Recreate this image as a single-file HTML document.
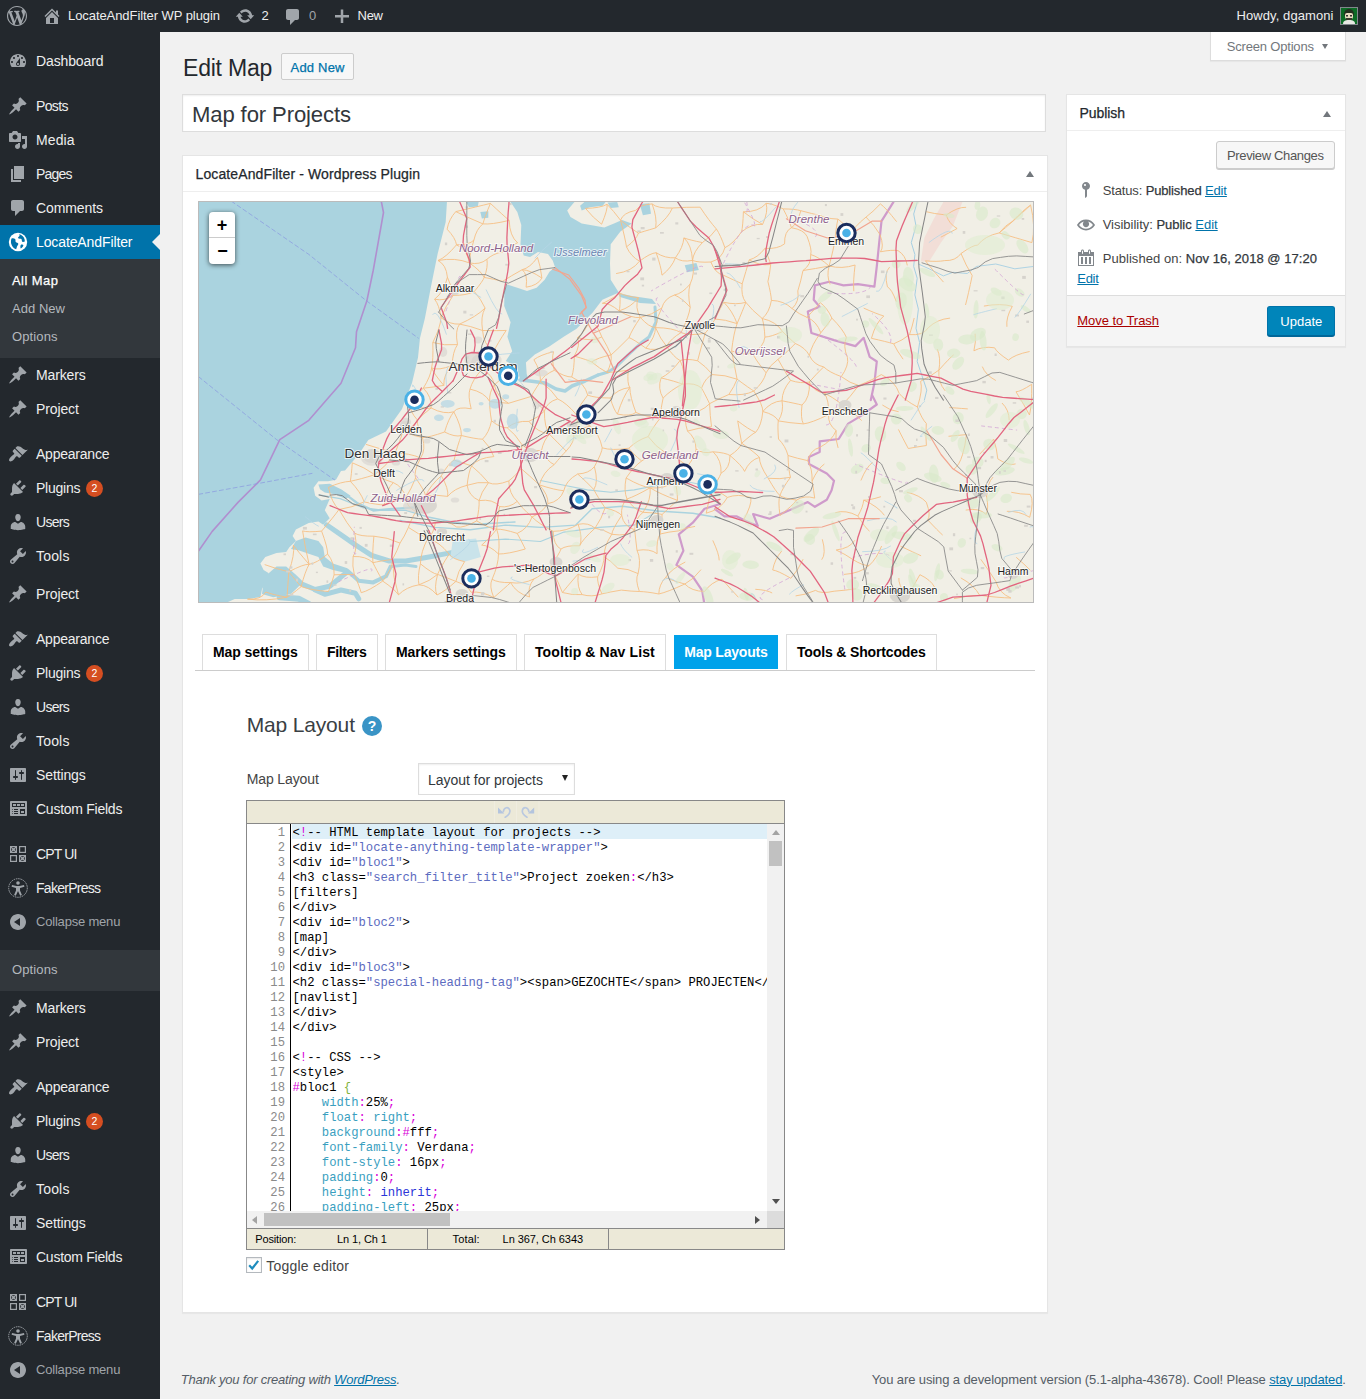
<!DOCTYPE html>
<html lang="en"><head><meta charset="utf-8"><title>Edit Map ‹ LocateAndFilter WP plugin — WordPress</title>
<style>
html,body{margin:0;padding:0}
body{width:1366px;height:1399px;position:relative;overflow:hidden;background:#f1f1f1;font-family:"Liberation Sans", sans-serif;font-size:13px;color:#444}
a{color:#0073aa}
svg{display:block}
</style></head>
<body>
<div style="position:absolute;left:0px;top:0px;width:1366px;height:32px;background:#23282d"></div>
<svg style="position:absolute;left:7px;top:6px" width="20" height="20" viewBox="0 0 20 20"><path fill="#a0a5aa" d="M20 10c0-5.51-4.49-10-10-10C4.48 0 0 4.49 0 10c0 5.52 4.48 10 10 10 5.51 0 10-4.48 10-10zM7.78 15.37L4.37 6.22c.55-.02 1.17-.08 1.17-.08.5-.06.44-1.13-.06-1.11 0 0-1.45.11-2.37.11-.18 0-.37 0-.58-.01C4.12 2.69 6.87 1.11 10 1.11c2.33 0 4.45.87 6.05 2.34-.68-.11-1.65.39-1.65 1.58 0 .74.45 1.36.9 2.1.35.61.55 1.36.55 2.46 0 1.49-1.4 5-1.4 5l-3.03-8.37c.54-.02.82-.17.82-.17.5-.05.44-1.25-.06-1.22 0 0-1.44.12-2.38.12-.87 0-2.33-.12-2.33-.12-.5-.03-.56 1.2-.06 1.22l.92.08 1.26 3.41zM17.41 10c.24-.64.74-1.87.43-4.25.7 1.29 1.05 2.71 1.05 4.25 0 3.29-1.73 6.24-4.4 7.78.97-2.59 1.94-5.2 2.92-7.78zM6.1 18.09C3.12 16.65 1.11 13.53 1.11 10c0-1.3.23-2.48.72-3.59C3.25 10.3 4.67 14.2 6.1 18.09zm4.03-6.63l2.58 6.98c-.86.29-1.76.45-2.71.45-.79 0-1.57-.11-2.29-.33.81-2.38 1.62-4.74 2.42-7.1z"/></svg>
<svg style="position:absolute;left:42px;top:6px" width="20" height="20" viewBox="0 0 20 20"><path fill="#a0a5aa" d="M16 8.5l1.53 1.53-1.06 1.06L10 4.62l-6.47 6.47-1.06-1.06L10 2.5l4 4v-2h2v4zm-6-2.46l6 5.99V18H4v-5.97zM12 17v-5H8v5h4z"/></svg>
<span id="t0" style="position:absolute;left:68px;top:6px;height:20px;line-height:20px;font-size:13px;color:#eee;white-space:nowrap;letter-spacing:-0.070px;">LocateAndFilter WP plugin</span>
<svg style="position:absolute;left:235px;top:6px" width="20" height="20" viewBox="0 0 20 20"><path fill="#a0a5aa" d="M10.2 3.28c3.53 0 6.43 2.61 6.92 6h2.08l-3.5 4-3.5-4h2.32c-.45-1.97-2.21-3.45-4.32-3.45-1.45 0-2.73.71-3.54 1.78L4.95 5.66C6.23 4.2 8.11 3.28 10.2 3.28zm-.4 13.44c-3.52 0-6.43-2.61-6.92-6H.8l3.5-4c1.17 1.33 2.33 2.67 3.5 4H5.48c.45 1.97 2.21 3.45 4.32 3.45 1.45 0 2.73-.71 3.54-1.78l1.71 1.95c-1.28 1.46-3.15 2.38-5.25 2.38z"/></svg>
<span id="t1" style="position:absolute;left:261.5px;top:6px;height:20px;line-height:20px;font-size:13px;color:#eee;white-space:nowrap;">2</span>
<svg style="position:absolute;left:283px;top:7px" width="20" height="20" viewBox="0 0 20 20"><path fill="#a0a5aa" d="M5 2h9c1.1 0 2 .9 2 2v7c0 1.1-.9 2-2 2h-2l-5 5v-5H5c-1.1 0-2-.9-2-2V4c0-1.1.9-2 2-2z"/></svg>
<span id="t2" style="position:absolute;left:309px;top:6px;height:20px;line-height:20px;font-size:13px;color:#a0a5aa;white-space:nowrap;">0</span>
<svg style="position:absolute;left:332px;top:6px" width="20" height="20" viewBox="0 0 20 20"><path fill="#a0a5aa" d="M17 9v2.5h-5.75V17h-2.5v-5.5H3V9h5.75V3.5h2.5V9H17z"/></svg>
<span id="t3" style="position:absolute;left:357.5px;top:6px;height:20px;line-height:20px;font-size:13px;color:#eee;white-space:nowrap;letter-spacing:-0.256px;">New</span>
<span id="t4" style="position:absolute;left:1236.5px;top:6px;height:20px;line-height:20px;font-size:13px;color:#eee;white-space:nowrap;letter-spacing:0.087px;">Howdy, dgamoni</span>
<svg style="position:absolute;left:1340px;top:7px" width="18" height="18" viewBox="0 0 18 18"><rect width="18" height="18" fill="#82878c"/><rect x="1" y="1" width="16" height="16" fill="#0c6a25"/><path d="M4 8c0-4 2-6 5-6s5 2 5 6l-1 1H5z" fill="#23301f"/><rect x="5" y="6" width="8" height="6" rx="2" fill="#e9dcc0"/><rect x="6" y="8" width="2" height="1.500" fill="#333"/><rect x="10" y="8" width="2" height="1.500" fill="#333"/><path d="M6 11h6v2l-3 1-3-1z" fill="#3a3a2e"/><path d="M3 17c0-3 2-4 6-4s6 1 6 4z" fill="#e8e8e4"/></svg>
<div style="position:absolute;left:0px;top:32px;width:160px;height:1367px;background:#23282d"></div>
<svg style="position:absolute;left:8px;top:51px" width="20" height="20" viewBox="0 0 20 20"><path fill="#a0a5aa" d="M3.76 16h12.48c1.1-1.37 1.76-3.11 1.76-5 0-4.42-3.58-8-8-8s-8 3.58-8 8c0 1.89.66 3.63 1.76 5zM10 4c.55 0 1 .45 1 1s-.45 1-1 1-1-.45-1-1 .45-1 1-1zM6 6c.55 0 1 .45 1 1s-.45 1-1 1-1-.45-1-1 .45-1 1-1zm8 0c.55 0 1 .45 1 1s-.45 1-1 1-1-.45-1-1 .45-1 1-1zm-5.37 5.55L12 7v6c0 1.1-.9 2-2 2s-2-.9-2-2c0-.57.24-1.08.63-1.45zM4 10c.55 0 1 .45 1 1s-.45 1-1 1-1-.45-1-1 .45-1 1-1zm12 0c.55 0 1 .45 1 1s-.45 1-1 1-1-.45-1-1 .45-1 1-1zm-5 3c0-.55-.45-1-1-1s-1 .45-1 1 .45 1 1 1 1-.45 1-1z"/></svg>
<span id="t5" style="position:absolute;left:36px;top:51px;height:20px;line-height:20px;font-size:14px;color:#eee;white-space:nowrap;letter-spacing:-0.125px;">Dashboard</span>
<svg style="position:absolute;left:8px;top:96px" width="20" height="20" viewBox="0 0 20 20"><path fill="#a0a5aa" d="M10.44 3.02l1.82-1.82 6.36 6.35-1.83 1.82c-1.05-.68-2.48-.57-3.41.36l-.75.75c-.92.93-1.04 2.35-.35 3.41l-1.83 1.82-2.41-2.41-2.8 2.79c-.42.42-3.38 2.71-3.8 2.29s1.86-3.39 2.28-3.81l2.79-2.79L4.1 9.36l1.83-1.82c1.05.69 2.48.57 3.4-.36l.75-.75c.93-.92 1.05-2.35.36-3.41z"/></svg>
<span id="t6" style="position:absolute;left:36px;top:96px;height:20px;line-height:20px;font-size:14px;color:#eee;white-space:nowrap;letter-spacing:-0.630px;">Posts</span>
<svg style="position:absolute;left:8px;top:130px" width="20" height="20" viewBox="0 0 20 20"><path fill="#a0a5aa" d="M13 11V4c0-.55-.45-1-1-1h-1.67L9 1H5L3.67 3H2c-.55 0-1 .45-1 1v7c0 .55.45 1 1 1h10c.55 0 1-.45 1-1zM7 4.5c1.38 0 2.5 1.12 2.5 2.5S8.38 9.5 7 9.5 4.5 8.38 4.5 7 5.62 4.5 7 4.5zM14 6h5v10.5c0 1.38-1.12 2.5-2.5 2.5S14 17.88 14 16.5s1.12-2.5 2.5-2.5c.17 0 .34.02.5.05V9h-3V6zm-4 8.05V13h2v3.5c0 1.38-1.12 2.5-2.5 2.5S7 17.88 7 16.5 8.12 14 9.5 14c.17 0 .34.02.5.05z"/></svg>
<span id="t7" style="position:absolute;left:36px;top:130px;height:20px;line-height:20px;font-size:14px;color:#eee;white-space:nowrap;letter-spacing:0.092px;">Media</span>
<svg style="position:absolute;left:8px;top:164px" width="20" height="20" viewBox="0 0 20 20"><path fill="#a0a5aa" d="M6 15V2h10v13H6zm-1 1h8v2H3V5h2v11z"/></svg>
<span id="t8" style="position:absolute;left:36px;top:164px;height:20px;line-height:20px;font-size:14px;color:#eee;white-space:nowrap;letter-spacing:-0.801px;">Pages</span>
<svg style="position:absolute;left:8px;top:198px" width="20" height="20" viewBox="0 0 20 20"><path fill="#a0a5aa" d="M5 2h9c1.1 0 2 .9 2 2v7c0 1.1-.9 2-2 2h-2l-5 5v-5H5c-1.1 0-2-.9-2-2V4c0-1.1.9-2 2-2z"/></svg>
<span id="t9" style="position:absolute;left:36px;top:198px;height:20px;line-height:20px;font-size:14px;color:#eee;white-space:nowrap;letter-spacing:-0.098px;">Comments</span>
<div style="position:absolute;left:0px;top:225px;width:160px;height:34px;background:#0073aa"></div>
<div style="position:absolute;left:152px;top:234px;width:0;height:0;border:8px solid transparent;border-right-color:#f1f1f1;border-left-width:0"></div>
<svg style="position:absolute;left:8px;top:232px" width="20" height="20" viewBox="0 0 20 20"><circle cx="10" cy="10" r="9.200" fill="#fff"/><path fill="#0073aa" d="M3.500 6.500c1.500-.5 3-.2 3.800.8.600.9-.2 1.800.5 2.600.8.900 2 .6 2.400 1.700.4 1.200-.7 2-1.200 3-.4.900-.3 1.900-.9 2.700-2.300-.9-4.300-3-4.900-5.600-.4-1.700-.3-3.600.3-5.200zM11 2.200c1 .900.600 2-.3 2.600-.9.500-.8 1.400 0 1.800.9.400 2-.2 2.700.5.700.800.100 1.900.9 2.600.7.500 1.700.200 2.500-.200.300-2.600-1.200-5.300-3.600-6.600-.7-.4-1.400-.6-2.200-.7zM13.200 12.500c.9-.3 1.900.1 2.200.9-.5 1.300-1.500 2.500-2.700 3.200-.5-1.300-.5-3.500.5-4.100z"/></svg>
<span id="t10" style="position:absolute;left:36px;top:232px;height:20px;line-height:20px;font-size:14px;color:#fff;white-space:nowrap;letter-spacing:-0.111px;">LocateAndFilter</span>
<div style="position:absolute;left:0px;top:259px;width:160px;height:99px;background:#32373c"></div>
<span id="t11" style="position:absolute;left:12px;top:270.7px;height:20px;line-height:20px;font-size:13px;color:#fff;white-space:nowrap;-webkit-text-stroke:.25px #fff;letter-spacing:0.440px;">All Map</span>
<span id="t12" style="position:absolute;left:12px;top:298.7px;height:20px;line-height:20px;font-size:13px;color:#b4b9be;white-space:nowrap;letter-spacing:0.040px;">Add New</span>
<span id="t13" style="position:absolute;left:12px;top:326.7px;height:20px;line-height:20px;font-size:13px;color:#b4b9be;white-space:nowrap;letter-spacing:0.116px;">Options</span>
<svg style="position:absolute;left:8px;top:365px" width="20" height="20" viewBox="0 0 20 20"><path fill="#a0a5aa" d="M10.44 3.02l1.82-1.82 6.36 6.35-1.83 1.82c-1.05-.68-2.48-.57-3.41.36l-.75.75c-.92.93-1.04 2.35-.35 3.41l-1.83 1.82-2.41-2.41-2.8 2.79c-.42.42-3.38 2.71-3.8 2.29s1.86-3.39 2.28-3.81l2.79-2.79L4.1 9.36l1.83-1.82c1.05.69 2.48.57 3.4-.36l.75-.75c.93-.92 1.05-2.35.36-3.41z"/></svg>
<span id="t14" style="position:absolute;left:36px;top:365px;height:20px;line-height:20px;font-size:14px;color:#eee;white-space:nowrap;letter-spacing:-0.127px;">Markers</span>
<svg style="position:absolute;left:8px;top:399px" width="20" height="20" viewBox="0 0 20 20"><path fill="#a0a5aa" d="M10.44 3.02l1.82-1.82 6.36 6.35-1.83 1.82c-1.05-.68-2.48-.57-3.41.36l-.75.75c-.92.93-1.04 2.35-.35 3.41l-1.83 1.82-2.41-2.41-2.8 2.79c-.42.42-3.38 2.71-3.8 2.29s1.86-3.39 2.28-3.81l2.79-2.79L4.1 9.36l1.83-1.82c1.05.69 2.48.57 3.4-.36l.75-.75c.93-.92 1.05-2.35.36-3.41z"/></svg>
<span id="t15" style="position:absolute;left:36px;top:399px;height:20px;line-height:20px;font-size:14px;color:#eee;white-space:nowrap;letter-spacing:-0.130px;">Project</span>
<svg style="position:absolute;left:8px;top:444px" width="20" height="20" viewBox="0 0 20 20"><path fill="#a0a5aa" d="M14.48 11.06L7.41 3.99l1.5-1.5c.5-.56 2.3-.47 3.51.32 1.21.8 1.43 1.28 2.91 2.1 1.18.64 2.45 1.26 4.45.85zm-.71.71L6.7 4.7 4.93 6.47c-.39.39-.39 1.02 0 1.41l1.06 1.06c.39.39.39 1.03 0 1.42-.6.6-1.43 1.11-2.21 1.69-.35.26-.7.53-1.01.84C1.43 14.23.4 16.08 1.4 17.07c.99 1 2.84-.03 4.18-1.36.31-.31.58-.66.85-1.02.57-.78 1.08-1.61 1.69-2.21.39-.39 1.02-.39 1.41 0l1.06 1.06c.39.39 1.02.39 1.41 0z"/></svg>
<span id="t16" style="position:absolute;left:36px;top:444px;height:20px;line-height:20px;font-size:14px;color:#eee;white-space:nowrap;letter-spacing:-0.223px;">Appearance</span>
<svg style="position:absolute;left:8px;top:478px" width="20" height="20" viewBox="0 0 20 20"><path fill="#a0a5aa" d="M13.11 4.36L9.87 7.6 8 5.73l3.24-3.24c.35-.34 1.05-.2 1.56.32.52.51.66 1.21.31 1.55zm-8 1.77l.91-1.12 9.01 9.01-1.19.84c-.71.71-2.63 1.16-3.82 1.16H6.14L4.9 17.26c-.59.59-1.54.59-2.12 0-.59-.58-.59-1.53 0-2.12l1.24-1.24v-3.88c0-1.13.4-3.19 1.09-3.89zm7.26 3.97l3.24-3.24c.34-.35 1.04-.21 1.55.31.52.51.66 1.21.31 1.55l-3.24 3.25z"/></svg>
<span id="t17" style="position:absolute;left:36px;top:478px;height:20px;line-height:20px;font-size:14px;color:#eee;white-space:nowrap;letter-spacing:-0.237px;">Plugins</span>
<div style="position:absolute;left:86px;top:479.5px;width:17px;height:17px;border-radius:9px;background:#d54e21;color:#fff;font-size:10.500px;line-height:17px;text-align:center">2</div>
<svg style="position:absolute;left:8px;top:512px" width="20" height="20" viewBox="0 0 20 20"><path fill="#a0a5aa" d="M10 9.25c-2.27 0-2.73-3.44-2.73-3.44C7 4.02 7.82 2 9.97 2c2.16 0 2.98 2.02 2.71 3.81 0 0-.41 3.44-2.68 3.44zm0 2.57L12.72 10c2.39 0 4.52 2.33 4.52 4.53v2.49s-3.65 1.13-7.24 1.13c-3.65 0-7.24-1.13-7.24-1.13v-2.49c0-2.25 1.94-4.48 4.47-4.48z"/></svg>
<span id="t18" style="position:absolute;left:36px;top:512px;height:20px;line-height:20px;font-size:14px;color:#eee;white-space:nowrap;letter-spacing:-0.716px;">Users</span>
<svg style="position:absolute;left:8px;top:546px" width="20" height="20" viewBox="0 0 20 20"><path fill="#a0a5aa" d="M16.68 9.77c-1.34 1.34-3.3 1.67-4.95.99l-5.41 6.52c-.99.99-2.59.99-3.58 0s-.99-2.59 0-3.57l6.52-5.42c-.68-1.65-.35-3.61.99-4.95 1.28-1.28 3.12-1.62 4.72-1.06l-2.89 2.89 2.82 2.82 2.86-2.87c.53 1.58.18 3.39-1.08 4.65zM3.81 16.21c.4.39 1.04.39 1.43 0 .4-.4.4-1.04 0-1.43-.39-.4-1.03-.4-1.43 0-.39.39-.39 1.03 0 1.43z"/></svg>
<span id="t19" style="position:absolute;left:36px;top:546px;height:20px;line-height:20px;font-size:14px;color:#eee;white-space:nowrap;letter-spacing:0.178px;">Tools</span>
<svg style="position:absolute;left:8px;top:584px" width="20" height="20" viewBox="0 0 20 20"><path fill="#a0a5aa" d="M10.44 3.02l1.82-1.82 6.36 6.35-1.83 1.82c-1.05-.68-2.48-.57-3.41.36l-.75.75c-.92.93-1.04 2.35-.35 3.41l-1.83 1.82-2.41-2.41-2.8 2.79c-.42.42-3.38 2.71-3.8 2.29s1.86-3.39 2.28-3.81l2.79-2.79L4.1 9.36l1.83-1.82c1.05.69 2.48.57 3.4-.36l.75-.75c.93-.92 1.05-2.35.36-3.41z"/></svg>
<span id="t20" style="position:absolute;left:36px;top:584px;height:20px;line-height:20px;font-size:14px;color:#eee;white-space:nowrap;letter-spacing:-0.130px;">Project</span>
<svg style="position:absolute;left:8px;top:629px" width="20" height="20" viewBox="0 0 20 20"><path fill="#a0a5aa" d="M14.48 11.06L7.41 3.99l1.5-1.5c.5-.56 2.3-.47 3.51.32 1.21.8 1.43 1.28 2.91 2.1 1.18.64 2.45 1.26 4.45.85zm-.71.71L6.7 4.7 4.93 6.47c-.39.39-.39 1.02 0 1.41l1.06 1.06c.39.39.39 1.03 0 1.42-.6.6-1.43 1.11-2.21 1.69-.35.26-.7.53-1.01.84C1.43 14.23.4 16.08 1.4 17.07c.99 1 2.84-.03 4.18-1.36.31-.31.58-.66.85-1.02.57-.78 1.08-1.61 1.69-2.21.39-.39 1.02-.39 1.41 0l1.06 1.06c.39.39 1.02.39 1.41 0z"/></svg>
<span id="t21" style="position:absolute;left:36px;top:629px;height:20px;line-height:20px;font-size:14px;color:#eee;white-space:nowrap;letter-spacing:-0.223px;">Appearance</span>
<svg style="position:absolute;left:8px;top:663px" width="20" height="20" viewBox="0 0 20 20"><path fill="#a0a5aa" d="M13.11 4.36L9.87 7.6 8 5.73l3.24-3.24c.35-.34 1.05-.2 1.56.32.52.51.66 1.21.31 1.55zm-8 1.77l.91-1.12 9.01 9.01-1.19.84c-.71.71-2.63 1.16-3.82 1.16H6.14L4.9 17.26c-.59.59-1.54.59-2.12 0-.59-.58-.59-1.53 0-2.12l1.24-1.24v-3.88c0-1.13.4-3.19 1.09-3.89zm7.26 3.97l3.24-3.24c.34-.35 1.04-.21 1.55.31.52.51.66 1.21.31 1.55l-3.24 3.25z"/></svg>
<span id="t22" style="position:absolute;left:36px;top:663px;height:20px;line-height:20px;font-size:14px;color:#eee;white-space:nowrap;letter-spacing:-0.237px;">Plugins</span>
<div style="position:absolute;left:86px;top:664.5px;width:17px;height:17px;border-radius:9px;background:#d54e21;color:#fff;font-size:10.500px;line-height:17px;text-align:center">2</div>
<svg style="position:absolute;left:8px;top:697px" width="20" height="20" viewBox="0 0 20 20"><path fill="#a0a5aa" d="M10 9.25c-2.27 0-2.73-3.44-2.73-3.44C7 4.02 7.82 2 9.97 2c2.16 0 2.98 2.02 2.71 3.81 0 0-.41 3.44-2.68 3.44zm0 2.57L12.72 10c2.39 0 4.52 2.33 4.52 4.53v2.49s-3.65 1.13-7.24 1.13c-3.65 0-7.24-1.13-7.24-1.13v-2.49c0-2.25 1.94-4.48 4.47-4.48z"/></svg>
<span id="t23" style="position:absolute;left:36px;top:697px;height:20px;line-height:20px;font-size:14px;color:#eee;white-space:nowrap;letter-spacing:-0.716px;">Users</span>
<svg style="position:absolute;left:8px;top:731px" width="20" height="20" viewBox="0 0 20 20"><path fill="#a0a5aa" d="M16.68 9.77c-1.34 1.34-3.3 1.67-4.95.99l-5.41 6.52c-.99.99-2.59.99-3.58 0s-.99-2.59 0-3.57l6.52-5.42c-.68-1.65-.35-3.61.99-4.95 1.28-1.28 3.12-1.62 4.72-1.06l-2.89 2.89 2.82 2.82 2.86-2.87c.53 1.58.18 3.39-1.08 4.65zM3.81 16.21c.4.39 1.04.39 1.43 0 .4-.4.4-1.04 0-1.43-.39-.4-1.03-.4-1.43 0-.39.39-.39 1.03 0 1.43z"/></svg>
<span id="t24" style="position:absolute;left:36px;top:731px;height:20px;line-height:20px;font-size:14px;color:#eee;white-space:nowrap;letter-spacing:0.178px;">Tools</span>
<svg style="position:absolute;left:8px;top:765px" width="20" height="20" viewBox="0 0 20 20"><path fill="#a0a5aa" d="M18 16V4c0-.55-.45-1-1-1H3c-.55 0-1 .45-1 1v12c0 .55.45 1 1 1h14c.55 0 1-.45 1-1zM8 11h1c.55 0 1 .45 1 1s-.45 1-1 1H8v1.5c0 .28-.22.5-.5.5s-.5-.22-.5-.5V13H6c-.55 0-1-.45-1-1s.45-1 1-1h1V5.5c0-.28.22-.5.5-.5s.5.22.5.5V11zm5-2h-1c-.55 0-1-.45-1-1s.45-1 1-1h1V5.5c0-.28.22-.5.5-.5s.5.22.5.5V7h1c.55 0 1 .45 1 1s-.45 1-1 1h-1v5.5c0 .28-.22.5-.5.5s-.5-.22-.5-.5V9z"/></svg>
<span id="t25" style="position:absolute;left:36px;top:765px;height:20px;line-height:20px;font-size:14px;color:#eee;white-space:nowrap;letter-spacing:-0.113px;">Settings</span>
<svg style="position:absolute;left:8px;top:799px" width="20" height="20" viewBox="0 0 20 20"><path fill="#a0a5aa" d="M19 16V3c0-.55-.45-1-1-1H3c-.55 0-1 .45-1 1v13c0 .55.45 1 1 1h15c.55 0 1-.45 1-1zM4 4h13v4H4V4zm1 1v2h3V5H5zm4 0v2h3V5H9zm4 0v2h3V5h-3zm-8.5 5c.28 0 .5.22.5.5s-.22.5-.5.5-.5-.22-.5-.5.22-.5.5-.5zM6 10h4v1H6v-1zm6 0h5v5h-5v-5zm-7.500 2c.28 0 .5.22.5.5s-.22.5-.5.5-.5-.22-.5-.5.22-.5.5-.5zM6 12h4v1H6v-1zm7 0v2h3v-2h-3zm-8.500 2c.28 0 .5.22.5.5s-.22.5-.5.5-.5-.22-.5-.5.22-.5.5-.5zM6 14h4v1H6v-1z"/></svg>
<span id="t26" style="position:absolute;left:36px;top:799px;height:20px;line-height:20px;font-size:14px;color:#eee;white-space:nowrap;letter-spacing:-0.257px;">Custom Fields</span>
<svg style="position:absolute;left:8px;top:844px" width="20" height="20" viewBox="0 0 20 20"><g fill="none" stroke="#a0a5aa" stroke-width="1.2"><rect x="2.6" y="2.600" width="5.800" height="5.800"/><rect x="11.600" y="2.600" width="5.800" height="5.800"/><rect x="2.600" y="11.600" width="5.800" height="5.800"/><rect x="11.600" y="11.600" width="5.800" height="5.800"/></g><g stroke="#a0a5aa" stroke-width="1.100"><path d="M2.600 2.600l5.800 5.800M8.400 2.600l-5.800 5.800M11.600 11.600l5.800 5.800M17.400 11.600l-5.800 5.800"/></g><g fill="#a0a5aa"><rect x="4.300" y="4.300" width="2.400" height="2.400"/><rect x="13.300" y="13.300" width="2.400" height="2.400"/></g></svg>
<span id="t27" style="position:absolute;left:36px;top:844px;height:20px;line-height:20px;font-size:14px;color:#eee;white-space:nowrap;letter-spacing:-0.869px;">CPT UI</span>
<svg style="position:absolute;left:7px;top:877px" width="22" height="22" viewBox="0 0 22 22"><circle cx="11" cy="11" r="9.300" fill="none" stroke="#a0a5aa" stroke-width="1" stroke-dasharray="1.500 .800"/><circle cx="11" cy="6" r="1.800" fill="#a0a5aa"/><path fill="#a0a5aa" d="M5 8l4.400 1h3.200l4.400-1 .4 1.700-4.400 1.300v2.400l1.900 4.600-1.700.7-2.100-4.500h-.2l-2.100 4.500-1.700-.7 1.900-4.600v-2.400l-4.400-1.300z"/></svg>
<span id="t28" style="position:absolute;left:36px;top:878px;height:20px;line-height:20px;font-size:14px;color:#eee;white-space:nowrap;letter-spacing:-0.731px;">FakerPress</span>
<svg style="position:absolute;left:8px;top:912px" width="20" height="20" viewBox="0 0 20 20"><path fill="#a0a5aa" d="M10 2.020c-4.420 0-8 3.580-8 8s3.580 8 8 8 8-3.580 8-8-3.580-8-8-8zM12 14l-6-4 6-4v8z"/></svg>
<span id="t29" style="position:absolute;left:36px;top:912px;height:20px;line-height:20px;font-size:13px;color:#a0a5aa;white-space:nowrap;letter-spacing:-0.194px;">Collapse menu</span>
<div style="position:absolute;left:0px;top:950px;width:160px;height:41px;background:#32373c"></div>
<span id="t30" style="position:absolute;left:12px;top:959.5px;height:20px;line-height:20px;font-size:13px;color:#b4b9be;white-space:nowrap;letter-spacing:0.116px;">Options</span>
<svg style="position:absolute;left:8px;top:998px" width="20" height="20" viewBox="0 0 20 20"><path fill="#a0a5aa" d="M10.44 3.02l1.82-1.82 6.36 6.35-1.83 1.82c-1.05-.68-2.48-.57-3.41.36l-.75.75c-.92.93-1.04 2.35-.35 3.41l-1.83 1.82-2.41-2.41-2.8 2.79c-.42.42-3.38 2.71-3.8 2.29s1.86-3.39 2.28-3.81l2.79-2.79L4.1 9.36l1.83-1.82c1.05.69 2.48.57 3.4-.36l.75-.75c.93-.92 1.05-2.35.36-3.41z"/></svg>
<span id="t31" style="position:absolute;left:36px;top:998px;height:20px;line-height:20px;font-size:14px;color:#eee;white-space:nowrap;letter-spacing:-0.127px;">Markers</span>
<svg style="position:absolute;left:8px;top:1032px" width="20" height="20" viewBox="0 0 20 20"><path fill="#a0a5aa" d="M10.44 3.02l1.82-1.82 6.36 6.35-1.83 1.82c-1.05-.68-2.48-.57-3.41.36l-.75.75c-.92.93-1.04 2.35-.35 3.41l-1.83 1.82-2.41-2.41-2.8 2.79c-.42.42-3.38 2.71-3.8 2.29s1.86-3.39 2.28-3.81l2.79-2.79L4.1 9.36l1.83-1.82c1.05.69 2.48.57 3.4-.36l.75-.75c.93-.92 1.05-2.35.36-3.41z"/></svg>
<span id="t32" style="position:absolute;left:36px;top:1032px;height:20px;line-height:20px;font-size:14px;color:#eee;white-space:nowrap;letter-spacing:-0.130px;">Project</span>
<svg style="position:absolute;left:8px;top:1077px" width="20" height="20" viewBox="0 0 20 20"><path fill="#a0a5aa" d="M14.48 11.06L7.41 3.99l1.5-1.5c.5-.56 2.3-.47 3.51.32 1.21.8 1.43 1.28 2.91 2.1 1.18.64 2.45 1.26 4.45.85zm-.71.71L6.7 4.7 4.93 6.47c-.39.39-.39 1.02 0 1.41l1.06 1.06c.39.39.39 1.03 0 1.42-.6.6-1.43 1.11-2.21 1.69-.35.26-.7.53-1.01.84C1.43 14.23.4 16.08 1.4 17.07c.99 1 2.84-.03 4.18-1.36.31-.31.58-.66.85-1.02.57-.78 1.08-1.61 1.69-2.21.39-.39 1.02-.39 1.41 0l1.06 1.06c.39.39 1.02.39 1.41 0z"/></svg>
<span id="t33" style="position:absolute;left:36px;top:1077px;height:20px;line-height:20px;font-size:14px;color:#eee;white-space:nowrap;letter-spacing:-0.223px;">Appearance</span>
<svg style="position:absolute;left:8px;top:1111px" width="20" height="20" viewBox="0 0 20 20"><path fill="#a0a5aa" d="M13.11 4.36L9.87 7.6 8 5.73l3.24-3.24c.35-.34 1.05-.2 1.56.32.52.51.66 1.21.31 1.55zm-8 1.77l.91-1.12 9.01 9.01-1.19.84c-.71.71-2.63 1.16-3.82 1.16H6.14L4.9 17.26c-.59.59-1.54.59-2.12 0-.59-.58-.59-1.53 0-2.12l1.24-1.24v-3.88c0-1.13.4-3.19 1.09-3.89zm7.26 3.97l3.24-3.24c.34-.35 1.04-.21 1.55.31.52.51.66 1.21.31 1.55l-3.24 3.25z"/></svg>
<span id="t34" style="position:absolute;left:36px;top:1111px;height:20px;line-height:20px;font-size:14px;color:#eee;white-space:nowrap;letter-spacing:-0.237px;">Plugins</span>
<div style="position:absolute;left:86px;top:1112.5px;width:17px;height:17px;border-radius:9px;background:#d54e21;color:#fff;font-size:10.500px;line-height:17px;text-align:center">2</div>
<svg style="position:absolute;left:8px;top:1145px" width="20" height="20" viewBox="0 0 20 20"><path fill="#a0a5aa" d="M10 9.25c-2.27 0-2.73-3.44-2.73-3.44C7 4.02 7.82 2 9.97 2c2.16 0 2.98 2.02 2.71 3.81 0 0-.41 3.44-2.68 3.44zm0 2.57L12.72 10c2.39 0 4.52 2.33 4.52 4.53v2.49s-3.65 1.13-7.24 1.13c-3.65 0-7.24-1.13-7.24-1.13v-2.49c0-2.25 1.94-4.48 4.47-4.48z"/></svg>
<span id="t35" style="position:absolute;left:36px;top:1145px;height:20px;line-height:20px;font-size:14px;color:#eee;white-space:nowrap;letter-spacing:-0.716px;">Users</span>
<svg style="position:absolute;left:8px;top:1179px" width="20" height="20" viewBox="0 0 20 20"><path fill="#a0a5aa" d="M16.68 9.77c-1.34 1.34-3.3 1.67-4.95.99l-5.41 6.52c-.99.99-2.59.99-3.58 0s-.99-2.59 0-3.57l6.52-5.42c-.68-1.65-.35-3.61.99-4.95 1.28-1.28 3.12-1.62 4.72-1.06l-2.89 2.89 2.82 2.82 2.86-2.87c.53 1.58.18 3.39-1.08 4.65zM3.81 16.21c.4.39 1.04.39 1.43 0 .4-.4.4-1.04 0-1.43-.39-.4-1.03-.4-1.43 0-.39.39-.39 1.03 0 1.43z"/></svg>
<span id="t36" style="position:absolute;left:36px;top:1179px;height:20px;line-height:20px;font-size:14px;color:#eee;white-space:nowrap;letter-spacing:0.178px;">Tools</span>
<svg style="position:absolute;left:8px;top:1213px" width="20" height="20" viewBox="0 0 20 20"><path fill="#a0a5aa" d="M18 16V4c0-.55-.45-1-1-1H3c-.55 0-1 .45-1 1v12c0 .55.45 1 1 1h14c.55 0 1-.45 1-1zM8 11h1c.55 0 1 .45 1 1s-.45 1-1 1H8v1.5c0 .28-.22.5-.5.5s-.5-.22-.5-.5V13H6c-.55 0-1-.45-1-1s.45-1 1-1h1V5.5c0-.28.22-.5.5-.5s.5.22.5.5V11zm5-2h-1c-.55 0-1-.45-1-1s.45-1 1-1h1V5.5c0-.28.22-.5.5-.5s.5.22.5.5V7h1c.55 0 1 .45 1 1s-.45 1-1 1h-1v5.5c0 .28-.22.5-.5.5s-.5-.22-.5-.5V9z"/></svg>
<span id="t37" style="position:absolute;left:36px;top:1213px;height:20px;line-height:20px;font-size:14px;color:#eee;white-space:nowrap;letter-spacing:-0.113px;">Settings</span>
<svg style="position:absolute;left:8px;top:1247px" width="20" height="20" viewBox="0 0 20 20"><path fill="#a0a5aa" d="M19 16V3c0-.55-.45-1-1-1H3c-.55 0-1 .45-1 1v13c0 .55.45 1 1 1h15c.55 0 1-.45 1-1zM4 4h13v4H4V4zm1 1v2h3V5H5zm4 0v2h3V5H9zm4 0v2h3V5h-3zm-8.5 5c.28 0 .5.22.5.5s-.22.5-.5.5-.5-.22-.5-.5.22-.5.5-.5zM6 10h4v1H6v-1zm6 0h5v5h-5v-5zm-7.500 2c.28 0 .5.22.5.5s-.22.5-.5.5-.5-.22-.5-.5.22-.5.5-.5zM6 12h4v1H6v-1zm7 0v2h3v-2h-3zm-8.500 2c.28 0 .5.22.5.5s-.22.5-.5.5-.5-.22-.5-.5.22-.5.5-.5zM6 14h4v1H6v-1z"/></svg>
<span id="t38" style="position:absolute;left:36px;top:1247px;height:20px;line-height:20px;font-size:14px;color:#eee;white-space:nowrap;letter-spacing:-0.257px;">Custom Fields</span>
<svg style="position:absolute;left:8px;top:1292px" width="20" height="20" viewBox="0 0 20 20"><g fill="none" stroke="#a0a5aa" stroke-width="1.2"><rect x="2.6" y="2.600" width="5.800" height="5.800"/><rect x="11.600" y="2.600" width="5.800" height="5.800"/><rect x="2.600" y="11.600" width="5.800" height="5.800"/><rect x="11.600" y="11.600" width="5.800" height="5.800"/></g><g stroke="#a0a5aa" stroke-width="1.100"><path d="M2.600 2.600l5.800 5.800M8.400 2.600l-5.800 5.800M11.600 11.600l5.800 5.800M17.400 11.600l-5.800 5.800"/></g><g fill="#a0a5aa"><rect x="4.300" y="4.300" width="2.400" height="2.400"/><rect x="13.300" y="13.300" width="2.400" height="2.400"/></g></svg>
<span id="t39" style="position:absolute;left:36px;top:1292px;height:20px;line-height:20px;font-size:14px;color:#eee;white-space:nowrap;letter-spacing:-0.869px;">CPT UI</span>
<svg style="position:absolute;left:7px;top:1325px" width="22" height="22" viewBox="0 0 22 22"><circle cx="11" cy="11" r="9.300" fill="none" stroke="#a0a5aa" stroke-width="1" stroke-dasharray="1.500 .800"/><circle cx="11" cy="6" r="1.800" fill="#a0a5aa"/><path fill="#a0a5aa" d="M5 8l4.400 1h3.200l4.400-1 .4 1.700-4.400 1.300v2.400l1.900 4.600-1.700.7-2.100-4.500h-.2l-2.100 4.500-1.700-.7 1.900-4.600v-2.400l-4.400-1.300z"/></svg>
<span id="t40" style="position:absolute;left:36px;top:1326px;height:20px;line-height:20px;font-size:14px;color:#eee;white-space:nowrap;letter-spacing:-0.731px;">FakerPress</span>
<svg style="position:absolute;left:8px;top:1360px" width="20" height="20" viewBox="0 0 20 20"><path fill="#a0a5aa" d="M10 2.020c-4.420 0-8 3.580-8 8s3.580 8 8 8 8-3.580 8-8-3.580-8-8-8zM12 14l-6-4 6-4v8z"/></svg>
<span id="t41" style="position:absolute;left:36px;top:1360px;height:20px;line-height:20px;font-size:13px;color:#a0a5aa;white-space:nowrap;letter-spacing:-0.194px;">Collapse menu</span>
<div style="position:absolute;left:1210px;top:32px;width:136px;height:29px;box-sizing:border-box;background:#fff;border:1px solid #ddd;border-top:none;box-shadow:0 1px 1px rgba(0,0,0,.04)"></div>
<span id="t42" style="position:absolute;left:1226.7px;top:37px;height:20px;line-height:20px;font-size:13px;color:#72777c;white-space:nowrap;letter-spacing:-0.178px;">Screen Options</span>
<div style="position:absolute;left:1321.500px;top:43.500px;width:0;height:0;border:3.700px solid transparent;border-top:5.500px solid #72777c;border-bottom-width:0"></div>
<span id="t43" style="position:absolute;left:183px;top:53px;height:30px;line-height:30px;font-size:23px;color:#23282d;white-space:nowrap;letter-spacing:-0.209px;">Edit Map</span>
<div style="position:absolute;left:281px;top:53px;width:73px;height:27px;box-sizing:border-box;background:#f7f7f7;border:1px solid #ccc;border-radius:2px"></div>
<span id="t44" style="position:absolute;left:290.5px;top:58px;height:20px;line-height:20px;font-size:13px;color:#0073aa;white-space:nowrap;-webkit-text-stroke:.25px #0073aa;letter-spacing:0.206px;">Add New</span>
<div style="position:absolute;left:182px;top:94px;width:864px;height:38px;box-sizing:border-box;background:#fff;border:1px solid #ddd;box-shadow:inset 0 1px 2px rgba(0,0,0,.07)"></div>
<span id="t45" style="position:absolute;left:192px;top:99.5px;height:30px;line-height:30px;font-size:22.1px;color:#32373c;white-space:nowrap;letter-spacing:-0.124px;">Map for Projects</span>
<div style="position:absolute;left:182px;top:155px;width:866px;height:1158px;box-sizing:border-box;background:#fff;border:1px solid #e5e5e5;box-shadow:0 1px 1px rgba(0,0,0,.04)"></div>
<div style="position:absolute;left:183px;top:191px;width:864px;height:1px;background:#eee"></div>
<span id="t46" style="position:absolute;left:195.5px;top:164px;height:20px;line-height:20px;font-size:14px;color:#23282d;white-space:nowrap;-webkit-text-stroke:.25px #23282d;letter-spacing:0.114px;">LocateAndFilter - Wordpress Plugin</span>
<div style="position:absolute;left:1025.500px;top:171px;width:0;height:0;border:4px solid transparent;border-bottom:6px solid #72777c;border-top-width:0"></div>
<div style="position:absolute;left:1066px;top:94px;width:280px;height:253px;box-sizing:border-box;background:#fff;border:1px solid #e5e5e5;box-shadow:0 1px 1px rgba(0,0,0,.04)"></div>
<div style="position:absolute;left:1067px;top:130px;width:278px;height:1px;background:#eee"></div>
<span id="t47" style="position:absolute;left:1079.5px;top:102.5px;height:20px;line-height:20px;font-size:14px;color:#23282d;white-space:nowrap;-webkit-text-stroke:.25px #23282d;letter-spacing:-0.070px;">Publish</span>
<div style="position:absolute;left:1323px;top:111px;width:0;height:0;border:4px solid transparent;border-bottom:6px solid #72777c;border-top-width:0"></div>
<div style="position:absolute;left:1216px;top:141px;width:119px;height:28px;box-sizing:border-box;background:#f7f7f7;border:1px solid #ccc;border-radius:3px;box-shadow:0 1px 0 #ccc"></div>
<span id="t48" style="position:absolute;left:1227px;top:146px;height:20px;line-height:20px;font-size:13px;color:#555;white-space:nowrap;letter-spacing:-0.349px;">Preview Changes</span>
<svg style="position:absolute;left:1076px;top:180px" width="20" height="20" viewBox="0 0 20 20"><path fill="#82878c" d="M14 6c0 1.860-1.280 3.410-3 3.860v6.140c0 1-2 2-2 2v-8.140c-1.720-0.450-3-2-3-3.860 0-2.210 1.790-4 4-4s4 1.790 4 4zM8 5c0 0.550 0.450 1 1 1s1-0.450 1-1-0.450-1-1-1-1 0.450-1 1z"/></svg>
<span id="t49" style="position:absolute;left:1102.7px;top:180.5px;height:20px;line-height:20px;font-size:13px;color:#444;white-space:nowrap;letter-spacing:-0.139px;">Status: <b style="font-weight:400;color:#32373c;-webkit-text-stroke:.25px #32373c">Published</b> <a style="text-decoration:underline">Edit</a></span>
<svg style="position:absolute;left:1077px;top:215.5px" width="18" height="18" viewBox="0 0 20 20"><path fill="#82878c" d="M19.7 9.4C17.7 6 14 3.900 10 3.900S2.300 6 .300 9.400L0 10l.300.600c2 3.400 5.700 5.500 9.700 5.500s7.700-2.100 9.700-5.500l.300-.600-.300-.600zM10 14.100c-3.100 0-6-1.600-7.700-4.100C3.600 8 5.700 6.600 8 6.100c-.900.600-1.500 1.700-1.500 2.900 0 1.900 1.600 3.500 3.500 3.500s3.500-1.600 3.500-3.500c0-1.200-.600-2.300-1.500-2.900 2.300.500 4.400 1.900 5.700 3.900-1.700 2.500-4.600 4.100-7.700 4.100z"/></svg>
<span id="t50" style="position:absolute;left:1102.7px;top:214.5px;height:20px;line-height:20px;font-size:13px;color:#444;white-space:nowrap;letter-spacing:-0.018px;">Visibility: <b style="font-weight:400;color:#32373c;-webkit-text-stroke:.25px #32373c">Public</b> <a style="text-decoration:underline">Edit</a></span>
<svg style="position:absolute;left:1076px;top:247.5px" width="20" height="20" viewBox="0 0 20 20"><path fill="#82878c" d="M15 4h3v14H2V4h3V3c0-.83.67-1.500 1.500-1.500S8 2.170 8 3v1h4V3c0-.83.67-1.500 1.500-1.500S15 2.170 15 3v1zM6 3v2.500c0 .28.22.5.5.5s.5-.22.5-.5V3c0-.28-.22-.5-.5-.5S6 2.720 6 3zm7 0v2.500c0 .28.22.5.5.5s.5-.22.5-.5V3c0-.28-.22-.5-.5-.5s-.5.22-.5.5zm4 14V8H3v9h14zM7 16V9H5v7h2zm4 0V9H9v7h2zm4 0V9h-2v7h2z"/></svg>
<span id="t51" style="position:absolute;left:1102.7px;top:248.5px;height:20px;line-height:20px;font-size:13px;color:#444;white-space:nowrap;letter-spacing:0.049px;">Published on: <b style="font-weight:400;color:#32373c;-webkit-text-stroke:.25px #32373c">Nov 16, 2018 @ 17:20</b></span>
<span id="t52" style="position:absolute;left:1077.3px;top:268.7px;height:20px;line-height:20px;font-size:13px;color:#0073aa;white-space:nowrap;letter-spacing:-0.304px;"><a style="text-decoration:underline">Edit</a></span>
<div style="position:absolute;left:1067px;top:295px;width:278px;height:51px;box-sizing:border-box;background:#f5f5f5;border-top:1px solid #ddd"></div>
<span id="t53" style="position:absolute;left:1077.3px;top:311px;height:20px;line-height:20px;font-size:13px;color:#a00;white-space:nowrap;letter-spacing:-0.056px;"><a style="color:#a00;text-decoration:underline">Move to Trash</a></span>
<div style="position:absolute;left:1267px;top:306px;width:68px;height:30px;box-sizing:border-box;background:#0085ba;border:1px solid #0073aa;border-bottom-color:#006799;border-radius:3px;box-shadow:0 1px 0 #006799"></div>
<span id="t54" style="position:absolute;left:1280.3px;top:311.7px;height:20px;line-height:20px;font-size:13px;color:#fff;white-space:nowrap;letter-spacing:0.016px;">Update</span>
<div style="position:absolute;left:195px;top:670px;width:840px;height:1px;background:#ccc"></div>
<div style="position:absolute;left:202px;top:634px;width:107px;height:36px;box-sizing:border-box;background:#fff;border:1px solid #ddd;border-bottom:none"></div>
<span id="t55" style="position:absolute;left:213px;top:642px;height:20px;line-height:20px;font-size:14px;color:#000;white-space:nowrap;font-weight:700;letter-spacing:-0.079px;">Map settings</span>
<div style="position:absolute;left:316px;top:634px;width:62px;height:36px;box-sizing:border-box;background:#fff;border:1px solid #ddd;border-bottom:none"></div>
<span id="t56" style="position:absolute;left:327px;top:642px;height:20px;line-height:20px;font-size:14px;color:#000;white-space:nowrap;font-weight:700;letter-spacing:-0.387px;">Filters</span>
<div style="position:absolute;left:385px;top:634px;width:132px;height:36px;box-sizing:border-box;background:#fff;border:1px solid #ddd;border-bottom:none"></div>
<span id="t57" style="position:absolute;left:396px;top:642px;height:20px;line-height:20px;font-size:14px;color:#000;white-space:nowrap;font-weight:700;letter-spacing:-0.105px;">Markers settings</span>
<div style="position:absolute;left:524px;top:634px;width:142px;height:36px;box-sizing:border-box;background:#fff;border:1px solid #ddd;border-bottom:none"></div>
<span id="t58" style="position:absolute;left:535px;top:642px;height:20px;line-height:20px;font-size:14px;color:#000;white-space:nowrap;font-weight:700;letter-spacing:0.102px;">Tooltip &amp; Nav List</span>
<div style="position:absolute;left:674px;top:635px;width:104px;height:34px;background:#00a2ea"></div>
<span id="t59" style="position:absolute;left:684.3px;top:642px;height:20px;line-height:20px;font-size:14px;color:#fff;white-space:nowrap;font-weight:700;letter-spacing:-0.207px;">Map Layouts</span>
<div style="position:absolute;left:786px;top:634px;width:151px;height:36px;box-sizing:border-box;background:#fff;border:1px solid #ddd;border-bottom:none"></div>
<span id="t60" style="position:absolute;left:797px;top:642px;height:20px;line-height:20px;font-size:14px;color:#000;white-space:nowrap;font-weight:700;letter-spacing:-0.148px;">Tools &amp; Shortcodes</span>
<span id="t61" style="position:absolute;left:246.7px;top:710px;height:30px;line-height:30px;font-size:21px;color:#3a3f44;white-space:nowrap;letter-spacing:-0.161px;">Map Layout</span>
<div style="position:absolute;left:362px;top:716px;width:20px;height:20px;border-radius:10px;background:#3a94c6;color:#fff;font-weight:700;font-size:14px;line-height:20px;text-align:center">?</div>
<span id="t62" style="position:absolute;left:246.7px;top:769px;height:20px;line-height:20px;font-size:14px;color:#444;white-space:nowrap;letter-spacing:-0.118px;">Map Layout</span>
<div style="position:absolute;left:418px;top:763px;width:157px;height:32px;box-sizing:border-box;background:#fff;border:1px solid #ddd;box-shadow:inset 0 1px 2px rgba(0,0,0,.07)"></div>
<span id="t63" style="position:absolute;left:428px;top:769.5px;height:20px;line-height:20px;font-size:14px;color:#32373c;white-space:nowrap;letter-spacing:-0.010px;">Layout for projects</span>
<div style="position:absolute;left:561.500px;top:775px;width:0;height:0;border:3.500px solid transparent;border-top:6px solid #222;border-bottom-width:0"></div>
<div style="position:absolute;left:246px;top:1257px;width:16px;height:16px;box-sizing:border-box;background:#fff;border:1px solid #b4b9be;box-shadow:inset 0 1px 2px rgba(0,0,0,.1)"></div>
<svg style="position:absolute;left:246px;top:1257px" width="16" height="16" viewBox="0 0 16 16"><path d="M3.200 8.300l3 3.200 6-7.600" fill="none" stroke="#1e8cbe" stroke-width="2.200"/></svg>
<span id="t64" style="position:absolute;left:266.3px;top:1255.5px;height:20px;line-height:20px;font-size:14px;color:#444;white-space:nowrap;letter-spacing:0.211px;">Toggle editor</span>
<span id="t65" style="position:absolute;left:180.7px;top:1369.5px;height:20px;line-height:20px;font-size:13px;color:#555d66;white-space:nowrap;font-style:italic;letter-spacing:-0.224px;">Thank you for creating with <a style="text-decoration:underline">WordPress</a>.</span>
<span id="t66" style="position:absolute;left:871.7px;top:1369.5px;height:20px;line-height:20px;font-size:13px;color:#555d66;white-space:nowrap;letter-spacing:-0.109px;">You are using a development version (5.1-alpha-43678). Cool! Please <a style="text-decoration:underline">stay updated</a>.</span>
<svg style="position:absolute;left:198px;top:201px;font-family:'Liberation Sans', sans-serif" width="836" height="402" viewBox="198 201 836 402"><rect x="198" y="201" width="836" height="402" fill="#f1efe6"/><polygon points="198,201 447,201 445.7,222 437.6,254 431,286.6 424.8,318.8 420,338 418,357.5 412,383 402,409 386,431.5 368.3,440 359,454 345,470.5 341,471 336,479.7 328,481.3 318.4,481.3 313.6,487.7 315.2,495.8 321.6,500.6 329.7,499 324.8,510.3 329.7,518.3 323.2,524.8 318.4,521.5 308.7,523 295.9,529.6 292.6,536 295.9,540.9 289.4,547.3 286.2,552 276.5,553 265.3,557 260.4,563.4 263.6,569.9 268.5,573 266.9,581 262,589 260.4,597 249,599 234.7,599 228,602 198,602" fill="#aad3df"/><polygon points="509.3,201 510.9,202.4 517.3,212 521.3,225 520.5,244.3 523.7,255.6 530,257 538,252 548,254 552.7,260.4 555,267 549.5,271.7 544.7,279.7 536.6,287.8 527,291 517.3,287.8 507.6,284.6 504.4,289.4 504.2,306 510.6,322.2 507.4,336.7 512.2,351.2 505.8,360.9 517,367.3 520.3,380.2 528.3,380.2 526.7,373.7 525.9,362.5 534.8,354.4 549.3,346.4 563.7,336.7 576.6,328.7 584.7,320.6 592.7,312.5 597.6,306 602.4,299.7 613.7,294.8 618.8,292.6 610.7,279.7 610,263.6 610.7,244.3 620.4,231.4 631.7,223.4 622,220 614,223.4 604.3,227.4 594.6,225.8 581.7,223.4 570.5,217 567.2,210.5 575.3,201" fill="#aad3df"/><polyline points="326.5,524.8 339.3,533.6 355.4,544.9 371.6,555.4 389.3,561 405.8,561 429,557 452.7,552.4" fill="none" stroke="#aad3df" stroke-width="5" stroke-linejoin="round" stroke-linecap="round" /><polygon points="295.9,540.9 305.5,537.6 318.4,540.9 323.2,547.3 324.8,557.0 332.9,563.4 347.4,568.2 345.8,573.1 332.9,569.9 323.2,566.6 318.4,557.0 308.7,553.7 299.1,550.5 291.0,548.9" fill="#aad3df"/><polyline points="347.4,570.7 358.7,580.8 373.2,582.4 386.0,576.3 390.6,566.6" fill="none" stroke="#aad3df" stroke-width="4" stroke-linejoin="round" stroke-linecap="round" /><polyline points="390.6,566.6 405.4,565.0 416.0,566.6" fill="none" stroke="#aad3df" stroke-width="3" stroke-linejoin="round" stroke-linecap="round" /><polygon points="266.9,574.7 276.5,566.6 286.2,566.6 295.9,574.7 302.3,581.1 299.1,586.0 291.0,594.0 273.3,597.2 262.0,594.0 263.6,582.7" fill="#aad3df"/><polyline points="300.7,583.5 315.2,589.5 329.7,586.3 337.7,579.8 346.6,572.3" fill="none" stroke="#aad3df" stroke-width="5" stroke-linejoin="round" stroke-linecap="round" /><polyline points="315.2,590.0 324.8,594.3 341.0,590.0 355.4,593.2 358.7,598.8" fill="none" stroke="#aad3df" stroke-width="5" stroke-linejoin="round" stroke-linecap="round" /><polyline points="279.7,597.2 299.1,598.8 308.7,604.0" fill="none" stroke="#aad3df" stroke-width="6" stroke-linejoin="round" stroke-linecap="round" /><polygon points="318.4,484.5 329.7,483.7 341.0,489.3 350.6,495.8 345.8,499.0 334.5,494.2 324.8,492.5 320.0,489.3" fill="#aad3df"/><polyline points="341.0,490.9 357.1,503.0 373.2,510.6 389.3,509.0 416.0,507.4" fill="none" stroke="#aad3df" stroke-width="2.2" stroke-linejoin="round" stroke-linecap="round" /><polygon points="452.7,540.7 476.1,538.4 480.8,557.1 464.4,561.8 450.3,557.1" fill="#c9e3ea"/><polyline points="319.2,495.0 340.2,498.6 363.7,507.9 382.4,510.3 405.8,510.3 429.2,517.3 452.7,522.0 476.1,524.3 515.0,522.0" fill="none" stroke="#aad3df" stroke-width="1.4" stroke-linejoin="round" stroke-linecap="round" /><polyline points="400.0,520.4 435.1,527.4 470.3,529.7 505.4,525.1 540.5,527.4 575.7,525.1 592.1,508.7 622.5,506.3 657.7,511.0 692.8,513.3 720.0,518.0" fill="none" stroke="#aad3df" stroke-width="1.4" stroke-linejoin="round" stroke-linecap="round" /><polyline points="470.3,541.5 505.4,539.1 540.5,541.5 564.0,532.1 599.1,527.4 634.2,525.1 657.7,511.0" fill="none" stroke="#aad3df" stroke-width="1.1" stroke-linejoin="round" stroke-linecap="round" /><polyline points="540.5,480.5 564.0,485.2 587.4,489.9 610.8,492.3 634.2,489.9 657.7,485.2 681.1,480.5 704.5,485.2" fill="none" stroke="#aad3df" stroke-width="1.1" stroke-linejoin="round" stroke-linecap="round" /><polyline points="520,380 530,381 545,383 556,389 565,391 572,386 585,381 598,375" fill="none" stroke="#aad3df" stroke-width="3.5" stroke-linejoin="round" stroke-linecap="round" /><polyline points="598,375 608,372 616,367 628,355 641,343 649,337 656,322 655,307" fill="none" stroke="#aad3df" stroke-width="3" stroke-linejoin="round" stroke-linecap="round" /><polygon points="618.0,293.0 632.0,296.0 652.0,299.0 656.0,304.0 640.0,303.0 620.0,297.0" fill="#aad3df"/><polygon points="465.8,201.6 478.7,201.6 477.8,206.5 469.0,207.3" fill="#aad3df"/><polygon points="480.3,212.1 488.3,211.3 488.3,217.7 481.9,218.5" fill="#aad3df"/><polygon points="585.0,201.6 605.9,201.6 602.7,205.7 589.8,207.3 581.7,210.5 580.1,205.7" fill="#aad3df"/><polygon points="607.5,202.4 617.2,202.1 618.8,207.3 610.7,208.1" fill="#aad3df"/><polygon points="639.7,204.1 649.4,203.2 651.0,213.7 642.9,215.3" fill="#aad3df"/><polygon points="684.7,265.3 696.4,262.9 698.8,270.0 687.0,272.3" fill="#aad3df"/><polyline points="893.4,202.1 881.5,221.2 879.2,242.6 876.8,266.4 874.4,286.6 857.8,284.2 843.5,285.4 829.2,281.8 814.9,285.4 813.7,299.7 819.7,306.8 807.8,311.6 811.4,333.0 834.0,340.1 855.4,346.1 863.7,337.8 869.7,356.8 876.8,361.5 874.4,383.0 870.8,400.1" fill="none" stroke="#cf9bcb" stroke-width="2.2" stroke-linejoin="round" stroke-linecap="round" /><polyline points="872.0,395.0 876.8,404.5 860.1,416.4 848.2,423.6 838.7,439.0 819.7,441.4 819.7,452.1 809.0,456.9 809.0,464.0 826.8,473.5 834.0,480.7 831.6,490.2 826.8,499.7 814.9,506.8 807.8,502.1 786.4,511.6 769.7,518.7 753.1,514.0 757.8,525.9 745.9,521.1 736.4,516.3 724.5,516.3 715.0,509.2" fill="none" stroke="#cf9bcb" stroke-width="2.2" stroke-linejoin="round" stroke-linecap="round" /><polyline points="720.0,504.0 704.5,508.7 692.8,522.7 678.8,534.4 683.4,550.8 676.4,564.9 692.8,576.6 702.2,590.6 704.5,604.9" fill="none" stroke="#cf9bcb" stroke-width="2.2" stroke-linejoin="round" stroke-linecap="round" /><polyline points="381.3,201.3 383.5,212.5 373.2,270.5 366.8,301.1 356.5,331.7 355.5,347.8 341.0,383.2 308.8,420.3 279.8,439.6 260.5,479.9 238.0,502.4 212.2,531.4 198.7,550.7" fill="none" stroke="#b08fcf" stroke-width="1.6" stroke-linejoin="round" stroke-linecap="round" /><polyline points="231.5,201.3 308.8,254.4 366.8,301.1 418.3,338.1" fill="none" stroke="#8d9ee0" stroke-width="0.8" stroke-linejoin="round" stroke-linecap="round" stroke-dasharray="4 3"/><polyline points="198.7,376.8 276.6,439.6 334.6,479.9" fill="none" stroke="#8d9ee0" stroke-width="0.8" stroke-linejoin="round" stroke-linecap="round" stroke-dasharray="4 3"/><polyline points="198.7,494.3 260.5,483.1 312.0,473.4" fill="none" stroke="#8d9ee0" stroke-width="0.8" stroke-linejoin="round" stroke-linecap="round" stroke-dasharray="4 3"/><polyline points="917.2,202.1 913.7,214.0 916.0,225.9 911.3,242.6 914.9,254.5 913.7,266.4 917.2,278.3 914.9,294.9 918.4,309.2 916.0,328.2 919.6,342.5 917.2,361.5 922.0,375.8 926.8,390.1 924.4,400.1" fill="none" stroke="#a6cfe3" stroke-width="1" stroke-linejoin="round" stroke-linecap="round" /><polyline points="918.4,264.0 929.1,268.8 943.4,275.9 952.9,272.3 967.2,273.5 976.7,266.4 995.8,264.0 1014.8,268.8 1033.8,266.4" fill="none" stroke="#a6cfe3" stroke-width="0.9" stroke-linejoin="round" stroke-linecap="round" /><polygon points="943.4,202.1 962.4,202.1 952.9,225.9 941.0,242.6 929.1,261.6 920.8,261.6 924.4,237.8 933.9,218.8" fill="#f3d9d3" opacity=".8"/><path d="M469.4 262.9Q479.8 265.2 486.9 259.3M469.4 262.9Q469.6 254.0 473.9 240.1M469.4 262.9Q481.3 271.3 484.2 277.4M469.4 262.9Q467.2 249.6 456.5 244.8M469.4 262.9Q455.2 257.2 438.0 260.5M741.6 231.8Q751.8 223.5 762.6 224.4M741.6 231.8Q742.9 226.1 743.4 211.8M741.6 231.8Q732.9 244.1 724.9 247.7M645.9 348.2Q634.1 339.6 629.0 337.6M645.9 348.2Q655.5 337.0 655.5 327.6M645.9 348.2Q654.4 351.5 666.5 346.2M553.2 531.3Q553.3 545.1 560.9 549.1M553.2 531.3Q539.4 524.3 532.0 517.0M553.2 531.3Q566.6 531.4 578.2 524.3M722.0 579.2Q731.3 589.9 738.4 597.3M722.0 579.2Q711.2 582.2 704.5 591.5M680.1 360.5Q685.9 371.9 682.5 384.1M680.1 360.5Q670.2 373.8 661.0 377.9M680.1 360.5Q686.7 358.2 697.6 360.8M680.1 360.5Q673.8 357.3 666.5 346.2M1012.2 221.5Q1005.5 225.1 999.2 232.9M1012.2 221.5Q1023.7 209.7 1030.6 205.1M914.2 318.0Q912.5 325.7 909.5 334.6M456.7 527.0Q463.8 528.2 476.7 520.9M456.7 527.0Q447.4 519.8 435.4 522.5M731.6 350.8Q733.6 333.2 737.1 323.6M731.6 350.8Q741.3 355.4 752.8 353.3M731.6 350.8Q734.1 364.3 737.1 379.2M655.7 227.9Q668.6 217.3 672.4 208.0M655.7 227.9Q657.3 217.8 652.1 203.9M655.7 227.9Q642.5 231.8 638.4 233.1M766.1 372.8Q754.5 358.7 752.8 353.3M766.1 372.8Q769.6 365.4 778.0 359.3M766.1 372.8Q763.8 382.1 753.8 391.0M461.4 435.5Q457.6 444.6 454.1 460.1M461.4 435.5Q475.6 439.0 482.5 439.2M461.4 435.5Q461.5 426.4 453.8 411.8M461.4 435.5Q455.0 437.4 444.6 432.0M860.9 480.5Q866.5 466.7 872.6 462.4M403.1 431.0Q414.9 426.3 417.3 419.9M403.1 431.0Q399.9 441.8 395.0 452.9M403.1 431.0Q414.4 436.3 422.5 437.6M637.0 550.4Q649.9 548.2 657.1 553.7M637.0 550.4Q641.4 559.2 638.1 573.6M637.0 550.4Q635.9 541.8 634.7 529.8M806.9 317.3Q799.7 314.6 792.1 308.6M806.9 317.3Q816.6 321.1 820.8 332.8M806.9 317.3Q817.1 306.7 820.2 302.6M547.9 503.6Q560.0 501.5 563.8 490.7M547.9 503.6Q542.6 512.3 532.0 517.0M547.9 503.6Q548.6 495.1 539.4 484.9M836.1 430.5Q834.9 438.4 838.1 447.9M836.1 430.5Q832.1 440.9 819.6 447.5M836.1 430.5Q828.1 425.0 828.5 414.6M928.4 327.6Q937.2 319.2 950.1 318.1M928.4 327.6Q923.2 335.9 909.5 334.6M778.5 439.0Q785.6 446.1 788.0 455.5M778.5 439.0Q777.5 426.0 778.3 420.9M682.5 384.1Q675.2 381.3 661.0 377.9M682.5 384.1Q670.7 390.0 663.1 398.1M682.5 384.1Q695.5 382.5 701.5 388.1M898.9 578.0Q897.9 583.3 906.3 597.3M594.4 466.7Q598.7 482.4 593.8 489.5M594.4 466.7Q589.0 473.5 577.7 474.0M594.4 466.7Q602.1 452.5 602.2 447.8M883.8 316.0Q876.7 313.9 863.7 308.1M883.8 316.0Q875.9 322.4 871.4 338.3M521.0 468.5Q519.7 461.6 522.1 444.8M521.0 468.5Q517.7 473.6 508.8 480.9M521.0 468.5Q529.1 475.3 539.4 484.9M525.3 549.0Q507.6 554.1 498.5 554.0M525.3 549.0Q520.7 539.6 517.2 533.4M657.1 553.7Q656.2 539.6 660.2 534.0M881.6 546.0Q876.5 559.0 869.2 565.4M431.6 367.9Q433.7 373.5 443.8 385.4M431.6 367.9Q433.4 359.9 432.8 342.5M431.6 367.9Q430.8 376.0 423.3 388.2M431.6 367.9Q438.2 371.0 452.2 365.4M498.5 554.0Q500.3 539.3 496.7 529.2M498.5 554.0Q489.8 545.4 481.7 545.1M498.5 554.0Q498.4 564.8 492.1 579.3M690.2 307.3Q689.2 315.7 681.1 332.6M690.2 307.3Q687.4 293.8 690.1 284.1M690.2 307.3Q681.5 297.6 674.4 295.0M507.2 427.8Q500.7 428.2 491.5 420.8M507.2 427.8Q515.7 420.5 528.9 421.4M507.2 427.8Q515.1 433.7 522.1 444.8M993.0 477.1Q987.2 483.0 986.7 496.9M628.9 448.2Q637.3 440.0 648.2 436.6M628.9 448.2Q632.4 453.4 641.7 461.0M628.9 448.2Q611.5 450.9 602.2 447.8M762.6 224.4Q753.7 220.0 743.4 211.8M762.6 224.4Q768.5 211.5 766.1 203.4M927.6 519.8Q931.3 515.8 926.3 502.2M927.6 519.8Q938.3 531.2 942.7 535.1M482.9 223.9Q469.1 218.1 455.8 211.6M482.9 223.9Q484.7 217.1 490.4 203.4M482.9 223.9Q476.3 229.1 473.9 240.1M482.9 223.9Q491.4 224.7 509.2 220.4M710.9 262.0Q715.1 273.3 723.2 275.1M710.9 262.0Q698.2 262.8 692.5 260.4M710.9 262.0Q721.8 259.0 724.9 247.7M503.0 251.8Q492.9 253.7 486.9 259.3M503.0 251.8Q514.1 243.9 517.6 242.8M906.3 597.3Q912.4 588.4 919.9 574.7M587.7 395.1Q579.2 404.7 576.4 414.7M587.7 395.1Q584.7 382.9 571.7 377.0M587.7 395.1Q594.7 398.0 610.2 398.0M485.1 308.1Q481.2 299.4 474.3 291.5M485.1 308.1Q476.5 316.6 459.6 324.1M485.1 308.1Q480.3 316.5 482.6 330.5M889.6 267.1Q883.9 272.8 887.4 286.8M639.5 261.2Q632.1 271.3 616.1 273.6M639.5 261.2Q650.2 253.1 656.2 252.7M639.5 261.2Q631.0 256.6 626.5 246.9M639.4 591.5Q634.9 579.4 638.1 573.6M639.4 591.5Q631.8 591.4 621.3 590.1M639.4 591.5Q646.7 591.6 658.8 594.0M339.0 509.5Q333.7 516.9 321.6 531.1M339.0 509.5Q331.5 502.9 328.5 487.3M339.0 509.5Q352.4 507.6 364.2 501.9M339.0 509.5Q346.8 523.5 354.8 533.2M643.1 512.3Q653.5 512.5 662.1 514.4M643.1 512.3Q651.4 499.4 650.1 487.8M643.1 512.3Q635.2 517.9 634.7 529.8M643.1 512.3Q633.4 509.4 627.0 499.0M474.3 291.5Q466.2 295.6 453.1 295.4M474.3 291.5Q483.4 280.5 484.2 277.4M880.9 496.7Q867.9 500.7 863.7 500.1M415.6 477.9Q413.3 471.7 420.7 457.9M415.6 477.9Q411.6 488.3 405.8 497.7M415.6 477.9Q425.2 491.6 425.6 495.8M995.8 380.5Q985.3 374.8 982.3 366.6M979.6 595.3Q968.2 595.4 954.0 598.6M979.6 595.3Q974.4 585.3 960.8 577.9M979.6 595.3Q998.5 597.7 1010.9 598.0M994.6 347.8Q996.7 352.4 1008.4 360.1M994.6 347.8Q982.9 345.9 973.9 350.8M719.2 560.4Q719.2 554.2 712.8 540.4M899.2 393.4Q895.1 380.9 881.3 374.6M899.2 393.4Q903.9 399.7 917.4 407.0M743.3 520.5Q752.0 504.8 750.9 497.6M824.1 392.8Q832.0 396.8 842.5 404.6M824.1 392.8Q814.6 392.4 809.3 382.0M824.1 392.8Q829.4 400.5 828.5 414.6M476.7 520.9Q491.0 529.3 496.7 529.2M476.7 520.9Q479.5 508.4 479.1 500.6M1008.4 360.1Q1014.8 354.5 1029.6 351.5M534.0 578.9Q540.4 576.2 550.0 567.3M534.0 578.9Q522.6 584.5 510.6 582.6M534.0 578.9Q527.2 587.0 529.5 597.0M803.0 270.5Q815.1 268.7 829.1 266.0M803.0 270.5Q800.9 281.2 797.8 290.9M803.0 270.5Q811.4 264.7 810.7 254.5M321.6 531.1Q327.7 547.5 327.6 554.0M321.6 531.1Q307.5 532.5 302.6 530.9M1015.6 463.9Q1009.2 466.3 997.8 458.9M491.5 420.8Q489.0 433.0 482.5 439.2M491.5 420.8Q489.4 408.4 489.7 401.5M638.1 573.6Q628.1 568.3 617.8 568.2M560.9 549.1Q559.7 553.3 550.0 567.3M560.9 549.1Q565.9 545.2 579.6 545.8M887.4 286.8Q891.9 289.3 896.3 301.6M309.1 564.3Q316.8 563.2 327.6 554.0M309.1 564.3Q303.5 564.0 288.8 571.8M309.1 564.3Q304.8 572.2 301.2 586.6M309.1 564.3Q305.0 547.3 302.6 530.9M309.1 564.3Q297.0 550.3 293.4 545.3M494.3 384.9Q492.3 373.3 481.3 370.0M494.3 384.9Q496.6 396.6 508.5 403.3M494.3 384.9Q502.0 378.3 512.0 369.3M494.3 384.9Q488.9 392.5 489.7 401.5M685.3 562.0Q671.1 569.2 665.5 577.5M550.0 567.3Q555.4 575.0 562.4 592.5M617.4 414.1Q623.2 396.2 629.8 387.5M617.4 414.1Q630.7 416.8 635.9 412.4M617.4 414.1Q613.9 410.1 610.2 398.0M635.6 210.4Q639.4 204.8 652.1 203.9M635.6 210.4Q623.2 212.7 620.5 220.2M803.4 423.9Q800.3 418.1 802.0 405.1M803.4 423.9Q811.4 423.0 828.5 414.6M803.4 423.9Q789.1 422.9 778.3 420.9M471.2 408.8Q467.7 395.6 470.0 389.1M471.2 408.8Q457.8 406.1 453.8 411.8M662.1 514.4Q670.0 507.1 677.5 500.4M662.1 514.4Q661.9 522.6 660.2 534.0M842.5 404.6Q848.2 407.8 861.7 420.6M842.5 404.6Q849.7 397.6 858.7 385.5M842.5 404.6Q838.4 411.4 828.5 414.6M709.6 403.7Q701.1 412.8 687.2 413.1M709.6 403.7Q710.0 415.7 711.5 426.7M709.6 403.7Q715.5 400.4 728.8 394.5M709.6 403.7Q703.8 391.8 701.5 388.1M626.1 478.0Q641.5 486.7 650.1 487.8M626.1 478.0Q634.4 465.9 641.7 461.0M626.1 478.0Q623.6 491.0 627.0 499.0M576.4 414.7Q566.6 403.0 557.7 398.9M576.4 414.7Q581.3 421.7 590.3 426.1M576.4 414.7Q579.3 420.0 573.9 434.3M597.7 576.8Q604.5 563.1 604.0 556.7M597.7 576.8Q584.8 578.7 578.2 574.1M597.7 576.8Q596.9 582.5 601.9 593.9M781.7 551.0Q774.6 559.3 772.7 570.0M983.9 306.1Q1000.6 303.0 1012.3 306.3M665.5 577.5Q675.6 581.9 684.8 584.0M665.5 577.5Q659.0 584.6 658.8 594.0M852.2 559.1Q863.1 566.1 869.2 565.4M852.2 559.1Q845.9 554.6 836.2 550.0M328.5 487.3Q341.4 481.7 350.3 481.3M749.3 259.8Q745.9 271.4 742.2 283.8M749.3 259.8Q759.2 266.0 770.7 264.5M749.3 259.8Q757.3 258.0 764.9 248.4M934.5 587.1Q930.9 579.9 919.9 574.7M382.7 581.1Q392.5 569.0 392.5 559.4M382.7 581.1Q376.3 569.6 372.9 562.7M382.7 581.1Q369.4 590.6 361.2 592.7M382.7 581.1Q394.3 588.8 398.5 594.8M531.3 396.4Q536.3 401.7 544.4 411.1M531.3 396.4Q518.1 400.4 508.5 403.3M531.3 396.4Q532.3 393.9 540.4 381.5M629.0 337.6Q615.7 351.0 611.0 354.9M629.0 337.6Q631.4 330.7 640.4 317.5M800.8 210.7Q812.1 213.7 820.9 215.7M800.8 210.7Q797.5 223.7 791.4 227.7M800.8 210.7Q795.3 209.0 783.2 208.9M661.0 377.9Q657.5 388.7 663.1 398.1M855.9 588.8Q845.5 590.3 834.1 591.2M674.7 481.1Q685.6 478.0 687.4 466.5M674.7 481.1Q677.4 488.7 677.5 500.4M674.7 481.1Q665.0 489.4 650.1 487.8M577.5 337.6Q586.4 330.5 589.5 319.9M577.5 337.6Q580.8 344.9 574.3 356.1M577.5 337.6Q593.0 342.3 601.8 336.9M638.4 297.7Q631.5 307.0 619.1 310.9M638.4 297.7Q626.4 296.5 620.0 293.2M638.4 297.7Q634.5 307.2 640.4 317.5M459.6 324.1Q454.8 330.2 457.5 344.6M459.6 324.1Q450.1 324.7 441.0 317.7M459.6 324.1Q470.2 325.9 482.6 330.5M831.9 318.1Q828.9 322.8 820.8 332.8M831.9 318.1Q843.1 329.5 846.4 337.4M831.9 318.1Q827.1 307.6 820.2 302.6M977.6 245.2Q984.9 235.8 999.2 232.9M977.6 245.2Q973.6 244.6 961.0 253.5M881.3 374.6Q873.8 379.3 858.7 385.5M611.8 534.3Q603.8 529.5 595.0 528.2M611.8 534.3Q628.2 536.7 634.7 529.8M611.8 534.3Q604.1 545.6 604.0 556.7M611.8 534.3Q612.0 529.8 621.7 515.4M772.2 593.0Q767.3 590.0 755.3 589.3M788.0 455.5Q788.5 471.2 790.5 477.3M788.0 455.5Q797.1 458.4 807.6 460.6M434.6 299.2Q444.2 301.5 453.1 295.4M434.6 299.2Q439.3 305.0 441.0 317.7M434.6 299.2Q444.1 291.9 447.4 277.2M443.8 385.4Q433.7 387.1 423.3 388.2M443.8 385.4Q443.3 374.4 452.2 365.4M419.0 584.8Q430.0 581.1 437.6 574.4M419.0 584.8Q428.7 585.2 437.0 595.0M419.0 584.8Q417.3 576.6 420.4 563.8M419.0 584.8Q406.2 586.9 398.5 594.8M1009.2 420.2Q1009.2 410.0 1002.0 403.0M457.5 344.6Q444.2 345.9 432.8 342.5M457.5 344.6Q452.6 351.6 452.2 365.4M453.1 295.4Q444.9 307.4 441.0 317.7M453.1 295.4Q452.6 289.6 447.4 277.2M687.2 413.1Q683.6 419.1 687.5 431.1M687.2 413.1Q678.7 415.1 660.9 417.2M824.4 464.0Q817.7 468.7 812.1 481.0M869.5 531.1Q865.3 527.9 857.9 516.0M768.2 478.3Q775.8 491.8 779.9 495.5M768.2 478.3Q780.4 479.5 790.5 477.3M768.2 478.3Q758.9 464.1 759.5 457.4M664.7 452.2Q680.7 459.8 687.4 466.5M664.7 452.2Q655.8 446.9 648.2 436.6M664.7 452.2Q652.2 452.9 641.7 461.0M721.0 473.2Q730.0 468.7 730.0 455.5M721.0 473.2Q721.9 460.2 713.1 451.8M721.0 473.2Q718.9 479.3 710.8 490.5M607.1 204.3Q607.9 209.4 601.6 224.2M607.1 204.3Q600.3 208.1 585.5 208.4M607.1 204.3Q613.4 210.7 620.5 220.2M863.7 500.1Q878.2 506.6 884.4 515.3M863.7 500.1Q863.1 507.0 857.9 516.0M815.5 590.4Q821.2 594.1 834.1 591.2M815.5 590.4Q804.8 595.1 795.6 595.9M611.0 354.9Q597.9 357.7 591.6 361.9M611.0 354.9Q607.8 346.7 601.8 336.9M611.0 354.9Q612.4 361.1 607.1 372.5M672.4 208.0Q686.2 207.0 700.1 207.2M672.4 208.0Q657.4 208.6 652.1 203.9M762.2 318.5Q751.6 310.0 745.8 302.3M762.2 318.5Q764.2 324.4 764.9 337.1M762.2 318.5Q776.4 321.6 782.6 331.6M762.2 318.5Q769.2 312.9 771.4 300.4M629.8 387.5Q627.0 383.8 628.2 370.2M629.8 387.5Q630.0 396.9 635.9 412.4M629.8 387.5Q617.8 388.8 610.2 398.0M943.5 282.1Q932.7 270.4 925.4 260.8M882.4 405.0Q890.3 411.0 898.6 411.7M392.5 559.4Q379.5 561.1 372.9 562.7M392.5 559.4Q392.7 577.7 398.5 594.8M392.5 559.4Q397.7 549.7 400.0 543.1M898.1 250.7Q892.1 249.5 880.4 251.8M898.1 250.7Q905.6 255.2 907.3 265.4M970.8 486.1Q983.4 489.0 986.7 496.9M437.6 574.4Q448.0 578.1 455.9 581.4M437.6 574.4Q433.8 588.7 437.0 595.0M437.6 574.4Q439.9 568.5 449.1 554.2M437.6 574.4Q432.4 573.7 420.4 563.8M510.6 582.6Q516.3 593.2 529.5 597.0M510.6 582.6Q498.1 582.9 492.1 579.3M510.6 582.6Q505.1 587.7 493.8 597.5M809.3 382.0Q816.3 374.0 823.7 366.9M809.3 382.0Q801.1 383.9 790.5 380.4M809.3 382.0Q810.4 397.6 802.0 405.1M447.7 496.4Q454.0 488.5 467.1 485.3M447.7 496.4Q448.9 488.7 441.3 475.8M447.7 496.4Q435.8 494.4 425.6 495.8M1012.3 306.3Q1005.8 317.6 1006.9 326.8M372.9 562.7Q372.3 551.9 373.9 536.2M372.9 562.7Q366.1 556.0 353.1 556.5M823.7 366.9Q813.9 365.0 809.4 355.5M823.7 366.9Q829.2 372.3 841.3 376.6M544.4 411.1Q546.8 402.0 557.7 398.9M544.4 411.1Q539.2 417.0 528.9 421.4M544.4 411.1Q544.3 427.4 549.5 434.3M926.2 211.7Q933.3 213.7 946.3 215.0M945.2 390.9Q937.9 382.3 938.9 370.1M737.1 323.6Q732.5 311.0 723.8 302.3M737.1 323.6Q742.7 310.5 745.8 302.3M737.1 323.6Q725.1 319.4 715.2 319.0M700.1 207.2Q709.3 221.1 716.4 229.0M997.8 458.9Q996.9 448.7 993.6 439.1M455.8 211.6Q449.0 219.0 447.1 229.2M455.8 211.6Q477.7 206.6 490.4 203.4M481.3 370.0Q472.6 379.8 470.0 389.1M481.3 370.0Q487.9 358.7 493.6 351.8M767.9 281.6Q769.5 275.5 770.7 264.5M767.9 281.6Q771.1 294.0 771.4 300.4M384.2 504.9Q377.2 504.8 364.2 501.9M384.2 504.9Q397.8 496.8 405.8 497.7M384.2 504.9Q386.4 489.1 393.3 482.6M975.1 333.7Q976.3 341.4 973.9 350.8M354.3 574.5Q359.6 586.7 361.2 592.7M354.3 574.5Q341.7 574.5 334.1 574.8M354.3 574.5Q352.1 566.5 353.1 556.5M820.9 215.7Q824.8 218.4 837.9 219.1M752.8 353.3Q763.7 347.0 764.9 337.1M432.8 342.5Q440.4 327.5 441.0 317.7M496.7 529.2Q497.8 513.6 499.7 506.6M496.7 529.2Q491.0 537.4 481.7 545.1M496.7 529.2Q502.8 528.8 517.2 533.4M946.3 215.0Q948.8 223.7 957.1 228.5M946.3 215.0Q957.9 206.8 966.1 207.3M837.9 219.1Q845.7 224.5 850.8 234.4M837.9 219.1Q836.0 227.8 834.5 243.2M965.5 305.0Q968.3 294.5 972.2 275.6M821.7 559.7Q826.4 553.8 822.3 539.3M962.5 454.7Q965.3 445.5 966.5 434.6M962.5 454.7Q959.3 465.5 953.6 469.5M996.0 581.7Q998.9 593.0 1010.9 598.0M996.0 581.7Q988.7 570.1 980.8 559.3M557.7 398.9Q551.9 389.7 540.4 381.5M972.2 275.6Q965.8 265.3 961.0 253.5M705.2 333.1Q690.1 336.3 681.1 332.6M705.2 333.1Q701.8 344.8 697.6 360.8M705.2 333.1Q708.3 329.9 715.2 319.0M850.8 234.4Q839.4 240.8 834.5 243.2M850.8 234.4Q853.6 227.2 866.0 217.1M364.2 501.9Q360.7 491.9 350.3 481.3M471.0 592.2Q468.5 585.7 455.9 581.4M471.0 592.2Q481.4 591.0 493.8 597.5M790.5 380.4Q782.2 390.0 782.0 400.8M790.5 380.4Q786.0 373.4 778.0 359.3M327.6 554.0Q334.5 562.4 334.1 574.8M681.1 332.6Q673.0 327.8 655.5 327.6M681.1 332.6Q671.1 338.4 666.5 346.2M595.0 528.2Q588.4 522.2 578.2 524.3M595.0 528.2Q582.5 539.5 579.6 545.8M595.0 528.2Q601.8 518.4 605.1 507.9M920.6 381.3Q931.7 375.7 938.9 370.1M920.6 381.3Q923.0 389.7 917.4 407.0M416.3 511.8Q412.9 515.1 408.4 527.4M416.3 511.8Q406.3 507.0 405.8 497.7M416.3 511.8Q417.7 503.7 425.6 495.8M696.0 449.1Q696.2 454.7 687.4 466.5M696.0 449.1Q702.9 454.3 713.1 451.8M696.0 449.1Q696.0 438.1 687.5 431.1M742.2 283.8Q740.7 296.0 745.8 302.3M742.2 283.8Q734.5 280.5 723.2 275.1M528.9 421.4Q537.2 432.3 549.5 434.3M455.9 581.4Q457.6 571.7 464.6 561.6M455.9 581.4Q444.7 591.4 437.0 595.0M502.7 281.3Q493.9 279.2 484.2 277.4M502.7 281.3Q511.0 275.9 522.2 269.7M508.5 403.3Q497.8 402.4 489.7 401.5M601.6 224.2Q592.9 217.7 585.5 208.4M853.8 291.2Q853.0 281.5 855.1 265.0M803.1 559.2Q798.6 569.8 790.9 578.3M549.5 434.3Q558.1 443.1 566.2 451.0M549.5 434.3Q543.9 439.8 541.5 450.4M554.2 464.6Q561.8 455.4 566.2 451.0M554.2 464.6Q547.4 461.7 541.5 450.4M554.2 464.6Q543.0 472.0 539.4 484.9M571.7 377.0Q574.3 368.8 574.3 356.1M571.7 377.0Q564.7 377.0 554.3 370.3M835.3 512.7Q845.8 509.4 857.9 516.0M829.1 266.0Q826.4 276.0 830.1 284.4M829.1 266.0Q831.4 257.7 834.5 243.2M829.1 266.0Q841.8 269.3 855.1 265.0M829.1 266.0Q819.0 257.0 810.7 254.5M617.8 568.2Q610.6 560.5 604.0 556.7M334.1 574.8Q332.5 580.5 328.5 591.5M926.3 423.4Q925.4 436.0 926.4 445.5M926.3 423.4Q921.8 419.0 917.4 407.0M287.0 597.2Q288.0 583.8 288.8 571.8M287.0 597.2Q290.7 595.4 301.2 586.6M287.0 597.2Q266.2 601.4 247.5 599.1M287.0 597.2Q273.2 594.9 265.8 592.0M499.7 506.6Q493.0 498.6 479.1 500.6M499.7 506.6Q509.3 508.2 517.3 501.3M712.6 374.6Q725.0 374.7 737.1 379.2M712.6 374.6Q705.4 366.0 697.6 360.8M712.6 374.6Q705.9 376.9 701.5 388.1M743.4 211.8Q758.6 212.1 766.1 203.4M690.1 284.1Q695.2 273.8 692.5 260.4M690.1 284.1Q682.1 293.7 674.4 295.0M737.1 379.2Q734.5 386.3 728.8 394.5M737.1 379.2Q749.7 388.5 753.8 391.0M366.0 444.4Q381.9 449.5 395.0 452.9M479.1 500.6Q480.9 492.6 488.5 482.7M479.1 500.6Q468.6 495.7 467.1 485.3M792.1 308.6Q799.7 301.3 797.8 290.9M792.1 308.6Q784.0 300.7 771.4 300.4M420.7 457.9Q409.4 453.2 395.0 452.9M420.7 457.9Q426.0 449.9 422.5 437.6M820.8 332.8Q811.7 344.5 809.4 355.5M563.8 490.7Q565.8 480.6 577.7 474.0M563.8 490.7Q555.4 490.1 539.4 484.9M264.7 564.6Q276.5 569.0 288.8 571.8M288.8 571.8Q296.9 582.1 301.2 586.6M288.8 571.8Q294.9 554.7 293.4 545.3M486.9 259.3Q488.2 267.2 484.2 277.4M779.9 495.5Q777.9 500.7 780.0 515.4M779.9 495.5Q782.7 487.6 790.5 477.3M779.9 495.5Q783.2 498.2 796.5 500.1M506.2 330.4Q497.1 344.0 493.6 351.8M506.2 330.4Q499.1 330.8 482.6 330.5M908.3 448.5Q902.9 438.6 898.4 429.4M908.3 448.5Q916.5 447.0 926.4 445.5M488.5 482.7Q477.9 481.4 467.1 485.3M488.5 482.7Q480.5 473.1 471.6 465.9M488.5 482.7Q495.5 486.1 508.8 480.9M782.0 400.8Q771.0 401.5 762.8 411.5M782.0 400.8Q796.0 403.5 802.0 405.1M782.0 400.8Q784.1 411.9 778.3 420.9M780.0 515.4Q792.6 505.6 796.5 500.1M533.9 359.7Q540.2 354.9 553.5 351.7M533.9 359.7Q541.0 371.5 540.4 381.5M940.8 237.2Q952.2 231.3 957.1 228.5M750.9 497.6Q737.9 493.4 727.4 497.4M1011.3 492.3Q1020.3 494.4 1030.2 494.4M532.0 517.0Q521.3 507.5 517.3 501.3M532.0 517.0Q527.9 528.8 517.2 533.4M677.5 500.4Q660.3 494.1 650.1 487.8M723.8 302.3Q736.6 305.1 745.8 302.3M723.8 302.3Q721.3 305.9 715.2 319.0M352.3 462.8Q364.1 467.0 374.8 474.7M352.3 462.8Q351.4 475.4 350.3 481.3M847.4 357.3Q842.7 346.0 846.4 337.4M847.4 357.3Q849.2 365.2 841.3 376.6M650.1 487.8Q635.2 496.3 627.0 499.0M374.8 474.7Q360.1 479.3 350.3 481.3M374.8 474.7Q386.9 465.8 395.0 452.9M374.8 474.7Q383.5 479.8 393.3 482.6M526.1 287.2Q528.0 274.4 522.2 269.7M526.1 287.2Q537.6 285.6 541.9 278.1M590.3 426.1Q599.5 434.0 602.2 447.8M590.3 426.1Q579.5 428.4 573.9 434.3M493.8 456.6Q490.8 447.2 482.5 439.2M493.8 456.6Q478.1 457.7 471.6 465.9M589.5 319.9Q596.9 323.4 601.8 336.9M656.2 252.7Q665.0 258.5 675.4 257.8M656.2 252.7Q661.1 266.9 662.0 275.2M893.7 343.8Q886.9 341.8 871.4 338.3M893.7 343.8Q896.8 350.5 903.1 359.2M893.7 343.8Q902.4 340.5 909.5 334.6M706.2 513.2Q709.0 501.0 710.8 490.5M706.2 513.2Q720.9 509.6 727.4 497.4M661.8 308.0Q652.1 314.8 640.4 317.5M661.8 308.0Q657.7 314.9 655.5 327.6M661.8 308.0Q664.2 298.6 674.4 295.0M999.2 232.9Q1011.1 223.3 1030.6 205.1M999.2 232.9Q1015.0 237.6 1031.9 242.6M730.0 455.5Q725.7 452.7 713.1 451.8M730.0 455.5Q742.1 465.7 744.6 471.4M730.0 455.5Q739.7 449.2 741.7 443.2M619.1 310.9Q620.5 306.9 620.0 293.2M619.1 310.9Q631.6 318.5 640.4 317.5M619.1 310.9Q609.4 302.8 602.3 303.3M621.3 590.1Q610.1 591.9 601.9 593.9M1016.0 391.8Q1020.8 391.5 1031.7 384.3M1016.0 391.8Q1024.5 405.3 1029.5 415.0M301.2 586.6Q311.5 590.3 328.5 591.5M807.1 236.5Q804.1 229.8 791.4 227.7M807.1 236.5Q812.3 250.2 810.7 254.5M880.0 234.6Q874.0 224.5 866.0 217.1M880.0 234.6Q884.4 247.0 880.4 251.8M986.2 514.5Q979.5 507.5 965.7 510.1M986.2 514.5Q988.8 508.4 986.7 496.9M858.7 385.5Q850.0 383.3 841.3 376.6M896.6 221.7Q886.1 208.1 880.4 203.9M921.1 555.8Q913.9 552.5 900.5 546.2M464.6 561.6Q453.0 559.4 449.1 554.2M1030.4 570.3Q1022.9 562.8 1016.2 557.3M675.4 257.8Q683.2 247.1 683.9 237.9M675.4 257.8Q671.9 267.4 662.0 275.2M675.4 257.8Q681.5 262.5 692.5 260.4M354.8 533.2Q359.9 536.4 373.9 536.2M354.8 533.2Q357.9 549.4 353.1 556.5M467.1 485.3Q468.5 472.2 471.6 465.9M517.3 501.3Q509.0 494.0 508.8 480.9M408.4 527.4Q417.7 533.8 427.8 538.4M408.4 527.4Q404.3 536.8 400.0 543.1M784.6 243.8Q777.8 249.2 764.9 248.4M784.6 243.8Q784.2 231.4 791.4 227.7M537.5 257.4Q529.9 267.9 522.2 269.7M537.5 257.4Q540.3 265.2 541.9 278.1M562.4 592.5Q573.0 595.5 582.2 594.6M562.4 592.5Q573.7 578.7 578.2 574.1M869.2 565.4Q860.0 573.5 844.0 574.4M1006.8 511.3Q1019.2 510.8 1029.7 517.3M979.5 454.4Q990.3 443.0 993.6 439.1M454.1 460.1Q448.5 463.2 441.3 475.8M454.1 460.1Q464.0 463.4 471.6 465.9M423.3 388.2Q432.1 396.8 431.1 408.0M423.3 388.2Q418.9 392.1 410.4 403.4M663.1 398.1Q660.7 407.1 660.9 417.2M814.7 498.1Q804.6 494.9 796.5 500.1M814.7 498.1Q813.8 491.1 812.1 481.0M961.0 253.5Q955.6 261.1 944.7 260.6M854.8 540.3Q849.7 548.4 836.2 550.0M683.9 237.9Q689.1 239.9 702.4 242.6M683.9 237.9Q691.7 244.8 692.5 260.4M492.1 579.3Q488.8 585.9 493.8 597.5M762.8 411.5Q761.5 425.8 755.6 432.4M762.8 411.5Q763.3 405.9 753.8 391.0M762.8 411.5Q775.3 414.7 778.3 420.9M566.2 451.0Q574.8 441.9 573.9 434.3M626.5 246.9Q625.2 238.5 620.5 220.2M626.5 246.9Q636.4 239.6 638.4 233.1M938.9 370.1Q949.7 357.9 953.6 354.9M938.9 370.1Q941.1 358.0 937.2 349.0M634.7 529.8Q623.6 526.4 621.7 515.4M795.3 343.5Q788.3 351.3 778.0 359.3M795.3 343.5Q805.3 347.6 809.4 355.5M795.3 343.5Q790.5 339.6 782.6 331.6M574.3 356.1Q587.8 360.0 591.6 361.9M684.8 584.0Q691.5 591.2 704.5 591.5M684.8 584.0Q693.5 579.6 701.0 569.6M684.8 584.0Q667.9 591.9 658.8 594.0M620.0 293.2Q606.7 302.1 602.3 303.3M948.5 436.3Q957.2 435.4 966.5 434.6M447.1 229.2Q455.5 237.9 456.5 244.8M490.4 203.4Q503.8 215.9 509.2 220.4M417.3 419.9Q423.8 413.7 431.1 408.0M417.3 419.9Q409.2 411.0 410.4 403.4M417.3 419.9Q416.9 425.9 422.5 437.6M449.1 554.2Q439.5 541.8 427.8 538.4M470.0 389.1Q484.6 392.2 489.7 401.5M628.2 370.2Q613.0 372.3 607.1 372.5M702.4 242.6Q693.5 251.4 692.5 260.4M702.4 242.6Q711.8 235.9 716.4 229.0M441.3 475.8Q430.3 485.4 425.6 495.8M866.0 217.1Q872.9 211.9 880.4 203.9M582.2 594.6Q576.8 588.2 578.2 574.1M582.2 594.6Q591.7 597.4 601.9 593.9M764.9 337.1Q770.9 336.9 782.6 331.6M710.8 490.5Q717.9 490.2 727.4 497.4M473.9 240.1Q469.4 245.0 456.5 244.8M648.2 436.6Q651.3 429.4 660.9 417.2M1030.6 205.1Q1035.9 226.7 1031.9 242.6M737.7 420.9Q748.4 429.2 755.6 432.4M737.7 420.9Q739.2 429.6 741.7 443.2M420.4 563.8Q420.8 551.6 427.8 538.4M593.8 489.5Q585.5 480.8 577.7 474.0M593.8 489.5Q597.4 496.6 605.1 507.9M635.9 412.4Q645.5 417.3 660.9 417.2M509.2 220.4Q509.6 236.1 517.6 242.8M925.4 260.8Q937.1 262.0 944.7 260.6M770.7 264.5Q769.2 259.5 764.9 248.4M405.8 497.7Q403.0 486.8 393.3 482.6M405.8 497.7Q418.1 501.4 425.6 495.8M493.6 351.8Q483.3 344.1 482.6 330.5M791.4 227.7Q789.3 220.5 783.2 208.9M1029.7 517.3Q1034.4 501.0 1030.2 494.4M578.2 524.3Q583.0 539.5 579.6 545.8M678.5 530.9Q685.4 527.7 695.1 526.4M678.5 530.9Q668.6 531.8 660.2 534.0M640.4 317.5Q648.9 327.2 655.5 327.6M755.6 432.4Q753.5 432.8 741.7 443.2M427.8 538.4Q433.7 533.7 435.4 522.5M373.9 536.2Q387.4 537.0 400.0 543.1M790.9 578.3Q777.6 570.5 772.7 570.0M591.6 361.9Q600.1 368.9 607.1 372.5M1031.7 384.3Q1032.1 403.7 1029.5 415.0M906.8 492.2Q919.9 495.2 926.3 502.2M522.1 444.8Q529.6 452.1 541.5 450.4M807.6 460.6Q812.5 468.4 812.1 481.0M807.6 460.6Q810.8 449.7 819.6 447.5M655.5 327.6Q660.4 339.2 666.5 346.2M744.6 471.4Q749.6 460.0 759.5 457.4M687.5 431.1Q698.3 427.7 711.5 426.7M621.7 515.4Q620.6 504.8 627.0 499.0M621.7 515.4Q617.6 510.8 605.1 507.9M728.8 394.5Q744.7 395.9 753.8 391.0M553.5 351.7Q551.4 359.1 554.3 370.3M716.4 229.0Q720.5 235.0 724.9 247.7M540.4 381.5Q543.8 374.9 554.3 370.3M453.8 411.8Q448.5 418.5 444.6 432.0M453.8 411.8Q444.2 414.8 431.1 408.0M247.5 599.1Q261.4 600.0 265.8 592.0M949.4 407.6Q953.6 407.8 967.8 408.9M759.5 457.4Q755.6 453.1 741.7 443.2M456.5 244.8Q446.0 257.5 438.0 260.5M444.6 432.0Q429.2 437.4 422.5 437.6M620.5 220.2Q633.2 230.1 638.4 233.1M431.1 408.0Q422.6 410.0 410.4 403.4M522.2 269.7Q530.1 269.9 541.9 278.1M447.4 277.2Q446.3 264.7 438.0 260.5M783.2 208.9Q771.4 203.2 766.1 203.4" fill="none" stroke="#f6bf85" stroke-width=".9"/><ellipse cx="822.0" cy="309.8" rx="4.0" ry="4.4" fill="#d9e9c9" opacity=".6" transform="rotate(74 822.0 309.8)"/><ellipse cx="865.6" cy="324.0" rx="3.6" ry="3.6" fill="#d9e9c9" opacity=".6" transform="rotate(99 865.6 324.0)"/><ellipse cx="945.3" cy="484.9" rx="5.4" ry="2.7" fill="#d9e9c9" opacity=".6" transform="rotate(21 945.3 484.9)"/><ellipse cx="746.2" cy="594.0" rx="6.5" ry="2.1" fill="#d9e9c9" opacity=".6" transform="rotate(77 746.2 594.0)"/><ellipse cx="977.9" cy="334.3" rx="8.7" ry="5.6" fill="#d9e9c9" opacity=".6" transform="rotate(148 977.9 334.3)"/><ellipse cx="1019.7" cy="292.5" rx="5.4" ry="3.4" fill="#d9e9c9" opacity=".6" transform="rotate(36 1019.7 292.5)"/><ellipse cx="891.1" cy="534.8" rx="10.7" ry="3.9" fill="#d9e9c9" opacity=".6" transform="rotate(122 891.1 534.8)"/><ellipse cx="880.5" cy="434.1" rx="7.8" ry="5.7" fill="#d9e9c9" opacity=".6" transform="rotate(84 880.5 434.1)"/><ellipse cx="1026.7" cy="427.6" rx="8.0" ry="2.6" fill="#d9e9c9" opacity=".6" transform="rotate(74 1026.7 427.6)"/><ellipse cx="944.0" cy="597.2" rx="4.1" ry="4.2" fill="#d9e9c9" opacity=".6" transform="rotate(86 944.0 597.2)"/><ellipse cx="917.7" cy="229.2" rx="4.6" ry="5.0" fill="#d9e9c9" opacity=".6" transform="rotate(144 917.7 229.2)"/><ellipse cx="848.9" cy="430.2" rx="6.8" ry="4.2" fill="#d9e9c9" opacity=".6" transform="rotate(95 848.9 430.2)"/><ellipse cx="977.4" cy="205.3" rx="4.5" ry="2.8" fill="#d9e9c9" opacity=".6" transform="rotate(97 977.4 205.3)"/><ellipse cx="707.9" cy="595.8" rx="10.2" ry="4.1" fill="#d9e9c9" opacity=".6" transform="rotate(66 707.9 595.8)"/><ellipse cx="933.9" cy="473.8" rx="9.4" ry="4.8" fill="#d9e9c9" opacity=".6" transform="rotate(85 933.9 473.8)"/><ellipse cx="907.2" cy="284.6" rx="9.7" ry="5.7" fill="#d9e9c9" opacity=".6" transform="rotate(30 907.2 284.6)"/><ellipse cx="797.8" cy="506.9" rx="7.7" ry="5.6" fill="#d9e9c9" opacity=".6" transform="rotate(130 797.8 506.9)"/><ellipse cx="939.6" cy="574.5" rx="4.2" ry="5.0" fill="#d9e9c9" opacity=".6" transform="rotate(161 939.6 574.5)"/><ellipse cx="825.1" cy="296.4" rx="9.1" ry="3.4" fill="#d9e9c9" opacity=".6" transform="rotate(142 825.1 296.4)"/><ellipse cx="937.1" cy="572.3" rx="9.2" ry="2.3" fill="#d9e9c9" opacity=".6" transform="rotate(102 937.1 572.3)"/><ellipse cx="885.3" cy="480.8" rx="5.0" ry="3.2" fill="#d9e9c9" opacity=".6" transform="rotate(10 885.3 480.8)"/><ellipse cx="896.2" cy="264.1" rx="4.4" ry="4.5" fill="#d9e9c9" opacity=".6" transform="rotate(146 896.2 264.1)"/><ellipse cx="955.2" cy="436.0" rx="6.8" ry="3.1" fill="#d9e9c9" opacity=".6" transform="rotate(123 955.2 436.0)"/><ellipse cx="850.5" cy="447.6" rx="9.2" ry="2.2" fill="#d9e9c9" opacity=".6" transform="rotate(82 850.5 447.6)"/><ellipse cx="981.0" cy="515.2" rx="10.9" ry="3.4" fill="#d9e9c9" opacity=".6" transform="rotate(0 981.0 515.2)"/><ellipse cx="866.2" cy="448.3" rx="4.1" ry="4.9" fill="#d9e9c9" opacity=".6" transform="rotate(67 866.2 448.3)"/><ellipse cx="1022.4" cy="246.4" rx="8.0" ry="4.6" fill="#d9e9c9" opacity=".6" transform="rotate(54 1022.4 246.4)"/><ellipse cx="991.7" cy="410.6" rx="9.1" ry="3.0" fill="#d9e9c9" opacity=".6" transform="rotate(129 991.7 410.6)"/><ellipse cx="912.7" cy="577.7" rx="9.6" ry="2.6" fill="#d9e9c9" opacity=".6" transform="rotate(73 912.7 577.7)"/><ellipse cx="925.9" cy="433.8" rx="8.7" ry="2.4" fill="#d9e9c9" opacity=".6" transform="rotate(55 925.9 433.8)"/><ellipse cx="996.2" cy="291.7" rx="6.1" ry="3.3" fill="#d9e9c9" opacity=".6" transform="rotate(28 996.2 291.7)"/><ellipse cx="938.2" cy="344.7" rx="6.3" ry="5.0" fill="#d9e9c9" opacity=".6" transform="rotate(86 938.2 344.7)"/><ellipse cx="969.7" cy="571.5" rx="9.0" ry="2.7" fill="#d9e9c9" opacity=".6" transform="rotate(5 969.7 571.5)"/><ellipse cx="932.8" cy="477.3" rx="9.2" ry="4.1" fill="#d9e9c9" opacity=".6" transform="rotate(17 932.8 477.3)"/><ellipse cx="750.7" cy="564.7" rx="8.3" ry="4.2" fill="#d9e9c9" opacity=".6" transform="rotate(3 750.7 564.7)"/><ellipse cx="953.7" cy="353.3" rx="6.7" ry="4.7" fill="#d9e9c9" opacity=".6" transform="rotate(176 953.7 353.3)"/><ellipse cx="910.4" cy="490.8" rx="7.8" ry="2.5" fill="#d9e9c9" opacity=".6" transform="rotate(161 910.4 490.8)"/><ellipse cx="1006.2" cy="498.4" rx="5.9" ry="4.5" fill="#d9e9c9" opacity=".6" transform="rotate(162 1006.2 498.4)"/><ellipse cx="949.8" cy="390.6" rx="5.3" ry="3.4" fill="#d9e9c9" opacity=".6" transform="rotate(39 949.8 390.6)"/><ellipse cx="1007.6" cy="463.9" rx="9.3" ry="4.1" fill="#d9e9c9" opacity=".6" transform="rotate(137 1007.6 463.9)"/><ellipse cx="1026.0" cy="460.6" rx="7.4" ry="2.4" fill="#d9e9c9" opacity=".6" transform="rotate(16 1026.0 460.6)"/><ellipse cx="1015.6" cy="337.2" rx="3.3" ry="3.9" fill="#d9e9c9" opacity=".6" transform="rotate(12 1015.6 337.2)"/><ellipse cx="982.0" cy="213.8" rx="7.4" ry="5.8" fill="#d9e9c9" opacity=".6" transform="rotate(110 982.0 213.8)"/><ellipse cx="1016.3" cy="448.8" rx="9.6" ry="2.3" fill="#d9e9c9" opacity=".6" transform="rotate(30 1016.3 448.8)"/><ellipse cx="983.1" cy="340.8" rx="9.8" ry="3.4" fill="#d9e9c9" opacity=".6" transform="rotate(84 983.1 340.8)"/><ellipse cx="910.7" cy="558.1" rx="7.9" ry="5.3" fill="#d9e9c9" opacity=".6" transform="rotate(159 910.7 558.1)"/><ellipse cx="912.2" cy="584.6" rx="10.5" ry="2.5" fill="#d9e9c9" opacity=".6" transform="rotate(72 912.2 584.6)"/><ellipse cx="733.2" cy="558.4" rx="8.7" ry="4.1" fill="#d9e9c9" opacity=".6" transform="rotate(147 733.2 558.4)"/><ellipse cx="937.9" cy="430.4" rx="6.4" ry="4.4" fill="#d9e9c9" opacity=".6" transform="rotate(8 937.9 430.4)"/><ellipse cx="857.0" cy="594.6" rx="6.0" ry="5.6" fill="#d9e9c9" opacity=".6" transform="rotate(109 857.0 594.6)"/><ellipse cx="976.0" cy="309.3" rx="9.2" ry="2.5" fill="#d9e9c9" opacity=".6" transform="rotate(93 976.0 309.3)"/><ellipse cx="872.6" cy="588.6" rx="9.0" ry="5.2" fill="#d9e9c9" opacity=".6" transform="rotate(10 872.6 588.6)"/><ellipse cx="975.9" cy="518.4" rx="6.7" ry="4.8" fill="#d9e9c9" opacity=".6" transform="rotate(141 975.9 518.4)"/><ellipse cx="1004.7" cy="471.2" rx="10.3" ry="3.8" fill="#d9e9c9" opacity=".6" transform="rotate(169 1004.7 471.2)"/><ellipse cx="917.0" cy="588.5" rx="3.4" ry="4.4" fill="#d9e9c9" opacity=".6" transform="rotate(175 917.0 588.5)"/><ellipse cx="971.5" cy="469.5" rx="6.0" ry="5.3" fill="#d9e9c9" opacity=".6" transform="rotate(13 971.5 469.5)"/><ellipse cx="972.7" cy="502.8" rx="6.4" ry="6.0" fill="#d9e9c9" opacity=".6" transform="rotate(152 972.7 502.8)"/><ellipse cx="967.2" cy="339.4" rx="9.0" ry="5.0" fill="#d9e9c9" opacity=".6" transform="rotate(177 967.2 339.4)"/><ellipse cx="774.4" cy="546.5" rx="9.0" ry="3.4" fill="#d9e9c9" opacity=".6" transform="rotate(27 774.4 546.5)"/><ellipse cx="912.5" cy="386.9" rx="3.9" ry="5.4" fill="#d9e9c9" opacity=".6" transform="rotate(32 912.5 386.9)"/><ellipse cx="927.0" cy="310.4" rx="7.5" ry="2.0" fill="#d9e9c9" opacity=".6" transform="rotate(82 927.0 310.4)"/><ellipse cx="904.6" cy="408.4" rx="8.9" ry="2.5" fill="#d9e9c9" opacity=".6" transform="rotate(179 904.6 408.4)"/><ellipse cx="949.0" cy="215.5" rx="5.7" ry="2.3" fill="#d9e9c9" opacity=".6" transform="rotate(9 949.0 215.5)"/><ellipse cx="901.1" cy="301.0" rx="8.6" ry="5.7" fill="#d9e9c9" opacity=".6" transform="rotate(99 901.1 301.0)"/><ellipse cx="1014.4" cy="583.1" rx="9.7" ry="4.9" fill="#d9e9c9" opacity=".6" transform="rotate(118 1014.4 583.1)"/><ellipse cx="809.9" cy="539.3" rx="5.2" ry="5.6" fill="#d9e9c9" opacity=".6" transform="rotate(165 809.9 539.3)"/><ellipse cx="961.8" cy="542.9" rx="4.1" ry="4.9" fill="#d9e9c9" opacity=".6" transform="rotate(23 961.8 542.9)"/><ellipse cx="958.2" cy="363.3" rx="7.6" ry="4.4" fill="#d9e9c9" opacity=".6" transform="rotate(131 958.2 363.3)"/><ellipse cx="1027.4" cy="402.9" rx="10.5" ry="3.1" fill="#d9e9c9" opacity=".6" transform="rotate(32 1027.4 402.9)"/><ellipse cx="977.8" cy="462.1" rx="5.4" ry="5.8" fill="#d9e9c9" opacity=".6" transform="rotate(95 977.8 462.1)"/><ellipse cx="989.2" cy="444.6" rx="6.2" ry="5.5" fill="#d9e9c9" opacity=".6" transform="rotate(36 989.2 444.6)"/><ellipse cx="852.7" cy="584.7" rx="6.5" ry="5.7" fill="#d9e9c9" opacity=".6" transform="rotate(177 852.7 584.7)"/><ellipse cx="927.3" cy="272.5" rx="8.8" ry="2.9" fill="#d9e9c9" opacity=".6" transform="rotate(24 927.3 272.5)"/><ellipse cx="831.9" cy="515.6" rx="9.6" ry="3.0" fill="#d9e9c9" opacity=".6" transform="rotate(168 831.9 515.6)"/><ellipse cx="910.4" cy="354.1" rx="10.9" ry="3.9" fill="#d9e9c9" opacity=".6" transform="rotate(18 910.4 354.1)"/><ellipse cx="901.0" cy="466.4" rx="3.7" ry="5.6" fill="#d9e9c9" opacity=".6" transform="rotate(133 901.0 466.4)"/><ellipse cx="1005.6" cy="235.3" rx="4.7" ry="3.3" fill="#d9e9c9" opacity=".6" transform="rotate(44 1005.6 235.3)"/><ellipse cx="997.0" cy="547.6" rx="3.2" ry="5.7" fill="#d9e9c9" opacity=".6" transform="rotate(109 997.0 547.6)"/><ellipse cx="811.3" cy="534.6" rx="9.9" ry="4.3" fill="#d9e9c9" opacity=".6" transform="rotate(138 811.3 534.6)"/><ellipse cx="913.9" cy="204.5" rx="10.9" ry="3.0" fill="#d9e9c9" opacity=".6" transform="rotate(132 913.9 204.5)"/><ellipse cx="901.7" cy="535.7" rx="10.4" ry="4.0" fill="#d9e9c9" opacity=".6" transform="rotate(9 901.7 535.7)"/><ellipse cx="988.6" cy="398.7" rx="5.6" ry="2.0" fill="#d9e9c9" opacity=".6" transform="rotate(80 988.6 398.7)"/><ellipse cx="857.2" cy="468.9" rx="7.0" ry="4.4" fill="#d9e9c9" opacity=".6" transform="rotate(152 857.2 468.9)"/><ellipse cx="1016.4" cy="213.7" rx="7.0" ry="5.9" fill="#d9e9c9" opacity=".6" transform="rotate(25 1016.4 213.7)"/><ellipse cx="884.9" cy="382.3" rx="5.3" ry="2.9" fill="#d9e9c9" opacity=".6" transform="rotate(148 884.9 382.3)"/><ellipse cx="876.0" cy="326.2" rx="10.7" ry="2.4" fill="#d9e9c9" opacity=".6" transform="rotate(48 876.0 326.2)"/><ellipse cx="908.5" cy="276.7" rx="10.0" ry="5.4" fill="#d9e9c9" opacity=".6" transform="rotate(84 908.5 276.7)"/><ellipse cx="1025.7" cy="308.9" rx="5.8" ry="2.4" fill="#d9e9c9" opacity=".6" transform="rotate(34 1025.7 308.9)"/><ellipse cx="993.0" cy="493.9" rx="9.9" ry="2.9" fill="#d9e9c9" opacity=".6" transform="rotate(133 993.0 493.9)"/><ellipse cx="1021.7" cy="413.9" rx="5.1" ry="5.2" fill="#d9e9c9" opacity=".6" transform="rotate(63 1021.7 413.9)"/><ellipse cx="825.1" cy="319.6" rx="7.5" ry="4.6" fill="#d9e9c9" opacity=".6" transform="rotate(82 825.1 319.6)"/><ellipse cx="896.3" cy="419.0" rx="5.3" ry="5.6" fill="#d9e9c9" opacity=".6" transform="rotate(156 896.3 419.0)"/><ellipse cx="963.7" cy="445.4" rx="9.1" ry="5.7" fill="#d9e9c9" opacity=".6" transform="rotate(72 963.7 445.4)"/><ellipse cx="908.1" cy="498.3" rx="3.5" ry="4.4" fill="#d9e9c9" opacity=".6" transform="rotate(137 908.1 498.3)"/><ellipse cx="727.0" cy="572.6" rx="6.9" ry="2.1" fill="#d9e9c9" opacity=".6" transform="rotate(29 727.0 572.6)"/><ellipse cx="835.6" cy="531.0" rx="10.8" ry="2.1" fill="#d9e9c9" opacity=".6" transform="rotate(70 835.6 531.0)"/><ellipse cx="847.6" cy="339.3" rx="10.2" ry="2.6" fill="#d9e9c9" opacity=".6" transform="rotate(175 847.6 339.3)"/><ellipse cx="958.2" cy="418.1" rx="6.1" ry="5.5" fill="#d9e9c9" opacity=".6" transform="rotate(112 958.2 418.1)"/><ellipse cx="747.2" cy="596.3" rx="8.0" ry="4.4" fill="#d9e9c9" opacity=".6" transform="rotate(3 747.2 596.3)"/><ellipse cx="995.0" cy="223.1" rx="5.7" ry="4.9" fill="#d9e9c9" opacity=".6" transform="rotate(141 995.0 223.1)"/><ellipse cx="697.1" cy="422.7" rx="4.9" ry="2.4" fill="#dcebce" opacity=".5" transform="rotate(53 697.1 422.7)"/><ellipse cx="573.6" cy="533.6" rx="8.4" ry="3.4" fill="#dcebce" opacity=".5" transform="rotate(13 573.6 533.6)"/><ellipse cx="680.5" cy="577.9" rx="7.5" ry="2.5" fill="#dcebce" opacity=".5" transform="rotate(128 680.5 577.9)"/><ellipse cx="696.2" cy="340.3" rx="4.2" ry="3.3" fill="#dcebce" opacity=".5" transform="rotate(49 696.2 340.3)"/><ellipse cx="706.1" cy="452.2" rx="3.8" ry="4.0" fill="#dcebce" opacity=".5" transform="rotate(121 706.1 452.2)"/><ellipse cx="575.3" cy="547.9" rx="6.5" ry="4.5" fill="#dcebce" opacity=".5" transform="rotate(119 575.3 547.9)"/><ellipse cx="681.2" cy="526.8" rx="3.4" ry="4.6" fill="#dcebce" opacity=".5" transform="rotate(75 681.2 526.8)"/><ellipse cx="641.4" cy="423.1" rx="7.6" ry="4.4" fill="#dcebce" opacity=".5" transform="rotate(13 641.4 423.1)"/><ellipse cx="640.8" cy="421.5" rx="6.0" ry="3.8" fill="#dcebce" opacity=".5" transform="rotate(172 640.8 421.5)"/><ellipse cx="720.8" cy="434.5" rx="8.2" ry="4.5" fill="#dcebce" opacity=".5" transform="rotate(6 720.8 434.5)"/><ellipse cx="579.9" cy="438.2" rx="8.1" ry="3.2" fill="#dcebce" opacity=".5" transform="rotate(41 579.9 438.2)"/><ellipse cx="593.8" cy="558.3" rx="7.7" ry="2.8" fill="#dcebce" opacity=".5" transform="rotate(22 593.8 558.3)"/><ellipse cx="651.8" cy="375.9" rx="5.7" ry="4.2" fill="#dcebce" opacity=".5" transform="rotate(18 651.8 375.9)"/><ellipse cx="670.1" cy="566.6" rx="4.1" ry="3.1" fill="#dcebce" opacity=".5" transform="rotate(48 670.1 566.6)"/><ellipse cx="616.8" cy="425.9" rx="8.6" ry="3.4" fill="#dcebce" opacity=".5" transform="rotate(73 616.8 425.9)"/><ellipse cx="648.4" cy="377.5" rx="5.1" ry="3.3" fill="#dcebce" opacity=".5" transform="rotate(166 648.4 377.5)"/><ellipse cx="651.7" cy="543.7" rx="5.6" ry="3.2" fill="#dcebce" opacity=".5" transform="rotate(166 651.7 543.7)"/><ellipse cx="615.6" cy="473.8" rx="3.0" ry="5.0" fill="#dcebce" opacity=".5" transform="rotate(104 615.6 473.8)"/><ellipse cx="610.2" cy="513.0" rx="3.0" ry="3.9" fill="#dcebce" opacity=".5" transform="rotate(116 610.2 513.0)"/><ellipse cx="591.9" cy="361.4" rx="5.2" ry="3.1" fill="#dcebce" opacity=".5" transform="rotate(7 591.9 361.4)"/><ellipse cx="578.8" cy="422.7" rx="4.7" ry="3.8" fill="#dcebce" opacity=".5" transform="rotate(100 578.8 422.7)"/><ellipse cx="608.1" cy="588.0" rx="7.4" ry="3.9" fill="#dcebce" opacity=".5" transform="rotate(145 608.1 588.0)"/><ellipse cx="570.4" cy="491.5" rx="4.2" ry="3.4" fill="#dcebce" opacity=".5" transform="rotate(50 570.4 491.5)"/><ellipse cx="713.9" cy="492.5" rx="8.2" ry="2.9" fill="#dcebce" opacity=".5" transform="rotate(21 713.9 492.5)"/><ellipse cx="572.7" cy="436.2" rx="8.7" ry="4.2" fill="#dcebce" opacity=".5" transform="rotate(132 572.7 436.2)"/><ellipse cx="732.1" cy="365.7" rx="5.1" ry="2.3" fill="#dcebce" opacity=".5" transform="rotate(162 732.1 365.7)"/><ellipse cx="574.8" cy="591.4" rx="3.5" ry="3.4" fill="#dcebce" opacity=".5" transform="rotate(177 574.8 591.4)"/><ellipse cx="748.7" cy="520.0" rx="6.8" ry="4.9" fill="#dcebce" opacity=".5" transform="rotate(63 748.7 520.0)"/><ellipse cx="700.3" cy="443.3" rx="8.8" ry="4.6" fill="#dcebce" opacity=".5" transform="rotate(56 700.3 443.3)"/><ellipse cx="757.5" cy="473.7" rx="3.8" ry="2.4" fill="#dcebce" opacity=".5" transform="rotate(122 757.5 473.7)"/><ellipse cx="595.0" cy="339.9" rx="4.3" ry="3.2" fill="#dcebce" opacity=".5" transform="rotate(175 595.0 339.9)"/><ellipse cx="677.3" cy="490.1" rx="5.8" ry="3.5" fill="#dcebce" opacity=".5" transform="rotate(70 677.3 490.1)"/><ellipse cx="733.6" cy="408.1" rx="3.3" ry="3.8" fill="#dcebce" opacity=".5" transform="rotate(94 733.6 408.1)"/><ellipse cx="585.1" cy="435.4" rx="8.8" ry="3.2" fill="#dcebce" opacity=".5" transform="rotate(173 585.1 435.4)"/><ellipse cx="654.6" cy="378.7" rx="8.2" ry="4.8" fill="#dcebce" opacity=".5" transform="rotate(149 654.6 378.7)"/><rect x="302.9" y="526.9" width="4.0" height="2.7" fill="#d6d3cd"/><rect x="692.4" y="440.5" width="1.7" height="2.2" fill="#d6d3cd"/><rect x="446.8" y="295.6" width="3.8" height="1.7" fill="#d6d3cd"/><rect x="364.8" y="543.9" width="2.8" height="2.8" fill="#d6d3cd"/><rect x="344.7" y="561.1" width="2.5" height="2.8" fill="#d6d3cd"/><rect x="708.0" y="338.0" width="2.4" height="1.4" fill="#d6d3cd"/><rect x="660.0" y="232.0" width="3.8" height="1.7" fill="#d6d3cd"/><rect x="465.9" y="356.0" width="2.7" height="2.9" fill="#d6d3cd"/><rect x="650.7" y="407.7" width="3.7" height="2.2" fill="#d6d3cd"/><rect x="755.5" y="468.5" width="2.4" height="2.0" fill="#d6d3cd"/><rect x="998.9" y="471.1" width="1.8" height="2.7" fill="#d6d3cd"/><rect x="541.1" y="367.2" width="3.5" height="1.7" fill="#d6d3cd"/><rect x="768.2" y="513.5" width="3.2" height="1.5" fill="#d6d3cd"/><rect x="706.3" y="347.1" width="3.8" height="2.2" fill="#d6d3cd"/><rect x="1022.2" y="275.9" width="3.6" height="3.0" fill="#d6d3cd"/><rect x="593.4" y="329.8" width="3.0" height="1.4" fill="#d6d3cd"/><rect x="856.1" y="434.2" width="1.9" height="2.3" fill="#d6d3cd"/><rect x="1019.1" y="584.9" width="1.8" height="2.5" fill="#d6d3cd"/><rect x="470.3" y="453.5" width="3.8" height="2.0" fill="#d6d3cd"/><rect x="464.8" y="225.5" width="3.2" height="2.4" fill="#d6d3cd"/><rect x="766.0" y="236.2" width="2.3" height="1.7" fill="#d6d3cd"/><rect x="389.8" y="544.6" width="3.7" height="2.3" fill="#d6d3cd"/><rect x="468.0" y="333.5" width="3.8" height="1.4" fill="#d6d3cd"/><rect x="295.9" y="578.6" width="2.2" height="2.9" fill="#d6d3cd"/><rect x="444.9" y="242.5" width="2.3" height="2.7" fill="#d6d3cd"/><rect x="914.0" y="445.0" width="2.8" height="2.0" fill="#d6d3cd"/><rect x="486.9" y="575.6" width="2.5" height="1.4" fill="#d6d3cd"/><rect x="687.3" y="351.9" width="2.3" height="2.9" fill="#d6d3cd"/><rect x="753.7" y="387.2" width="3.8" height="1.5" fill="#d6d3cd"/><rect x="349.3" y="589.3" width="1.8" height="2.5" fill="#d6d3cd"/><rect x="987.6" y="488.7" width="2.3" height="1.6" fill="#d6d3cd"/><rect x="796.1" y="501.9" width="2.2" height="1.3" fill="#d6d3cd"/><rect x="493.6" y="419.8" width="2.3" height="2.6" fill="#d6d3cd"/><rect x="652.2" y="257.6" width="3.3" height="3.0" fill="#d6d3cd"/><rect x="681.9" y="299.7" width="1.8" height="2.1" fill="#d6d3cd"/><rect x="354.8" y="473.2" width="2.8" height="1.6" fill="#d6d3cd"/><rect x="955.4" y="419.4" width="3.5" height="2.6" fill="#d6d3cd"/><rect x="440.7" y="406.2" width="3.3" height="1.4" fill="#d6d3cd"/><rect x="865.8" y="572.1" width="3.0" height="2.3" fill="#d6d3cd"/><rect x="481.6" y="447.8" width="1.9" height="1.9" fill="#d6d3cd"/><rect x="973.6" y="290.2" width="4.0" height="1.2" fill="#d6d3cd"/><rect x="1006.3" y="587.9" width="3.8" height="3.0" fill="#d6d3cd"/><rect x="1012.7" y="402.2" width="3.5" height="1.5" fill="#d6d3cd"/><rect x="880.9" y="270.5" width="3.6" height="2.6" fill="#d6d3cd"/><rect x="769.3" y="511.2" width="2.3" height="2.7" fill="#d6d3cd"/><rect x="967.2" y="456.3" width="3.2" height="1.6" fill="#d6d3cd"/><rect x="534.1" y="486.0" width="3.0" height="2.2" fill="#d6d3cd"/><rect x="600.1" y="529.2" width="4.0" height="1.5" fill="#d6d3cd"/><rect x="1015.1" y="314.5" width="3.9" height="1.9" fill="#d6d3cd"/><rect x="866.7" y="429.4" width="3.1" height="1.3" fill="#d6d3cd"/><rect x="311.6" y="562.5" width="1.6" height="2.3" fill="#d6d3cd"/><rect x="990.6" y="456.0" width="2.9" height="2.5" fill="#d6d3cd"/><rect x="856.1" y="318.7" width="1.8" height="1.8" fill="#d6d3cd"/><rect x="723.6" y="288.8" width="2.4" height="2.0" fill="#d6d3cd"/><rect x="484.7" y="460.0" width="3.8" height="2.2" fill="#d6d3cd"/><rect x="866.3" y="295.4" width="3.7" height="2.7" fill="#d6d3cd"/><rect x="883.4" y="397.5" width="3.1" height="2.1" fill="#d6d3cd"/><rect x="289.5" y="593.7" width="3.8" height="2.0" fill="#d6d3cd"/><rect x="1003.5" y="470.3" width="2.5" height="1.4" fill="#d6d3cd"/><rect x="1021.7" y="218.0" width="2.5" height="1.8" fill="#d6d3cd"/><rect x="807.5" y="355.8" width="1.6" height="1.9" fill="#d6d3cd"/><rect x="977.2" y="467.0" width="3.9" height="2.2" fill="#d6d3cd"/><rect x="662.5" y="429.6" width="1.6" height="1.8" fill="#d6d3cd"/><rect x="588.6" y="417.5" width="3.7" height="2.5" fill="#d6d3cd"/><rect x="480.9" y="594.1" width="3.0" height="1.3" fill="#d6d3cd"/><rect x="633.2" y="320.0" width="2.5" height="2.3" fill="#d6d3cd"/><rect x="899.0" y="490.1" width="3.9" height="2.2" fill="#d6d3cd"/><rect x="929.0" y="334.5" width="3.9" height="1.3" fill="#d6d3cd"/><rect x="709.3" y="292.5" width="3.0" height="1.6" fill="#d6d3cd"/><rect x="640.3" y="277.4" width="3.8" height="2.9" fill="#d6d3cd"/><rect x="626.6" y="270.7" width="2.9" height="1.6" fill="#d6d3cd"/><rect x="969.5" y="537.7" width="1.8" height="1.5" fill="#d6d3cd"/><rect x="734.0" y="304.7" width="1.8" height="1.5" fill="#d6d3cd"/><rect x="852.3" y="506.3" width="2.8" height="3.0" fill="#d6d3cd"/><rect x="967.9" y="433.5" width="1.9" height="2.5" fill="#d6d3cd"/><rect x="855.3" y="470.8" width="1.8" height="2.7" fill="#d6d3cd"/><rect x="853.6" y="576.9" width="2.6" height="1.9" fill="#d6d3cd"/><rect x="928.5" y="371.3" width="3.2" height="2.6" fill="#d6d3cd"/><rect x="871.7" y="592.8" width="2.1" height="1.8" fill="#d6d3cd"/><rect x="816.9" y="368.6" width="1.8" height="1.9" fill="#d6d3cd"/><rect x="965.0" y="474.3" width="1.8" height="1.4" fill="#d6d3cd"/><rect x="756.7" y="237.9" width="3.0" height="1.3" fill="#d6d3cd"/><rect x="283.5" y="553.4" width="2.5" height="1.8" fill="#d6d3cd"/><rect x="661.2" y="486.6" width="1.7" height="1.9" fill="#d6d3cd"/><rect x="465.5" y="206.3" width="2.6" height="2.1" fill="#d6d3cd"/><rect x="615.3" y="489.3" width="2.6" height="2.0" fill="#d6d3cd"/><rect x="743.8" y="393.5" width="2.1" height="2.6" fill="#d6d3cd"/><rect x="312.9" y="533.6" width="3.7" height="1.6" fill="#d6d3cd"/><rect x="608.1" y="515.8" width="2.0" height="2.5" fill="#d6d3cd"/><rect x="550.4" y="350.9" width="2.7" height="1.8" fill="#d6d3cd"/><rect x="786.7" y="468.5" width="1.5" height="2.0" fill="#d6d3cd"/><rect x="449.1" y="463.6" width="3.6" height="2.6" fill="#d6d3cd"/><rect x="948.9" y="570.3" width="2.9" height="1.2" fill="#d6d3cd"/><rect x="790.5" y="553.2" width="3.8" height="2.0" fill="#d6d3cd"/><rect x="350.4" y="537.2" width="3.9" height="2.7" fill="#d6d3cd"/><rect x="689.5" y="552.8" width="3.8" height="2.0" fill="#d6d3cd"/><rect x="359.5" y="526.9" width="2.3" height="1.9" fill="#d6d3cd"/><rect x="916.0" y="438.6" width="1.6" height="2.3" fill="#d6d3cd"/><rect x="404.2" y="512.1" width="2.9" height="2.0" fill="#d6d3cd"/><rect x="830.6" y="562.3" width="2.5" height="2.5" fill="#d6d3cd"/><rect x="326.5" y="580.4" width="1.7" height="2.4" fill="#d6d3cd"/><rect x="1026.7" y="505.6" width="3.7" height="2.0" fill="#d6d3cd"/><rect x="671.4" y="365.2" width="3.2" height="1.8" fill="#d6d3cd"/><rect x="435.3" y="455.8" width="3.8" height="2.0" fill="#d6d3cd"/><rect x="840.5" y="213.1" width="2.8" height="2.8" fill="#d6d3cd"/><rect x="731.2" y="591.2" width="2.4" height="1.4" fill="#d6d3cd"/><rect x="640.7" y="227.0" width="3.9" height="2.3" fill="#d6d3cd"/><rect x="509.8" y="203.0" width="1.8" height="2.1" fill="#d6d3cd"/><rect x="448.1" y="392.1" width="3.2" height="1.3" fill="#d6d3cd"/><rect x="983.1" y="451.8" width="2.9" height="1.3" fill="#d6d3cd"/><rect x="994.6" y="353.5" width="2.1" height="2.5" fill="#d6d3cd"/><rect x="874.1" y="587.8" width="3.2" height="2.0" fill="#d6d3cd"/><rect x="962.7" y="231.0" width="2.6" height="2.8" fill="#d6d3cd"/><rect x="648.4" y="519.5" width="3.4" height="1.7" fill="#d6d3cd"/><rect x="996.8" y="215.4" width="3.4" height="1.2" fill="#d6d3cd"/><rect x="546.6" y="428.7" width="3.8" height="1.8" fill="#d6d3cd"/><rect x="1015.2" y="586.4" width="3.8" height="2.2" fill="#d6d3cd"/><rect x="286.1" y="570.7" width="3.9" height="1.8" fill="#d6d3cd"/><rect x="487.9" y="339.8" width="3.5" height="1.9" fill="#d6d3cd"/><rect x="590.3" y="318.9" width="2.1" height="2.8" fill="#d6d3cd"/><rect x="1031.8" y="397.5" width="3.7" height="2.0" fill="#d6d3cd"/><rect x="918.8" y="405.3" width="2.3" height="1.8" fill="#d6d3cd"/><rect x="949.3" y="547.4" width="3.8" height="2.9" fill="#d6d3cd"/><rect x="769.6" y="436.2" width="2.3" height="1.6" fill="#d6d3cd"/><rect x="805.6" y="510.7" width="1.9" height="1.8" fill="#d6d3cd"/><rect x="469.7" y="314.3" width="3.4" height="1.2" fill="#d6d3cd"/><rect x="479.4" y="518.0" width="1.7" height="2.0" fill="#d6d3cd"/><rect x="1008.3" y="590.1" width="3.3" height="2.6" fill="#d6d3cd"/><rect x="717.5" y="365.7" width="1.6" height="2.1" fill="#d6d3cd"/><rect x="628.5" y="559.0" width="2.5" height="2.1" fill="#d6d3cd"/><rect x="956.2" y="593.6" width="1.6" height="1.6" fill="#d6d3cd"/><rect x="588.3" y="391.4" width="3.8" height="2.5" fill="#d6d3cd"/><rect x="693.8" y="272.5" width="3.2" height="2.1" fill="#d6d3cd"/><rect x="769.7" y="203.1" width="2.5" height="1.8" fill="#d6d3cd"/><rect x="538.2" y="404.5" width="3.5" height="2.1" fill="#d6d3cd"/><rect x="675.3" y="222.3" width="3.0" height="2.2" fill="#d6d3cd"/><rect x="735.2" y="470.2" width="3.4" height="1.4" fill="#d6d3cd"/><rect x="463.3" y="310.7" width="3.1" height="2.8" fill="#d6d3cd"/><rect x="503.6" y="513.8" width="1.5" height="1.7" fill="#d6d3cd"/><rect x="649.9" y="559.0" width="3.3" height="2.8" fill="#d6d3cd"/><rect x="1001.4" y="309.7" width="3.8" height="1.5" fill="#d6d3cd"/><rect x="680.0" y="283.6" width="1.8" height="1.8" fill="#d6d3cd"/><rect x="784.0" y="477.8" width="1.9" height="1.8" fill="#d6d3cd"/><rect x="1003.7" y="439.0" width="3.5" height="3.0" fill="#d6d3cd"/><rect x="886.3" y="526.3" width="2.3" height="2.7" fill="#d6d3cd"/><rect x="777.0" y="335.9" width="3.2" height="2.6" fill="#d6d3cd"/><rect x="624.3" y="416.8" width="2.0" height="1.3" fill="#d6d3cd"/><rect x="1024.1" y="524.8" width="3.7" height="2.0" fill="#d6d3cd"/><rect x="289.5" y="566.3" width="2.9" height="2.3" fill="#d6d3cd"/><rect x="800.3" y="295.1" width="3.8" height="2.2" fill="#d6d3cd"/><rect x="707.8" y="339.7" width="2.9" height="2.9" fill="#d6d3cd"/><rect x="781.9" y="484.8" width="2.7" height="2.6" fill="#d6d3cd"/><rect x="641.8" y="284.7" width="2.3" height="1.8" fill="#d6d3cd"/><rect x="505.3" y="263.8" width="3.8" height="1.8" fill="#d6d3cd"/><rect x="402.5" y="583.3" width="1.6" height="2.1" fill="#d6d3cd"/><rect x="883.3" y="505.8" width="1.9" height="1.8" fill="#d6d3cd"/><rect x="669.7" y="493.4" width="3.8" height="2.2" fill="#d6d3cd"/><rect x="675.7" y="550.2" width="2.1" height="2.4" fill="#d6d3cd"/><rect x="824.9" y="204.0" width="2.0" height="2.1" fill="#d6d3cd"/><rect x="742.4" y="262.0" width="3.0" height="3.0" fill="#d6d3cd"/><rect x="851.1" y="504.2" width="2.3" height="1.8" fill="#d6d3cd"/><rect x="651.9" y="417.6" width="1.7" height="2.8" fill="#d6d3cd"/><rect x="868.0" y="496.0" width="1.7" height="2.2" fill="#d6d3cd"/><rect x="315.9" y="571.7" width="2.0" height="1.4" fill="#d6d3cd"/><rect x="627.8" y="398.9" width="2.6" height="2.5" fill="#d6d3cd"/><rect x="665.7" y="370.2" width="3.7" height="1.6" fill="#d6d3cd"/><rect x="637.3" y="230.4" width="3.5" height="1.6" fill="#d6d3cd"/><rect x="671.2" y="481.7" width="1.7" height="1.4" fill="#d6d3cd"/><rect x="618.6" y="444.2" width="2.0" height="1.8" fill="#d6d3cd"/><rect x="984.7" y="459.8" width="1.9" height="2.3" fill="#d6d3cd"/><rect x="1001.3" y="296.5" width="3.3" height="2.6" fill="#d6d3cd"/><rect x="332.9" y="584.4" width="3.7" height="1.3" fill="#d6d3cd"/><rect x="399.3" y="491.9" width="2.5" height="1.4" fill="#d6d3cd"/><rect x="982.4" y="380.9" width="3.4" height="2.4" fill="#d6d3cd"/><rect x="1026.3" y="320.6" width="2.7" height="2.3" fill="#d6d3cd"/><rect x="980.7" y="567.0" width="3.5" height="2.2" fill="#d6d3cd"/><rect x="481.0" y="592.1" width="3.4" height="2.9" fill="#d6d3cd"/><rect x="435.4" y="387.8" width="2.6" height="2.0" fill="#d6d3cd"/><rect x="935.1" y="396.9" width="3.3" height="2.1" fill="#d6d3cd"/><rect x="952.9" y="533.2" width="2.3" height="3.0" fill="#d6d3cd"/><rect x="912.9" y="519.8" width="3.2" height="2.0" fill="#d6d3cd"/><rect x="497.9" y="452.1" width="3.7" height="1.9" fill="#d6d3cd"/><rect x="784.6" y="439.5" width="3.8" height="2.9" fill="#d6d3cd"/><path d="M512.5 577.0q-7.4 1.8 17.1 7.6M725.0 263.8q5.4 -0.0 27.8 1.5M922.5 436.1q-7.4 2.9 9.7 -9.9M518.3 430.0q-3.3 7.2 -1.0 -21.2M580.9 381.1q0.7 1.8 -12.6 -1.4M424.0 481.5q-1.9 -6.6 -27.6 9.0M973.7 314.9q-2.4 0.0 23.1 -6.3M885.7 551.0q-6.5 0.2 11.3 13.1M502.2 314.1q-4.7 0.4 -16.2 -24.6M611.8 428.8q-3.3 6.7 -7.3 13.4M662.2 581.0q6.8 -6.2 15.3 1.7M726.7 272.8q5.9 1.0 13.7 15.4M1026.0 514.7q-2.9 -7.4 -17.7 -2.3M468.4 539.2q7.3 2.9 -18.1 20.5M513.2 376.6q-2.4 -7.4 11.8 11.1M925.1 401.8q-0.7 -2.9 -14.1 18.5M581.4 378.8q-0.5 5.8 -6.4 17.5M890.8 545.9q-7.1 5.5 -28.6 5.8M791.2 213.6q1.7 -7.1 10.0 -14.8M774.7 464.7q4.7 6.6 -10.9 14.4M685.2 328.4q5.6 4.9 -10.4 19.6M583.5 549.3q-5.1 7.6 14.5 -2.1M1029.7 527.2q7.9 -4.0 6.2 18.3M867.5 303.4q2.6 -1.2 -25.7 13.2M1004.9 559.2q-6.0 -2.9 20.2 -7.3M432.6 314.9q4.4 -7.7 13.9 19.7M896.6 522.2q-6.4 -7.4 -29.6 -1.4M860.8 452.8q3.4 1.2 19.3 18.7M496.9 355.9q-7.1 -1.1 22.7 -3.0M712.7 477.1q2.9 0.1 -15.5 -3.4M789.2 594.4q4.2 -4.6 14.8 -9.8M876.1 291.2q5.2 3.1 11.0 -20.0M433.3 495.0q4.6 -2.9 7.4 -18.4M977.3 543.7q-5.6 0.3 -0.1 -19.1M363.1 508.2q-2.9 0.5 4.3 -12.9M582.4 479.1q2.6 -4.4 24.9 5.8M412.9 387.0q-2.0 -7.3 6.9 10.1M318.8 526.3q-3.4 -1.4 -13.6 -9.6M610.7 447.6q2.2 5.8 10.8 20.2M895.6 507.5q6.3 2.4 -11.1 -6.6M740.8 346.5q6.5 -0.6 12.0 7.3M590.4 559.5q-1.6 -0.1 -17.8 1.7M749.8 484.9q3.4 6.7 24.7 6.5M1014.8 317.5q3.7 -3.4 16.0 -23.7M673.9 428.9q7.7 1.4 -3.3 22.2M740.0 380.5q-6.5 -0.4 -0.9 27.3M750.8 594.9q2.3 -7.2 13.6 25.7M534.8 258.3q6.2 -7.3 17.2 -16.5M620.5 543.5q1.9 5.9 11.6 13.9M459.7 291.9q2.3 -7.3 21.5 5.7M760.0 221.5q1.9 2.2 16.2 -14.8M576.0 439.3q0.2 -7.2 -19.6 16.0M952.3 233.6q-1.3 -7.6 -23.5 9.0M448.2 366.7q-4.5 7.2 -0.2 26.9M800.3 294.5q-5.4 6.5 -19.7 10.8M403.2 473.5q-6.6 -5.8 -27.1 -1.3M711.6 303.8q4.3 0.5 0.2 17.7" fill="none" stroke="#b5d6e6" stroke-width=".8"/><path d="M406.4 458.9q-5.5 -2.7 13.2 21.3M657.8 297.7q-9.4 0.6 32.0 43.3M890.4 342.7q3.6 -10.2 -18.4 -29.3M1003.9 577.5q-1.0 2.8 47.1 -12.4M889.3 555.5q-7.4 -5.0 -36.6 1.8M815.4 236.8q6.7 -6.7 -20.2 -17.5M628.3 543.8q4.1 -2.8 -0.9 -29.1M1023.6 294.6q0.0 3.3 -30.9 -27.6M606.1 513.4q-7.0 3.6 -24.2 -23.8M703.0 266.9q-2.0 -4.9 -51.9 24.1M755.1 226.1q-11.1 -8.7 -35.2 45.0M746.6 212.2q3.2 -6.3 -8.0 -43.4M762.5 599.7q-11.5 -3.3 30.0 -23.3M856.3 366.6q-1.6 -6.8 -36.4 -32.6M848.3 389.3q1.1 2.6 -36.6 -5.1M906.9 481.8q6.4 6.6 -51.7 -17.7M371.3 571.3q5.9 -7.8 -32.7 10.5M753.8 224.7q5.4 0.8 -23.8 -46.6M871.3 285.9q-5.3 10.2 -43.9 7.1M981.2 425.9q5.5 0.6 35.9 4.2M826.1 425.0q10.8 -0.1 14.9 -53.0M845.9 531.8q-9.5 -1.1 -1.0 58.1M356.2 553.6q-4.0 4.9 -1.8 -26.8M460.3 276.8q0.1 -6.2 -14.9 35.8" fill="none" stroke="#d3a5d6" stroke-width=".8" stroke-dasharray="4 3"/><ellipse cx="483" cy="362" rx="11.7" ry="9" fill="#d9d6d0"/><ellipse cx="372" cy="456" rx="9.1" ry="7" fill="#d9d6d0"/><ellipse cx="425" cy="505" rx="11.7" ry="9" fill="#d9d6d0"/><ellipse cx="530" cy="455" rx="9.1" ry="7" fill="#d9d6d0"/><ellipse cx="667" cy="478" rx="6.5" ry="5" fill="#d9d6d0"/><ellipse cx="657" cy="520" rx="6.5" ry="5" fill="#d9d6d0"/><ellipse cx="845" cy="405" rx="6.5" ry="5" fill="#d9d6d0"/><ellipse cx="980" cy="492" rx="7.8" ry="6" fill="#d9d6d0"/><ellipse cx="700" cy="327" rx="5.2" ry="4" fill="#d9d6d0"/><ellipse cx="676" cy="410" rx="5.2" ry="4" fill="#d9d6d0"/><ellipse cx="572" cy="425" rx="5.2" ry="4" fill="#d9d6d0"/><ellipse cx="442" cy="532" rx="5.2" ry="4" fill="#d9d6d0"/><ellipse cx="462" cy="594" rx="6.5" ry="5" fill="#d9d6d0"/><ellipse cx="556" cy="562" rx="6.5" ry="5" fill="#d9d6d0"/><ellipse cx="405" cy="425" rx="5.2" ry="4" fill="#d9d6d0"/><ellipse cx="455" cy="292" rx="3.9" ry="3" fill="#d9d6d0"/><ellipse cx="900" cy="595" rx="10.4" ry="8" fill="#d9d6d0"/><ellipse cx="1013" cy="575" rx="5.2" ry="4" fill="#d9d6d0"/><ellipse cx="846" cy="240" rx="5.2" ry="4" fill="#d9d6d0"/><ellipse cx="650" cy="440" rx="18" ry="14" fill="#dfeccf" opacity=".55"/><ellipse cx="690" cy="390" rx="12" ry="20" fill="#dfeccf" opacity=".55"/><ellipse cx="890" cy="560" rx="14" ry="8" fill="#dfeccf" opacity=".55"/><ellipse cx="880" cy="535" rx="10" ry="6" fill="#dfeccf" opacity=".55"/><ellipse cx="905" cy="300" rx="8" ry="25" fill="#dfeccf" opacity=".55"/><ellipse cx="930" cy="330" rx="10" ry="14" fill="#dfeccf" opacity=".55"/><ellipse cx="1000" cy="300" rx="14" ry="10" fill="#dfeccf" opacity=".55"/><ellipse cx="790" cy="335" rx="12" ry="8" fill="#dfeccf" opacity=".55"/><ellipse cx="1010" cy="420" rx="10" ry="8" fill="#dfeccf" opacity=".55"/><ellipse cx="620" cy="560" rx="10" ry="6" fill="#dfeccf" opacity=".55"/><ellipse cx="730" cy="560" rx="8" ry="10" fill="#dfeccf" opacity=".55"/><ellipse cx="985" cy="245" rx="20" ry="10" fill="#dfeccf" opacity=".55"/><polyline points="795.9,528.2 822.1,527.0 848.2,518.7 879.2,518.7" fill="none" stroke="#f2a58f" stroke-width="1.2" stroke-linejoin="round" stroke-linecap="round" /><polyline points="926.8,430.7 941.0,454.5 952.9,468.8 967.2,478.3" fill="none" stroke="#f2a58f" stroke-width="1.2" stroke-linejoin="round" stroke-linecap="round" /><polyline points="581.6,312.1 593.3,333.2 607.4,354.3 614.4,370.7" fill="none" stroke="#f2a58f" stroke-width="1.2" stroke-linejoin="round" stroke-linecap="round" /><polyline points="551.2,363.7 565.2,382.4 584.0,380.1 602.7,382.4" fill="none" stroke="#f2a58f" stroke-width="1.2" stroke-linejoin="round" stroke-linecap="round" /><polyline points="593.3,333.2 612.1,325.0 630.8,316.8" fill="none" stroke="#f2a58f" stroke-width="1.2" stroke-linejoin="round" stroke-linecap="round" /><polyline points="554.7,267.6 569.9,279.3 581.6,295.7 586.3,307.4 581.6,312.1" fill="none" stroke="#f2a58f" stroke-width="1.2" stroke-linejoin="round" stroke-linecap="round" /><polyline points="786.4,218.8 805.4,230.7 826.8,237.8 848.2,235.4 872.0,221.2 881.5,221.2" fill="none" stroke="#f2a58f" stroke-width="1.2" stroke-linejoin="round" stroke-linecap="round" /><polyline points="552.7,269.3 568.8,275 578.5,287.8 585,300 586,308 580,314" fill="none" stroke="#f2a58f" stroke-width="1.2" stroke-linejoin="round" stroke-linecap="round" /><polyline points="550.5,531.5 551.8,539.6 553.0,547.7 554.3,555.8 554.6,564.1 554.6,572.4 555.6,580.6 557.6,588.7 559.6,596.8 561.6,604.9" fill="none" stroke="#e2657f" stroke-width="1.3" stroke-linejoin="round" stroke-linecap="round" /><polyline points="572.0,459.0 580.1,459.7 588.7,460.5 597.2,461.4 605.4,463.0 613.2,465.3 621.0,467.6 629.0,469.7 637.2,471.5 645.4,473.2 653.6,475.0 662.0,476.7 670.5,478.4 679.0,480.1 686.7,482.9 694.2,486.0 701.7,489.2 709.2,492.3 715.4,499.0 720.0,504.0" fill="none" stroke="#e2657f" stroke-width="1.3" stroke-linejoin="round" stroke-linecap="round" /><polyline points="571.8,415.0 580.0,418.0 587.9,420.9 595.9,423.8 603.8,426.7 611.7,425.3 619.7,423.8 627.6,422.4 636.0,420.7 644.5,419.0 653.0,417.3 661.0,418.0 669.1,418.6 677.1,419.3 685.0,420.8 692.8,423.1 700.5,425.5 708.3,427.9 716.1,430.2 720.0,431.4" fill="none" stroke="#e2657f" stroke-width="1.3" stroke-linejoin="round" stroke-linecap="round" /><polyline points="490.5,531.7 488.8,540.2 487.1,548.7 484.4,556.6 481.2,564.5 478.1,572.2 475.9,580.3 474.0,588.5 472.2,596.7 470.3,604.9" fill="none" stroke="#e2657f" stroke-width="1.3" stroke-linejoin="round" stroke-linecap="round" /><polyline points="570.7,508.1 578.5,505.7 586.2,503.4 594.1,501.6 602.2,501.6 610.3,501.6 618.4,501.6 626.8,502.0 635.3,502.9 643.9,503.8 652.4,505.3 660.9,507.0 669.4,508.7 677.7,507.6 685.9,506.5 694.2,505.4 702.4,504.3 710.3,502.2 718.1,499.9 720.0,499.3" fill="none" stroke="#e2657f" stroke-width="1.3" stroke-linejoin="round" stroke-linecap="round" /><polyline points="571.5,423.0 578.0,418.1 584.3,412.9 590.5,407.2 596.8,400.9 602.5,394.4 606.7,387.1 610.8,379.8 614.3,371.6 617.8,363.4 624.1,357.9 630.3,352.5 636.6,347.0 644.4,342.3 648.3,340.0" fill="none" stroke="#e2657f" stroke-width="1.3" stroke-linejoin="round" stroke-linecap="round" /><polyline points="681.1,480.5 680.3,472.0 679.4,463.5 678.6,455.0 677.7,446.5 676.8,438.0 677.6,429.6 679.9,421.4 682.0,413.0 683.7,404.5 685.4,396.0 685.3,387.8 684.7,379.7 684.0,371.5 683.4,363.4 682.6,354.9 681.7,346.4 681.1,340.0" fill="none" stroke="#e2657f" stroke-width="1.3" stroke-linejoin="round" stroke-linecap="round" /><polyline points="428.7,530.3 431.8,538.2 434.3,545.9 436.9,553.6 439.8,561.4 442.9,569.1 446.0,576.9 448.4,584.9 450.6,592.9 452.8,600.9 453.9,604.9" fill="none" stroke="#e2657f" stroke-width="1.3" stroke-linejoin="round" stroke-linecap="round" /><polyline points="470.3,574.2 478.3,572.2 486.4,570.2 494.4,568.2 502.5,566.9 510.7,566.3 518.9,565.8 527.1,565.2 534.8,566.7 542.0,570.3 549.2,573.9 556.4,575.6 563.7,571.4 571.0,567.2 578.3,563.0 585.6,558.8 593.6,556.3 601.9,554.2 606.1,553.2" fill="none" stroke="#e2657f" stroke-width="1.3" stroke-linejoin="round" stroke-linecap="round" /><polyline points="641.3,501.6 638.7,509.3 636.1,516.9 632.9,524.4 627.8,531.2 622.7,538.1 617.1,544.1 610.8,549.3 605.9,555.3 605.0,563.7 604.0,572.1 602.0,580.0 599.7,587.6 597.3,595.3 595.0,603.0 594.4,604.9" fill="none" stroke="#e2657f" stroke-width="1.3" stroke-linejoin="round" stroke-linecap="round" /><polyline points="571.1,358.5 578.0,354.1 584.3,347.8 590.5,341.6 592.1,340.0" fill="none" stroke="#e2657f" stroke-width="1.3" stroke-linejoin="round" stroke-linecap="round" /><polyline points="715.0,268.8 723.2,268.1 731.3,267.4 739.5,266.7 747.7,265.9 756.0,265.0 764.2,264.0 772.4,263.0 780.8,262.4 789.2,261.8 797.6,261.2 806.0,260.7 814.5,260.0 823.2,259.1 831.8,258.3 840.1,258.1 848.2,258.1 856.4,258.1 864.6,258.5 873.1,260.0 881.5,261.6 889.9,261.3 898.3,261.0 906.7,260.8 915.1,260.5 917.2,260.4" fill="none" stroke="#e2657f" stroke-width="1.3" stroke-linejoin="round" stroke-linecap="round" /><polyline points="912.5,202.1 909.0,209.9 905.6,217.7 902.3,225.5 899.4,233.1 896.5,240.7 896.0,248.9 896.3,257.3 896.6,265.7 896.9,274.1 897.5,282.4 898.5,290.5 899.6,298.7 900.6,306.8 902.8,314.9 905.0,322.9 907.2,331.0 908.9,338.9 910.5,346.9 912.1,354.8 912.2,363.3 911.7,371.9 911.3,380.6 908.9,388.4 906.5,396.2 905.3,400.1" fill="none" stroke="#e2657f" stroke-width="1.3" stroke-linejoin="round" stroke-linecap="round" /><polyline points="779.2,202.1 776.7,209.7 774.1,217.4 771.6,225.0 769.3,232.7 767.7,240.6 766.2,248.6 765.4,256.9 766.2,261.6" fill="none" stroke="#e2657f" stroke-width="1.3" stroke-linejoin="round" stroke-linecap="round" /><polyline points="715.0,249.7 717.4,257.6 719.7,265.6 722.1,273.5 724.5,281.9 726.9,290.2 723.7,297.8 720.6,305.4 717.4,313.0 715.0,318.7" fill="none" stroke="#e2657f" stroke-width="1.3" stroke-linejoin="round" stroke-linecap="round" /><polyline points="786.4,371.1 793.5,375.4 800.7,379.7 807.8,383.9 815.0,388.2 822.1,392.5 830.1,391.8 838.2,391.0 846.2,390.3 854.1,388.0 861.9,385.2 869.7,382.4 877.6,379.6 885.5,377.7 893.4,376.6 901.3,375.5 909.3,374.5 917.2,373.4 925.1,375.0 933.1,376.6 941.0,378.2 948.3,381.9 955.6,385.5 963.0,389.2 970.8,391.3 978.7,392.9 986.6,394.4 994.5,396.0 1002.6,397.4 1010.9,398.0 1019.2,398.6 1027.5,399.2 1035.8,399.8 1040.0,400.1" fill="none" stroke="#e2657f" stroke-width="1.3" stroke-linejoin="round" stroke-linecap="round" /><polyline points="898.2,395.0 894.5,402.3 890.9,409.6 887.2,417.0 884.8,424.9 882.8,433.1 880.7,441.2 878.9,449.4 877.6,457.6 876.3,465.9 875.0,474.2 873.5,482.4 871.6,490.7 869.7,498.9 867.8,507.1 865.4,514.9 862.9,522.5 860.3,530.2 857.8,537.8 856.1,545.9 854.4,554.1 852.7,562.2 851.9,570.4 852.2,578.6 852.4,586.7 852.7,594.9 852.9,603.1 853.0,605.1" fill="none" stroke="#e2657f" stroke-width="1.3" stroke-linejoin="round" stroke-linecap="round" /><polyline points="715.0,506.8 722.1,511.5 729.3,516.3 737.1,518.9 744.9,521.5 752.5,524.5 759.6,528.5 766.8,532.4 773.7,536.8 780.0,542.3 786.4,547.9 792.6,553.5 798.4,559.3 804.3,565.2 810.2,571.1 814.9,578.2 819.7,585.4 824.4,592.5 827.6,600.9 829.2,605.1" fill="none" stroke="#e2657f" stroke-width="1.3" stroke-linejoin="round" stroke-linecap="round" /><polyline points="1033.8,402.1 1027.2,407.2 1020.6,412.4 1014.0,417.5 1008.6,423.7 1003.5,430.3 998.4,436.9 992.9,443.5 987.2,450.2 981.5,456.9 976.7,464.0 972.0,471.2 967.2,478.3 967.2,486.7 967.2,495.2 968.6,503.7 970.6,512.3 973.0,520.6 976.8,528.2 980.5,535.9 983.0,543.9 985.0,552.0 987.1,560.2 988.9,568.4 989.9,576.9 991.0,585.3 989.1,593.2 987.2,601.1 986.2,605.1" fill="none" stroke="#e2657f" stroke-width="1.3" stroke-linejoin="round" stroke-linecap="round" /><polyline points="976.7,497.3 968.8,498.9 960.8,500.5 952.9,502.1 944.6,503.2 936.3,504.4 929.6,510.1 922.9,515.8 916.6,521.7 910.5,527.8 904.5,533.9 900.4,541.2 896.9,549.0 893.4,556.8 892.9,565.2 892.4,573.7 888.7,581.4 883.9,588.8 878.8,596.1 873.4,603.3 872.0,605.1" fill="none" stroke="#e2657f" stroke-width="1.3" stroke-linejoin="round" stroke-linecap="round" /><polyline points="929.1,605.1 937.0,602.5 945.0,599.8 952.9,597.2 961.3,596.7 969.7,596.1 978.1,595.6 986.5,595.0 994.5,592.5 1002.5,589.3 1010.4,586.1 1018.2,583.4 1026.0,580.8 1033.8,578.2" fill="none" stroke="#e2657f" stroke-width="1.3" stroke-linejoin="round" stroke-linecap="round" /><polyline points="715.0,406.9 723.7,406.0 732.3,405.2 740.8,404.2 748.7,403.0 756.6,401.8 764.6,399.9 772.5,396.0 774.5,395.0" fill="none" stroke="#e2657f" stroke-width="1.3" stroke-linejoin="round" stroke-linecap="round" /><polyline points="715.0,492.5 723.7,492.1 732.3,491.7 741.0,491.5 749.6,491.9 758.3,492.3 762.6,492.5" fill="none" stroke="#e2657f" stroke-width="1.3" stroke-linejoin="round" stroke-linecap="round" /><polyline points="715.0,578.2 722.6,581.0 730.2,583.9 737.5,587.5 744.4,591.8 751.4,596.1 757.9,601.2 762.6,605.1" fill="none" stroke="#e2657f" stroke-width="1.3" stroke-linejoin="round" stroke-linecap="round" /><polyline points="496.5,328.3 498.4,320.2 499.8,312.3 501.3,304.4 502.9,296.3 504.6,288.1 506.3,279.8 507.8,271.5 508.8,263.2 508.0,254.6 507.1,246.1 506.9,237.5 507.3,229.0 507.7,220.5 508.2,212.2 508.9,204.1 509.0,202.0" fill="none" stroke="#e2657f" stroke-width="1.3" stroke-linejoin="round" stroke-linecap="round" /><polyline points="459.8,202.0 463.3,210.2 466.8,218.4 465.1,226.9 463.5,235.4 463.0,243.8 466.1,251.6 469.2,259.4 470.2,267.0 465.1,273.8 460.0,280.6 455.2,287.3 450.5,294.0 445.8,300.7 441.1,307.4 443.9,314.9 446.7,322.4 447.6,328.3" fill="none" stroke="#e2657f" stroke-width="1.3" stroke-linejoin="round" stroke-linecap="round" /><polyline points="571.5,347.4 577.9,342.2 584.6,336.9 591.3,331.5 598.0,326.2 600.1,317.8 602.2,309.5 607.7,303.4 614.4,298.1 619.6,291.8 624.8,285.6 631.0,279.8 637.6,274.2 642.0,267.9 640.1,259.4 638.3,251.0 636.2,242.9 634.0,235.0 631.9,227.1 632.8,219.6 636.6,212.6 640.5,205.5 642.5,202.0" fill="none" stroke="#e2657f" stroke-width="1.3" stroke-linejoin="round" stroke-linecap="round" /><polyline points="612.1,380.1 618.9,375.8 625.7,371.5 632.6,367.4 639.8,363.8 647.0,360.2 654.2,356.6 660.9,351.9 667.6,347.2 674.3,342.5 681.2,337.9 688.2,333.2 694.0,327.5 698.7,320.8 703.4,314.1 708.1,307.4 712.4,300.2 716.8,293.0 721.1,285.8 721.5,277.6 720.7,269.1 719.8,260.6 716.4,252.9 713.0,245.3 708.9,238.1 702.7,232.7 696.4,227.2 690.5,221.3 685.9,214.3 681.2,207.3 677.7,202.0" fill="none" stroke="#e2657f" stroke-width="1.3" stroke-linejoin="round" stroke-linecap="round" /><polyline points="691.7,330.9 690.4,338.9 689.0,347.0 687.7,355.0 686.6,363.3 685.7,371.8 684.9,380.3 684.1,388.8 683.2,397.3 682.4,405.8" fill="none" stroke="#e2657f" stroke-width="1.3" stroke-linejoin="round" stroke-linecap="round" /><polyline points="394.3,531.6 393.5,540.1 392.6,548.6 391.8,557.1 393.9,565.5 396.0,573.8 394.9,581.9 392.7,590.0 390.5,598.1 389.4,602.1" fill="none" stroke="#e2657f" stroke-width="1.3" stroke-linejoin="round" stroke-linecap="round" /><polyline points="571.5,507.3 579.5,503.7 587.7,500.2 595.7,499.3 603.8,499.3 611.8,499.3 619.8,499.6 628.0,500.9 636.1,502.1 644.2,503.4 653.0,505.1 662.0,505.4 670.5,503.7 679.0,502.0 687.2,500.5 695.4,499.0 703.6,497.5 711.8,496.1 720.0,494.6" fill="none" stroke="#858585" stroke-width="1.275" stroke-linejoin="round" stroke-linecap="round" /><polyline points="572.0,456.9 580.1,457.5 588.7,459.2 597.2,460.9 605.8,462.7 614.3,464.4 622.8,466.1 630.8,468.2 638.5,470.6 646.3,472.9 654.3,475.0 662.3,477.0 670.4,479.0 678.3,481.4 686.0,484.8 693.7,488.2 701.0,492.1 707.9,496.4 714.8,500.7 720.0,504.0" fill="none" stroke="#858585" stroke-width="1.02" stroke-linejoin="round" stroke-linecap="round" /><polyline points="551.7,531.0 552.3,539.1 552.8,547.4 553.4,555.6 553.9,563.9 554.5,572.1 555.1,580.3 555.7,588.5 556.3,596.7 556.9,604.9" fill="none" stroke="#858585" stroke-width="1.02" stroke-linejoin="round" stroke-linecap="round" /><polyline points="570.1,424.9 578.0,422.0 586.2,421.4 594.4,420.8 602.6,420.2 610.8,419.6 619.3,417.9 627.8,416.3 636.3,415.0 644.6,415.0 653.0,415.0 661.0,415.7 669.1,416.3 677.1,417.0 684.8,418.9 692.2,422.0 699.6,425.1 707.0,428.2 714.4,431.4 720.0,433.7" fill="none" stroke="#858585" stroke-width="1.02" stroke-linejoin="round" stroke-linecap="round" /><polyline points="424.1,530.7 427.4,538.1 430.5,545.6 433.6,553.1 436.7,560.6 439.8,568.4 442.9,576.2 446.1,584.0 449.2,591.8 451.5,597.7" fill="none" stroke="#858585" stroke-width="1.02" stroke-linejoin="round" stroke-linecap="round" /><polyline points="587.4,412.6 592.9,406.5 598.4,400.5 603.9,394.4 609.4,388.3 612.2,379.8 616.4,372.6 622.9,367.5 629.4,362.5 636.1,357.9 643.6,354.8 651.1,351.7 658.6,348.6 666.6,345.4 674.9,342.3 681.1,340.0" fill="none" stroke="#858585" stroke-width="1.02" stroke-linejoin="round" stroke-linecap="round" /><polyline points="657.7,480.5 657.7,488.6 657.7,496.6 657.7,504.7 658.0,512.8 658.6,520.9 659.2,529.0 659.8,537.1 661.2,545.3 662.9,553.6 664.5,561.8 666.2,570.1 668.8,578.0 672.3,585.7 675.8,593.4 679.3,601.1 681.1,604.9" fill="none" stroke="#858585" stroke-width="0.85" stroke-linejoin="round" stroke-linecap="round" /><polyline points="571.3,506.3 573.3,506.3" fill="none" stroke="#858585" stroke-width="0.85" stroke-linejoin="round" stroke-linecap="round" /><polyline points="554.6,576.6 561.6,571.9 568.7,567.2 575.7,562.5 582.7,557.8 589.7,553.7 596.8,549.6 603.8,545.6 610.8,541.5 618.5,538.2 626.2,534.9 634.0,531.5 641.7,528.2 647.1,522.1 651.8,515.1 656.5,508.1 657.7,506.3" fill="none" stroke="#858585" stroke-width="0.85" stroke-linejoin="round" stroke-linecap="round" /><polyline points="435.1,604.9 442.9,602.8 450.7,600.6 458.6,598.5 466.4,596.4 474.6,595.7 483.1,596.6 491.6,597.5 499.6,599.5 507.4,601.9 515.1,604.3 517.1,604.9" fill="none" stroke="#858585" stroke-width="0.85" stroke-linejoin="round" stroke-linecap="round" /><polyline points="554.6,576.6 547.4,580.2 540.2,583.8 533.0,587.4 527.0,593.3 521.3,599.9 517.1,604.9" fill="none" stroke="#858585" stroke-width="0.85" stroke-linejoin="round" stroke-linecap="round" /><polyline points="927.9,202.1 926.2,210.2 924.6,218.3 922.9,226.4 921.3,234.5 919.6,242.6 919.1,251.2 918.6,259.7 919.0,268.0 920.1,276.1 921.2,284.2 922.3,292.2 923.3,300.4 924.3,308.5 925.3,316.7 924.4,324.6 922.8,332.6 921.2,340.5 921.7,348.4 922.9,356.4 924.1,364.3 927.2,372.0 931.0,379.6 935.1,387.2 939.8,394.6 943.4,400.1" fill="none" stroke="#858585" stroke-width="1.02" stroke-linejoin="round" stroke-linecap="round" /><polyline points="715.0,266.4 723.7,266.0 732.3,265.5 740.8,264.7 749.0,262.7 757.1,260.6 765.3,258.6 768.8,252.2 770.9,244.4 773.0,236.6 775.0,228.7 777.0,220.5 779.1,212.3 781.1,204.1 781.6,202.1" fill="none" stroke="#858585" stroke-width="1.02" stroke-linejoin="round" stroke-linecap="round" /><polyline points="848.2,246.2 844.0,253.0 839.8,259.9 833.0,264.5 825.4,268.2 819.4,273.1 818.0,281.3 821.2,287.1 829.0,290.6 836.8,294.0 843.9,298.8 850.9,304.0 857.8,309.2 860.5,317.4 863.2,325.5 865.9,333.7 869.9,341.3 875.0,348.2 880.2,355.1 886.9,360.4 894.0,365.1 895.8,372.6 895.8,380.9 895.8,383.0" fill="none" stroke="#858585" stroke-width="0.85" stroke-linejoin="round" stroke-linecap="round" /><polyline points="922.0,262.8 930.4,265.5 938.9,268.1 947.0,271.1 954.9,273.1 962.8,271.5 970.8,270.0 978.4,267.4 985.2,261.9 992.6,258.6 1000.5,257.4 1008.4,256.3 1016.7,255.9 1025.2,256.4 1033.8,256.9" fill="none" stroke="#858585" stroke-width="0.85" stroke-linejoin="round" stroke-linecap="round" /><polyline points="715.0,325.9 723.7,326.7 732.3,327.6 740.9,327.8 749.4,326.3 757.8,324.7 766.0,325.0 774.1,325.4 782.3,325.7 788.8,321.9 793.5,314.0 798.3,307.2 803.0,300.4 807.8,293.6 812.6,286.2 817.3,278.3" fill="none" stroke="#858585" stroke-width="0.85" stroke-linejoin="round" stroke-linecap="round" /><polyline points="786.4,325.9 787.3,334.6 788.1,343.2 789.9,351.5 794.1,358.9 798.3,366.3 803.6,372.7 808.9,379.0 814.5,384.9 820.1,390.6 824.4,394.9" fill="none" stroke="#858585" stroke-width="0.85" stroke-linejoin="round" stroke-linecap="round" /><polyline points="743.6,400.1 750.9,396.6 758.1,393.1 765.4,389.7 772.7,386.2 779.7,381.4 786.6,376.3 793.5,371.1 785.3,370.1 777.1,369.1 768.9,368.1 760.7,367.1 752.5,366.1 744.3,365.1 736.1,364.1 730.2,359.1 725.1,352.8 720.1,346.4 715.0,340.1" fill="none" stroke="#858585" stroke-width="0.85" stroke-linejoin="round" stroke-linecap="round" /><polyline points="824.4,394.9 832.3,392.6 840.1,390.4 848.0,388.1 855.8,385.9 863.8,384.9 871.8,384.5 879.8,384.0 887.8,383.5 895.8,383.0 904.0,381.6 912.1,380.3 920.3,378.9 928.5,379.2 936.6,381.2 944.8,383.3 952.9,385.3 960.8,383.7 968.8,382.2 976.7,380.6 984.3,376.8 992.0,373.0 999.8,372.4 1007.8,374.9 1015.8,377.4 1023.8,379.9 1031.8,382.4 1033.8,383.0" fill="none" stroke="#858585" stroke-width="0.85" stroke-linejoin="round" stroke-linecap="round" /><polyline points="1024.3,314.0 1031.9,311.1 1033.8,310.4" fill="none" stroke="#858585" stroke-width="0.85" stroke-linejoin="round" stroke-linecap="round" /><polyline points="869.7,412.8 877.9,414.1 886.2,415.4 894.4,416.6 902.1,418.9 908.0,424.3 914.5,429.0 922.7,431.7 930.1,435.9 936.8,441.6 943.4,447.3 948.2,454.0 952.9,460.7 958.2,466.9 963.9,472.6 969.6,478.3 975.3,484.0 978.5,492.5 979.1,494.9" fill="none" stroke="#858585" stroke-width="0.85" stroke-linejoin="round" stroke-linecap="round" /><polyline points="943.4,395.0 948.2,402.1 952.9,409.3 957.7,416.4 961.1,423.9 964.5,431.4 967.9,438.9 970.8,446.6 973.2,454.5 975.5,462.4 977.2,470.5 978.2,478.6 979.3,486.8 980.3,494.9" fill="none" stroke="#858585" stroke-width="0.85" stroke-linejoin="round" stroke-linecap="round" /><polyline points="1033.8,425.9 1028.4,432.7 1023.0,439.4 1017.9,446.0 1012.7,452.6 1007.6,459.2 1001.6,465.3 995.5,471.3 989.9,477.8 985.6,485.4 981.4,493.0 980.3,494.9" fill="none" stroke="#858585" stroke-width="0.85" stroke-linejoin="round" stroke-linecap="round" /><polyline points="980.3,494.9 972.5,498.3 964.6,501.7 956.8,505.1 949.2,508.4 941.8,511.6 934.6,515.3 927.6,520.5 920.7,525.6 914.6,531.5 909.5,538.1 904.4,544.7 899.6,551.6 895.9,559.2 892.1,566.8 891.1,574.9 891.1,583.2 894.3,590.7 898.7,597.9 903.0,605.1" fill="none" stroke="#858585" stroke-width="1.02" stroke-linejoin="round" stroke-linecap="round" /><polyline points="980.3,494.9 983.6,502.5 986.9,510.2 990.3,517.9 993.8,525.7 997.2,533.5 998.8,541.8 999.8,550.4 1001.8,558.4 1007.1,564.7 1012.4,571.1 1010.0,580.6 1001.7,581.8 993.4,583.0 985.0,584.1 976.7,585.3 968.5,588.0 962.4,592.2 962.4,600.8 962.4,605.1" fill="none" stroke="#858585" stroke-width="0.85" stroke-linejoin="round" stroke-linecap="round" /><polyline points="980.3,494.9 979.4,503.2 978.5,511.6 977.6,519.9 976.7,528.2 975.7,536.8 974.8,545.4 975.0,553.7 976.5,561.7 978.0,569.8 977.4,577.2 970.8,583.0 964.1,588.7 962.4,590.1" fill="none" stroke="#858585" stroke-width="0.85" stroke-linejoin="round" stroke-linecap="round" /><polyline points="869.7,412.8 869.5,421.1 869.2,429.5 869.0,437.8 868.7,446.2 868.5,454.5 875.0,459.2 881.5,464.0 884.9,471.5 888.3,479.0 891.7,486.5 894.6,494.4 897.0,502.6 900.9,509.9 906.3,516.0 911.8,522.1 917.2,528.2 924.2,532.7 931.2,537.1 938.2,541.6 943.8,546.9 945.2,555.0 946.7,563.0 948.2,571.1 953.4,578.0 958.5,584.9 962.4,590.1" fill="none" stroke="#858585" stroke-width="0.85" stroke-linejoin="round" stroke-linecap="round" /><polyline points="715.0,425.9 721.3,431.0 727.7,436.1 734.0,441.2 740.8,445.5 748.9,447.7 756.9,449.9 765.0,452.1 771.7,456.6 778.4,461.0 785.1,465.5 791.8,470.0 798.9,474.7 806.0,479.4 813.1,484.2 810.6,491.1 803.6,496.0 795.1,498.1 786.8,499.3 779.0,497.5 771.2,495.8 763.1,496.1 754.9,498.5 747.1,497.3 740.0,492.6 732.1,490.0 723.6,489.5 715.0,489.0" fill="none" stroke="#858585" stroke-width="0.85" stroke-linejoin="round" stroke-linecap="round" /><polyline points="715.0,516.3 722.6,519.2 730.2,522.1 737.8,525.4 745.5,529.2 753.1,533.0 758.9,538.8 764.8,544.7 770.6,550.5 776.5,556.4 782.3,562.3 788.2,568.2 793.5,574.7 798.2,581.8 803.0,588.9 808.1,596.1 813.5,603.3 814.9,605.1" fill="none" stroke="#858585" stroke-width="1.02" stroke-linejoin="round" stroke-linecap="round" /><polyline points="895.8,490.2 902.9,486.2 910.1,482.3 917.2,478.3 925.1,481.4 933.1,484.2 941.0,486.6 948.9,489.0 957.2,490.6 965.9,491.5 974.5,492.3 976.7,492.5" fill="none" stroke="#858585" stroke-width="0.85" stroke-linejoin="round" stroke-linecap="round" /><polyline points="838.7,521.1 843.5,527.8 848.2,534.5 852.4,541.4 856.1,548.7 859.8,556.0 862.9,563.5 864.5,571.4 866.1,579.3 866.8,587.3 864.9,595.2 863.0,603.1 862.5,605.1" fill="none" stroke="#858585" stroke-width="0.85" stroke-linejoin="round" stroke-linecap="round" /><polyline points="895.8,502.1 891.7,509.6 887.6,517.0 883.5,524.5 879.9,532.0 876.8,539.6 873.6,547.3 870.5,554.9 867.9,562.8 865.5,570.7 863.1,578.6 862.5,580.6" fill="none" stroke="#858585" stroke-width="0.85" stroke-linejoin="round" stroke-linecap="round" /><polyline points="779.2,530.6 787.4,529.2 793.5,530.3 793.5,538.8 793.5,547.3 794.8,555.5 796.1,563.8 797.3,572.0 799.4,580.0 803.8,587.2 808.3,594.3 812.7,601.5 814.9,605.1" fill="none" stroke="#858585" stroke-width="0.85" stroke-linejoin="round" stroke-linecap="round" /><polyline points="1033.8,542.5 1029.0,549.2 1024.3,555.9 1019.5,562.9 1014.8,570.3 1011.2,575.8" fill="none" stroke="#858585" stroke-width="0.85" stroke-linejoin="round" stroke-linecap="round" /><polyline points="1033.8,525.9 1026.0,523.3 1018.2,520.7 1010.4,518.0 1002.2,515.3 998.1,514.0" fill="none" stroke="#858585" stroke-width="0.85" stroke-linejoin="round" stroke-linecap="round" /><polyline points="1033.8,485.4 1025.2,483.5 1016.7,481.6 1008.2,481.3 999.9,482.4 992.4,485.6 985.5,490.9 980.3,494.9" fill="none" stroke="#858585" stroke-width="0.85" stroke-linejoin="round" stroke-linecap="round" /><polyline points="438.7,312.1 442.8,305.1 446.9,298.1 451.0,291.0 455.1,284.0 462.1,279.3 469.2,274.6 477.4,274.6 485.6,274.6 493.3,278.0 500.9,281.4 508.6,283.1 516.2,279.6 523.8,276.1 531.4,272.6 539.3,269.7 548.1,268.5 554.7,267.6" fill="none" stroke="#858585" stroke-width="0.85" stroke-linejoin="round" stroke-linecap="round" /><polyline points="466.8,202.0 466.8,210.4 466.8,218.8 466.8,227.1 466.8,235.5 467.2,243.9 468.9,252.5 470.6,261.0 468.8,268.4 463.3,274.6 457.8,280.9 455.1,284.0" fill="none" stroke="#858585" stroke-width="0.85" stroke-linejoin="round" stroke-linecap="round" /><polyline points="438.7,312.1 443.9,318.4 449.2,324.6 453.8,329.0" fill="none" stroke="#858585" stroke-width="0.85" stroke-linejoin="round" stroke-linecap="round" /><polyline points="488.3,329.2 495.5,324.9 498.6,317.4 500.3,308.9 502.0,300.4 504.4,292.2 506.7,284.0" fill="none" stroke="#858585" stroke-width="0.85" stroke-linejoin="round" stroke-linecap="round" /><polyline points="570.6,346.5 576.4,340.8 581.4,334.3 585.6,327.0 590.2,319.9 596.5,313.7 604.5,312.1 613.0,312.1 621.6,312.1 629.9,313.0 638.0,314.3 646.1,315.5 654.2,316.8 661.7,319.6 669.2,322.4 677.2,324.7 685.7,326.6 694.1,328.5" fill="none" stroke="#858585" stroke-width="1.02" stroke-linejoin="round" stroke-linecap="round" /><polyline points="694.1,328.5 688.1,334.5 682.2,340.4 675.9,346.0 668.7,350.3 661.4,354.7 654.2,359.0 646.7,362.7 639.2,366.5 631.7,370.2 624.1,374.0 616.1,378.1 612.7,384.2 613.8,392.4 611.4,399.5 605.5,405.4 599.5,411.3 598.0,412.8" fill="none" stroke="#858585" stroke-width="1.02" stroke-linejoin="round" stroke-linecap="round" /><polyline points="694.1,328.5 701.1,324.6 708.2,320.7 715.2,316.8 718.8,309.6 722.4,302.4 726.0,295.2 725.4,287.4 723.3,279.4 721.3,271.3 721.8,265.3 729.9,265.3 738.0,265.3 740.0,265.3" fill="none" stroke="#858585" stroke-width="0.85" stroke-linejoin="round" stroke-linecap="round" /><polyline points="694.1,328.5 698.5,335.7 702.9,342.9 707.3,350.0 711.7,357.2 712.2,365.4 711.3,373.9 710.5,382.4 712.9,390.6 715.2,398.8 723.5,399.6 731.7,400.3 740.0,401.1" fill="none" stroke="#858585" stroke-width="0.85" stroke-linejoin="round" stroke-linecap="round" /><polyline points="694.1,328.5 701.3,332.4 708.4,336.2 715.6,340.1 722.7,343.9 728.4,349.6 733.5,355.9 738.7,362.1 740.0,363.7" fill="none" stroke="#858585" stroke-width="0.85" stroke-linejoin="round" stroke-linecap="round" /><polyline points="677.7,202.0 682.2,208.7 686.6,215.4 691.1,222.1 695.5,228.8 700.0,235.5 706.4,240.7 713.4,245.3 717.3,252.1 720.1,259.7 722.2,265.3" fill="none" stroke="#858585" stroke-width="0.85" stroke-linejoin="round" stroke-linecap="round" /><polyline points="319.2,495.0 328.2,497.0" fill="none" stroke="#858585" stroke-width="1.275" stroke-linejoin="round" stroke-linecap="round" /><polyline points="426.9,530.2 430.8,537.6 433.9,545.4 437.0,553.2 440.0,561.0 442.7,568.7 445.5,576.4 448.2,584.1 450.3,589.9" fill="none" stroke="#858585" stroke-width="1.02" stroke-linejoin="round" stroke-linecap="round" /><ellipse cx="483" cy="360" rx="18.7" ry="9.35" fill="#dad7d1" opacity=".7"/><ellipse cx="443" cy="352" rx="4.25" ry="5.1" fill="#dad7d1" opacity=".7"/><ellipse cx="478" cy="340" rx="4.25" ry="3.4" fill="#dad7d1" opacity=".7"/><ellipse cx="406" cy="422" rx="5.1" ry="4.25" fill="#dad7d1" opacity=".7"/><ellipse cx="372" cy="458" rx="11.05" ry="7.65" fill="#dad7d1" opacity=".7"/><ellipse cx="420" cy="506" rx="17" ry="6.8" fill="#dad7d1" opacity=".7"/><ellipse cx="531" cy="455" rx="5.95" ry="6.8" fill="#dad7d1" opacity=".7"/><ellipse cx="541" cy="373" rx="6.8" ry="3.4" fill="#dad7d1" opacity=".7"/><ellipse cx="536" cy="405" rx="3.4" ry="4.25" fill="#dad7d1" opacity=".7"/><ellipse cx="396" cy="463" rx="4.25" ry="2.55" fill="#dad7d1" opacity=".7"/><ellipse cx="441" cy="471" rx="3.4" ry="2.55" fill="#dad7d1" opacity=".7"/><ellipse cx="427" cy="441" rx="3.4" ry="2.55" fill="#dad7d1" opacity=".7"/><ellipse cx="385" cy="475" rx="3.4" ry="3.4" fill="#dad7d1" opacity=".7"/><ellipse cx="455" cy="500" rx="4.25" ry="2.55" fill="#dad7d1" opacity=".7"/><ellipse cx="447.7" cy="403.8" rx="7.0" ry="3.9" fill="#b5d7e4" opacity=".75"/><ellipse cx="438.9" cy="417.8" rx="4.9" ry="3.2" fill="#b5d7e4" opacity=".75"/><ellipse cx="495.1" cy="403.8" rx="6.3" ry="4.9" fill="#b5d7e4" opacity=".75"/><ellipse cx="512.7" cy="421.4" rx="6.0" ry="7.7" fill="#b5d7e4" opacity=".75"/><ellipse cx="456.5" cy="463.5" rx="5.6" ry="3.9" fill="#b5d7e4" opacity=".75"/><ellipse cx="467.0" cy="430.1" rx="3.9" ry="2.1" fill="#b5d7e4" opacity=".75"/><ellipse cx="505.7" cy="396.8" rx="3.5" ry="2.5" fill="#b5d7e4" opacity=".75"/><ellipse cx="481.1" cy="403.8" rx="2.5" ry="1.8" fill="#b5d7e4" opacity=".75"/><polyline points="453.0,380.9 448.5,385.4 443.9,390.0 439.3,394.6 434.6,399.3 430.0,403.9 425.8,409.0 422.0,414.3 418.1,419.6 414.3,424.9 410.4,430.1 406.4,435.4 402.2,440.3 397.5,444.5 392.7,448.8 388.0,453.0 383.5,457.5 378.9,462.0 378.3,467.9 379.6,474.5 380.9,481.1 383.3,487.0 385.6,492.8 388.0,498.7 391.7,503.9 395.4,509.2 399.1,514.5 400.3,516.2" fill="none" stroke="#e2657f" stroke-width="1.3" stroke-linejoin="round" stroke-linecap="round" /><polyline points="421.4,388.0 418.5,393.8 415.5,399.7 412.6,405.5 408.9,410.3 405.2,415.0 401.5,419.8 397.6,424.5 393.5,429.2 389.4,433.8 386.5,439.4 384.2,445.5 382.7,449.5" fill="none" stroke="#e2657f" stroke-width="1.3" stroke-linejoin="round" stroke-linecap="round" /><polyline points="438.9,330.0 440.2,336.6 441.5,343.2 441.6,349.5 439.3,355.4 437.0,361.2 435.0,367.3 433.6,373.9 432.3,380.5 435.4,385.6 440.6,390.0 442.4,391.5" fill="none" stroke="#e2657f" stroke-width="1.3" stroke-linejoin="round" stroke-linecap="round" /><polyline points="379.2,463.5 385.4,462.6 391.5,461.8 397.6,460.9 403.8,460.0 409.9,459.6 416.1,459.1 422.2,458.7 428.4,458.3 434.5,457.6 440.7,457.0 446.9,456.3 453.0,455.6 459.1,455.0 465.1,454.4 471.2,453.8 477.3,453.2 483.4,452.7 489.5,452.3 495.5,451.9 501.6,451.5 508.0,451.0 514.7,450.2 521.5,449.5" fill="none" stroke="#e2657f" stroke-width="1.3" stroke-linejoin="round" stroke-linecap="round" /><polyline points="488.1,377.4 490.8,383.1 493.4,388.9 496.1,394.6 498.7,400.3 499.3,406.9 500.0,413.4 501.0,419.8 502.8,425.6 504.5,431.5 507.3,437.0 511.9,441.7 516.6,446.4 519.9,451.6 520.4,457.9 521.0,464.2 521.5,470.5 522.2,477.1 522.8,483.7 524.3,489.9 527.5,495.1 530.6,500.4 533.8,505.7 536.6,511.3 539.5,516.9 542.3,522.5 545.2,528.0 546.1,529.9" fill="none" stroke="#e2657f" stroke-width="1.3" stroke-linejoin="round" stroke-linecap="round" /><polyline points="507.4,380.9 513.4,383.6 519.3,386.2 524.9,389.4 529.7,393.7 534.4,398.1 539.2,402.4 544.3,406.4 549.6,410.4 554.9,414.3 560.6,417.0 566.2,419.6 570.0,421.4" fill="none" stroke="#e2657f" stroke-width="1.3" stroke-linejoin="round" stroke-linecap="round" /><polyline points="546.1,379.2 546.1,385.5 546.1,391.9 546.1,398.2 544.5,404.1 542.1,409.9 539.7,415.6 537.3,421.4 534.9,427.1 532.5,432.9 530.1,438.6 527.9,444.3 526.0,450.1 524.0,455.8 522.1,461.6 519.9,467.4 517.6,473.3 515.3,479.1 511.6,484.3 507.3,489.1 503.0,493.9 498.7,498.7 497.4,505.3 496.0,511.8 494.8,518.5 494.0,525.3 493.4,529.9" fill="none" stroke="#e2657f" stroke-width="1.3" stroke-linejoin="round" stroke-linecap="round" /><polyline points="382.7,505.7 388.6,503.4 394.4,501.0 400.3,498.7 406.9,500.0 413.4,501.3 419.4,500.9 424.2,497.1 429.0,493.2 433.8,489.4 438.4,485.1 442.9,480.6 447.5,476.0 452.0,471.5 456.5,467.0 461.8,463.8 467.0,460.5 472.3,457.3 477.5,454.1 479.3,453.0" fill="none" stroke="#e2657f" stroke-width="1.3" stroke-linejoin="round" stroke-linecap="round" /><polyline points="330.0,505.7 335.9,508.0 341.7,510.4 347.6,512.7 353.7,513.5 359.7,514.3 365.8,515.1 371.9,515.9 378.0,517.0 384.1,518.2 390.1,519.5 396.2,520.7 402.3,521.6 408.3,522.0 414.4,522.4 420.4,522.8 426.4,523.2 432.5,523.0 438.6,522.5 444.8,522.1 450.9,521.6 457.1,520.9 463.3,519.9 469.5,519.0 475.7,518.1 481.9,517.1 488.1,516.2 494.3,515.9 500.5,515.6 506.7,515.3 512.9,515.0 519.2,514.7 525.3,514.4 531.4,514.2 537.5,514.0 543.6,513.7 549.7,513.5 555.8,513.2 561.9,513.0 568.0,512.8 570.0,512.7" fill="none" stroke="#e2657f" stroke-width="1.3" stroke-linejoin="round" stroke-linecap="round" /><polyline points="421.4,505.7 424.4,511.7 427.4,517.7 430.7,523.1 434.2,528.2 435.4,529.9" fill="none" stroke="#e2657f" stroke-width="1.3" stroke-linejoin="round" stroke-linecap="round" /><polyline points="526.8,447.7 532.0,444.4 537.3,441.1 542.6,437.8 547.8,434.7 553.1,431.5 558.4,428.4 564.2,424.9 570.0,421.4" fill="none" stroke="#e2657f" stroke-width="1.3" stroke-linejoin="round" stroke-linecap="round" /><polyline points="523.3,380.9 528.5,377.2 533.8,373.6 539.0,369.9 544.3,366.2 549.6,362.5 554.9,358.9 560.1,355.1 565.0,351.4 570.0,347.6" fill="none" stroke="#e2657f" stroke-width="1.3" stroke-linejoin="round" stroke-linecap="round" /><polyline points="460.0,365.1 462.1,358.8 465.6,354.1 472.0,352.5 478.3,353.0 484.6,354.6 486.7,360.9 487.8,367.2 486.7,373.6 482.3,376.6 476.2,377.9 469.9,377.3 463.5,375.7 461.4,369.3 460.0,365.1" fill="none" stroke="#e2657f" stroke-width="1.3" stroke-linejoin="round" stroke-linecap="round" /><polyline points="474.1,352.0 475.1,345.1 474.7,338.4 471.6,332.1 470.5,330.0" fill="none" stroke="#e2657f" stroke-width="1.3" stroke-linejoin="round" stroke-linecap="round" /><polyline points="488.1,365.1 492.9,369.1 497.8,373.0 502.6,376.9 507.4,380.9" fill="none" stroke="#e2657f" stroke-width="1.3" stroke-linejoin="round" stroke-linecap="round" /><polyline points="460.0,365.1 457.4,371.0 454.8,376.9 453.0,380.9" fill="none" stroke="#e2657f" stroke-width="1.3" stroke-linejoin="round" stroke-linecap="round" /><polyline points="493.4,330.0 491.1,336.0 488.9,342.1 486.7,348.3 484.6,354.6" fill="none" stroke="#e2657f" stroke-width="1.3" stroke-linejoin="round" stroke-linecap="round" /><polyline points="407.3,403.8 408.0,410.4 408.7,417.0 408.0,423.1 404.7,428.4 401.4,433.6 397.4,438.9 393.0,444.2 388.4,448.6 383.8,452.6 379.2,456.5 375.7,463.5 378.5,469.2 381.4,474.9 384.2,480.5 387.1,486.2 389.8,492.5 393.6,497.4 399.8,498.8 406.0,500.3 412.2,501.7 414.3,502.2" fill="none" stroke="#858585" stroke-width="1" stroke-linejoin="round" stroke-linecap="round" /><polyline points="467.0,373.9 462.3,378.6 457.7,383.3 453.0,388.0 448.2,392.3 443.4,396.6 438.6,400.9 433.4,404.6 427.4,406.8 421.4,409.1 415.2,410.9 409.1,412.6" fill="none" stroke="#858585" stroke-width="1" stroke-linejoin="round" stroke-linecap="round" /><polyline points="417.8,363.4 424.4,362.7 431.0,362.1 437.6,361.8 444.2,362.5 450.8,363.2 457.0,363.9 463.0,364.6 469.1,366.0 475.2,368.6 481.1,371.8 486.3,376.0 488.1,377.4" fill="none" stroke="#858585" stroke-width="1" stroke-linejoin="round" stroke-linecap="round" /><polyline points="409.1,433.7 415.2,434.9 421.2,436.1 427.3,437.3 433.4,438.5 438.9,441.5 444.2,445.5 449.5,449.5 455.3,451.2 461.2,453.0 467.0,454.7 473.0,453.2 479.1,451.7 485.1,449.2 491.1,446.2 497.2,444.4 503.3,445.1 509.5,445.7 515.6,446.4 519.7,446.8" fill="none" stroke="#858585" stroke-width="1" stroke-linejoin="round" stroke-linecap="round" /><polyline points="389.7,460.0 396.2,460.6 402.6,461.2 409.1,461.8 414.9,464.4 420.7,467.0 426.5,469.6 432.6,471.6 438.9,473.2" fill="none" stroke="#858585" stroke-width="1" stroke-linejoin="round" stroke-linecap="round" /><polyline points="438.9,473.2 434.7,477.7 430.5,482.1 426.3,486.6 422.2,491.6 418.3,496.9 414.3,502.2 415.8,508.2 417.3,514.2 417.8,516.2" fill="none" stroke="#858585" stroke-width="1" stroke-linejoin="round" stroke-linecap="round" /><polyline points="438.9,473.2 445.0,472.5 451.2,471.9 457.4,471.2 463.5,470.5 468.8,466.6 474.1,462.6 478.5,457.8 481.1,451.2" fill="none" stroke="#858585" stroke-width="1" stroke-linejoin="round" stroke-linecap="round" /><polyline points="488.1,377.4 492.6,381.9 497.2,386.5 499.6,392.4 500.9,398.9 502.2,405.5 501.2,411.7 500.3,418.0 499.3,424.2 499.7,430.2 502.7,435.4 505.7,440.7 511.7,443.3 517.7,445.9 519.7,446.8" fill="none" stroke="#858585" stroke-width="1" stroke-linejoin="round" stroke-linecap="round" /><polyline points="511.0,380.9 516.8,383.8 522.7,386.8 528.5,389.7 530.9,395.6 533.2,401.4 535.6,407.3 534.5,413.6 533.4,420.0 532.4,426.3 530.4,432.3 528.1,438.2 525.8,444.0 525.0,446.0" fill="none" stroke="#858585" stroke-width="1" stroke-linejoin="round" stroke-linecap="round" /><polyline points="521.5,446.0 526.8,443.1 532.0,440.2 537.3,437.3 542.4,434.0 547.1,429.9 551.8,425.8 556.8,422.4 562.5,420.5 568.1,418.5 570.0,417.8" fill="none" stroke="#858585" stroke-width="1" stroke-linejoin="round" stroke-linecap="round" /><polyline points="547.8,456.5 553.9,456.5 559.9,456.5 566.0,456.5 570.0,456.5" fill="none" stroke="#858585" stroke-width="1" stroke-linejoin="round" stroke-linecap="round" /><polyline points="525.0,453.0 527.4,458.8 529.8,464.5 532.2,470.3 534.7,476.0 537.3,481.7 539.9,487.4 542.5,493.1 544.9,498.9 546.7,504.7 548.4,510.6 549.6,516.7 549.6,523.3 549.6,529.9" fill="none" stroke="#858585" stroke-width="1" stroke-linejoin="round" stroke-linecap="round" /><polyline points="330.0,495.1 336.3,494.6 342.3,495.7 347.5,499.8 352.8,503.9 359.0,505.6 365.1,507.4 368.7,514.5 375.0,514.8 381.3,515.2 387.7,515.5 394.0,515.9 400.3,516.2 406.3,517.0 412.3,517.7 418.4,518.5 424.4,519.2 430.4,520.0 436.6,520.9 442.8,521.8 448.9,522.7 455.1,523.4 461.3,523.7 467.5,524.0 473.6,524.3 479.8,524.6 486.0,524.9 490.8,521.5 494.7,516.2 498.7,511.0 504.8,509.7 511.0,508.4 517.1,507.0 523.3,505.7 529.4,505.7 535.4,505.7 541.5,505.7 547.6,505.7 553.7,507.1 559.8,509.2 565.9,511.3 570.0,512.7" fill="none" stroke="#858585" stroke-width="1" stroke-linejoin="round" stroke-linecap="round" /><polyline points="414.3,502.2 417.3,508.2 420.4,514.2 423.4,520.1 426.4,526.0 428.4,529.9" fill="none" stroke="#858585" stroke-width="1" stroke-linejoin="round" stroke-linecap="round" /><polyline points="421.4,431.9 421.4,438.2 421.4,444.6 421.4,450.9 419.4,457.0 416.3,463.0 413.0,468.8 409.1,474.1 405.1,479.3 402.6,485.2 400.9,491.3 400.3,493.4" fill="none" stroke="#858585" stroke-width="1" stroke-linejoin="round" stroke-linecap="round" /><polyline points="438.9,442.4 438.3,449.0 437.6,455.6 437.5,462.2 438.3,468.8 438.9,473.2" fill="none" stroke="#858585" stroke-width="1" stroke-linejoin="round" stroke-linecap="round" /><polyline points="523.3,380.9 528.0,376.8 532.6,372.8 537.3,368.7 543.2,365.8 549.0,362.8 554.9,359.9 560.6,357.2 566.2,354.6 570.0,352.8" fill="none" stroke="#858585" stroke-width="1" stroke-linejoin="round" stroke-linecap="round" /><polyline points="467.0,330.0 466.4,336.6 465.7,343.2 465.5,349.8 466.1,356.4 466.8,362.9 467.0,365.1" fill="none" stroke="#858585" stroke-width="1" stroke-linejoin="round" stroke-linecap="round" /><polyline points="479.3,370.4 479.8,364.2 480.3,358.0 480.8,351.7 481.9,345.6 484.2,339.8 486.5,333.9 488.1,330.0" fill="none" stroke="#858585" stroke-width="1" stroke-linejoin="round" stroke-linecap="round" /><polyline points="438.9,361.6 437.6,355.0 436.3,348.5 435.9,342.1 437.4,336.0 438.9,330.0" fill="none" stroke="#858585" stroke-width="1" stroke-linejoin="round" stroke-linecap="round" /><text x="496" y="252.14" font-size="11.5" fill="#8d618b" text-anchor="middle" font-style="italic" stroke="#fff" stroke-width="1.800" stroke-opacity=".7" paint-order="stroke">Noord-Holland</text><text x="593" y="323.64" font-size="11.5" fill="#8d618b" text-anchor="middle" font-style="italic" stroke="#fff" stroke-width="1.800" stroke-opacity=".7" paint-order="stroke">Flevoland</text><text x="760" y="355.14" font-size="11.5" fill="#8d618b" text-anchor="middle" font-style="italic" stroke="#fff" stroke-width="1.800" stroke-opacity=".7" paint-order="stroke">Overijssel</text><text x="809" y="223.14" font-size="11.5" fill="#8d618b" text-anchor="middle" font-style="italic" stroke="#fff" stroke-width="1.800" stroke-opacity=".7" paint-order="stroke">Drenthe</text><text x="530" y="458.64" font-size="11.5" fill="#8d618b" text-anchor="middle" font-style="italic" stroke="#fff" stroke-width="1.800" stroke-opacity=".7" paint-order="stroke">Utrecht</text><text x="670" y="459.14" font-size="11.5" fill="#8d618b" text-anchor="middle" font-style="italic" stroke="#fff" stroke-width="1.800" stroke-opacity=".7" paint-order="stroke">Gelderland</text><text x="403" y="501.64" font-size="11.5" fill="#8d618b" text-anchor="middle" font-style="italic" stroke="#fff" stroke-width="1.800" stroke-opacity=".7" paint-order="stroke">Zuid-Holland</text><text x="580" y="256.46" font-size="11" fill="#6c86b3" text-anchor="middle" font-style="italic" stroke="#fff" stroke-width="1.800" stroke-opacity=".7" paint-order="stroke">IJsselmeer</text><text x="455" y="291.78" font-size="10.5" fill="#222" text-anchor="middle" stroke="#fff" stroke-width="1.800" stroke-opacity=".7" paint-order="stroke">Alkmaar</text><text x="700" y="328.78" font-size="10.5" fill="#222" text-anchor="middle" stroke="#fff" stroke-width="1.800" stroke-opacity=".7" paint-order="stroke">Zwolle</text><text x="846" y="244.78" font-size="10.5" fill="#222" text-anchor="middle" stroke="#fff" stroke-width="1.800" stroke-opacity=".7" paint-order="stroke">Emmen</text><text x="676" y="415.78" font-size="10.5" fill="#222" text-anchor="middle" stroke="#fff" stroke-width="1.800" stroke-opacity=".7" paint-order="stroke">Apeldoorn</text><text x="845" y="414.78" font-size="10.5" fill="#222" text-anchor="middle" stroke="#fff" stroke-width="1.800" stroke-opacity=".7" paint-order="stroke">Enschede</text><text x="406" y="432.78" font-size="10.5" fill="#222" text-anchor="middle" stroke="#fff" stroke-width="1.800" stroke-opacity=".7" paint-order="stroke">Leiden</text><text x="572" y="433.78" font-size="10.5" fill="#222" text-anchor="middle" stroke="#fff" stroke-width="1.800" stroke-opacity=".7" paint-order="stroke">Amersfoort</text><text x="384" y="476.78" font-size="10.5" fill="#222" text-anchor="middle" stroke="#fff" stroke-width="1.800" stroke-opacity=".7" paint-order="stroke">Delft</text><text x="665" y="484.78" font-size="10.5" fill="#222" text-anchor="middle" stroke="#fff" stroke-width="1.800" stroke-opacity=".7" paint-order="stroke">Arnhem</text><text x="978" y="491.78" font-size="10.5" fill="#222" text-anchor="middle" stroke="#fff" stroke-width="1.800" stroke-opacity=".7" paint-order="stroke">Münster</text><text x="658" y="527.78" font-size="10.5" fill="#222" text-anchor="middle" stroke="#fff" stroke-width="1.800" stroke-opacity=".7" paint-order="stroke">Nijmegen</text><text x="442" y="540.78" font-size="10.5" fill="#222" text-anchor="middle" stroke="#fff" stroke-width="1.800" stroke-opacity=".7" paint-order="stroke">Dordrecht</text><text x="555" y="571.78" font-size="10.5" fill="#222" text-anchor="middle" stroke="#fff" stroke-width="1.800" stroke-opacity=".7" paint-order="stroke">'s-Hertogenbosch</text><text x="1013" y="574.78" font-size="10.5" fill="#222" text-anchor="middle" stroke="#fff" stroke-width="1.800" stroke-opacity=".7" paint-order="stroke">Hamm</text><text x="460" y="601.78" font-size="10.5" fill="#222" text-anchor="middle" stroke="#fff" stroke-width="1.800" stroke-opacity=".7" paint-order="stroke">Breda</text><text x="900" y="594.28" font-size="10.5" fill="#222" text-anchor="middle" stroke="#fff" stroke-width="1.800" stroke-opacity=".7" paint-order="stroke">Recklinghausen</text><text x="483" y="371.36" font-size="13.5" fill="#333" text-anchor="middle" stroke="#fff" stroke-width="1.800" stroke-opacity=".7" paint-order="stroke">Amsterdam</text><text x="375" y="458.36" font-size="13.5" fill="#333" text-anchor="middle" stroke="#fff" stroke-width="1.800" stroke-opacity=".7" paint-order="stroke">Den Haag</text><circle cx="846.5" cy="233" r="8.700" fill="#fff" stroke="#1b2d5d" stroke-width="3"/><circle cx="846.5" cy="233" r="4.300" fill="#4ab1e6"/><circle cx="488.5" cy="356.5" r="8.700" fill="#fff" stroke="#1b2d5d" stroke-width="3"/><circle cx="488.5" cy="356.5" r="4.300" fill="#4ab1e6"/><circle cx="586.4" cy="414.5" r="8.700" fill="#fff" stroke="#1b2d5d" stroke-width="3"/><circle cx="586.4" cy="414.5" r="4.300" fill="#4ab1e6"/><circle cx="624.5" cy="459.2" r="8.700" fill="#fff" stroke="#1b2d5d" stroke-width="3"/><circle cx="624.5" cy="459.2" r="4.300" fill="#4ab1e6"/><circle cx="683.4" cy="473.4" r="8.700" fill="#fff" stroke="#1b2d5d" stroke-width="3"/><circle cx="683.4" cy="473.4" r="4.300" fill="#4ab1e6"/><circle cx="579.4" cy="499.5" r="8.700" fill="#fff" stroke="#1b2d5d" stroke-width="3"/><circle cx="579.4" cy="499.5" r="4.300" fill="#4ab1e6"/><circle cx="471.5" cy="578.4" r="8.700" fill="#fff" stroke="#1b2d5d" stroke-width="3"/><circle cx="471.5" cy="578.4" r="4.300" fill="#4ab1e6"/><circle cx="508.2" cy="375.8" r="8.700" fill="#fff" stroke="#4ab1e6" stroke-width="3"/><circle cx="508.2" cy="375.8" r="4.300" fill="#1b2d5d"/><circle cx="414.5" cy="399.7" r="8.700" fill="#fff" stroke="#4ab1e6" stroke-width="3"/><circle cx="414.5" cy="399.7" r="4.300" fill="#1b2d5d"/><circle cx="707.6" cy="484.4" r="8.700" fill="#fff" stroke="#4ab1e6" stroke-width="3"/><circle cx="707.6" cy="484.4" r="4.300" fill="#1b2d5d"/></svg>
<div style="position:absolute;left:198px;top:201px;width:836px;height:402px;box-sizing:border-box;border:1px solid #bbb;pointer-events:none"></div>
<div style="position:absolute;left:209px;top:212px;width:26px;height:52px;background:#fff;border-radius:4px;box-shadow:0 1px 5px rgba(0,0,0,.65)"></div>
<div style="position:absolute;left:209px;top:237px;width:26px;height:1px;background:#ccc"></div>
<div style="position:absolute;left:209px;top:212px;width:26px;height:26px;line-height:26px;text-align:center;font:bold 18px/26px 'Liberation Sans',sans-serif;color:#000">+</div>
<div style="position:absolute;left:209px;top:238px;width:26px;height:26px;text-align:center;font:bold 18px/26px 'Liberation Sans',sans-serif;color:#000;text-indent:1px">−</div>
<div style="position:absolute;left:246px;top:800px;width:539px;height:450px;box-sizing:border-box;background:#fff;border:1px solid #888"></div>
<div style="position:absolute;left:247px;top:801px;width:537px;height:22px;background:#ece9d8"></div>
<div style="position:absolute;left:247px;top:823px;width:537px;height:1px;background:#888"></div>
<svg style="position:absolute;left:494px;top:801px" width="46" height="22" viewBox="0 0 46 22"><g fill="#f0ede0"><rect x="0" y="0" width="1" height="22"/><rect x="22" y="0" width="1" height="22"/><rect x="44.500" y="0" width="1" height="22"/></g><g transform="translate(0 -2.600)"><path d="M4 9.200v5.800h6.200z" fill="#b3c4de"/><path d="M9.300 13.200C10 8.600 14.600 8 15.800 11.800c.6 2.600-1.600 5.200-4.600 7" fill="none" stroke="#b9c8e0" stroke-width="1.700" stroke-linecap="round"/></g><g transform="translate(45 -2.600) scale(-1 1)"><path d="M4.800 9.200v5.800h6.200z" fill="#b3c4de"/><path d="M10.100 13.200C10.800 8.600 15.400 8 16.600 11.800c.6 2.600-1.600 5.200-4.600 7" fill="none" stroke="#b9c8e0" stroke-width="1.700" stroke-linecap="round"/></g></svg>
<div style="position:absolute;left:290px;top:824px;width:1px;height:387px;background:#000"></div>
<div style="position:absolute;left:292px;top:824px;width:475px;height:15px;background:#deeff8"></div>
<div style="position:absolute;left:247px;top:824px;width:38px;height:385px;padding-top:2px;overflow:hidden;text-align:right;font-family:'Liberation Mono', monospace;font-size:12.200px;line-height:15px;color:#8a8a8a"><div>1</div><div>2</div><div>3</div><div>4</div><div>5</div><div>6</div><div>7</div><div>8</div><div>9</div><div>10</div><div>11</div><div>12</div><div>13</div><div>14</div><div>15</div><div>16</div><div>17</div><div>18</div><div>19</div><div>20</div><div>21</div><div>22</div><div>23</div><div>24</div><div>25</div><div>26</div></div>
<div style="position:absolute;left:292.500px;top:824px;width:474px;height:385px;padding-top:2px;overflow:hidden;white-space:pre;font-family:'Liberation Mono', monospace;font-size:12.220px;line-height:15px;color:#000"><div style="height:15px"><span style="color:#000">&lt;</span><span style="color:#d800d8">!</span><span style="color:#000">-- HTML template layout for projects --&gt;</span></div><div style="height:15px"><span style="color:#000">&lt;div id=</span><span style="color:#5c6bc0">"locate-anything-template-wrapper"</span><span style="color:#000">&gt;</span></div><div style="height:15px"><span style="color:#000">&lt;div id=</span><span style="color:#5c6bc0">"bloc1"</span><span style="color:#000">&gt;</span></div><div style="height:15px"><span style="color:#000">&lt;h3 class=</span><span style="color:#5c6bc0">"search_filter_title"</span><span style="color:#000">&gt;Project zoeken</span><span style="color:#d800d8">:</span><span style="color:#000">&lt;/h3&gt;</span></div><div style="height:15px"><span style="color:#000">[filters]</span></div><div style="height:15px"><span style="color:#000">&lt;/div&gt;</span></div><div style="height:15px"><span style="color:#000">&lt;div id=</span><span style="color:#5c6bc0">"bloc2"</span><span style="color:#000">&gt;</span></div><div style="height:15px"><span style="color:#000">[map]</span></div><div style="height:15px"><span style="color:#000">&lt;/div&gt;</span></div><div style="height:15px"><span style="color:#000">&lt;div id=</span><span style="color:#5c6bc0">"bloc3"</span><span style="color:#000">&gt;</span></div><div style="height:15px"><span style="color:#000">&lt;h2 class=</span><span style="color:#5c6bc0">"special-heading-tag"</span><span style="color:#000">&gt;&lt;span&gt;GEZOCHTE&lt;/span&gt; PROJECTEN&lt;/</span></div><div style="height:15px"><span style="color:#000">[navlist]</span></div><div style="height:15px"><span style="color:#000">&lt;/div&gt;</span></div><div style="height:15px"><span style="color:#000">&lt;/div&gt;</span></div><div style="height:15px"></div><div style="height:15px"><span style="color:#000">&lt;</span><span style="color:#d800d8">!</span><span style="color:#000">-- CSS --&gt;</span></div><div style="height:15px"><span style="color:#000">&lt;style&gt;</span></div><div style="height:15px"><span style="color:#d800d8">#</span><span style="color:#000">bloc1 </span><span style="color:#7fb23a">{</span></div><div style="height:15px">    <span style="color:#3a9fbf">width</span><span style="color:#d800d8">:</span><span style="color:#000">25%</span><span style="color:#d800d8">;</span></div><div style="height:15px">    <span style="color:#3a9fbf">float</span><span style="color:#d800d8">:</span><span style="color:#3a9fbf"> right</span><span style="color:#d800d8">;</span></div><div style="height:15px">    <span style="color:#3a9fbf">background</span><span style="color:#d800d8">:#</span><span style="color:#000">fff</span><span style="color:#d800d8">;</span></div><div style="height:15px">    <span style="color:#3a9fbf">font-family</span><span style="color:#d800d8">:</span><span style="color:#000"> Verdana</span><span style="color:#d800d8">;</span></div><div style="height:15px">    <span style="color:#3a9fbf">font-style</span><span style="color:#d800d8">:</span><span style="color:#000"> 16px</span><span style="color:#d800d8">;</span></div><div style="height:15px">    <span style="color:#3a9fbf">padding</span><span style="color:#d800d8">:</span><span style="color:#000">0</span><span style="color:#d800d8">;</span></div><div style="height:15px">    <span style="color:#3a9fbf">height</span><span style="color:#d800d8">:</span><span style="color:#2b35d8"> inherit</span><span style="color:#d800d8">;</span></div><div style="height:15px">    <span style="color:#3a9fbf">padding-left</span><span style="color:#d800d8">:</span><span style="color:#000"> 25px</span><span style="color:#d800d8">;</span></div></div>
<div style="position:absolute;left:767px;top:824px;width:17px;height:387px;background:#f1f1f1"></div>
<div style="position:absolute;left:769px;top:841px;width:13px;height:25px;background:#c1c1c1"></div>
<div style="position:absolute;left:771.500px;top:830px;width:0;height:0;border:4px solid transparent;border-bottom:5px solid #a3a3a3;border-top-width:0"></div>
<div style="position:absolute;left:771.500px;top:1199px;width:0;height:0;border:4px solid transparent;border-top:5px solid #505050;border-bottom-width:0"></div>
<div style="position:absolute;left:247px;top:1211px;width:537px;height:17px;background:#f1f1f1"></div>
<div style="position:absolute;left:264px;top:1213px;width:186px;height:13px;background:#c1c1c1"></div>
<div style="position:absolute;left:767px;top:1211px;width:17px;height:17px;background:#dcdcdc"></div>
<div style="position:absolute;left:252px;top:1215.500px;width:0;height:0;border:4px solid transparent;border-right:5px solid #a3a3a3;border-left-width:0"></div>
<div style="position:absolute;left:755px;top:1215.500px;width:0;height:0;border:4px solid transparent;border-left:5px solid #505050;border-right-width:0"></div>
<div style="position:absolute;left:247px;top:1228px;width:537px;height:1px;background:#888"></div>
<div style="position:absolute;left:247px;top:1229px;width:537px;height:20px;background:#ece9d8"></div>
<div style="position:absolute;left:427px;top:1229px;width:1px;height:20px;background:#888"></div>
<div style="position:absolute;left:608px;top:1229px;width:1px;height:20px;background:#888"></div>
<span id="t67" style="position:absolute;left:255.3px;top:1229px;height:20px;line-height:20px;font-size:11px;color:#000;white-space:nowrap;letter-spacing:-0.150px;">Position:</span>
<span id="t68" style="position:absolute;left:337px;top:1229px;height:20px;line-height:20px;font-size:11px;color:#000;white-space:nowrap;letter-spacing:-0.085px;">Ln 1, Ch 1</span>
<span id="t69" style="position:absolute;left:452.6px;top:1229px;height:20px;line-height:20px;font-size:11px;color:#000;white-space:nowrap;letter-spacing:0.141px;">Total:</span>
<span id="t70" style="position:absolute;left:502.6px;top:1229px;height:20px;line-height:20px;font-size:11px;color:#000;white-space:nowrap;letter-spacing:-0.061px;">Ln 367, Ch 6343</span>
</body></html>
